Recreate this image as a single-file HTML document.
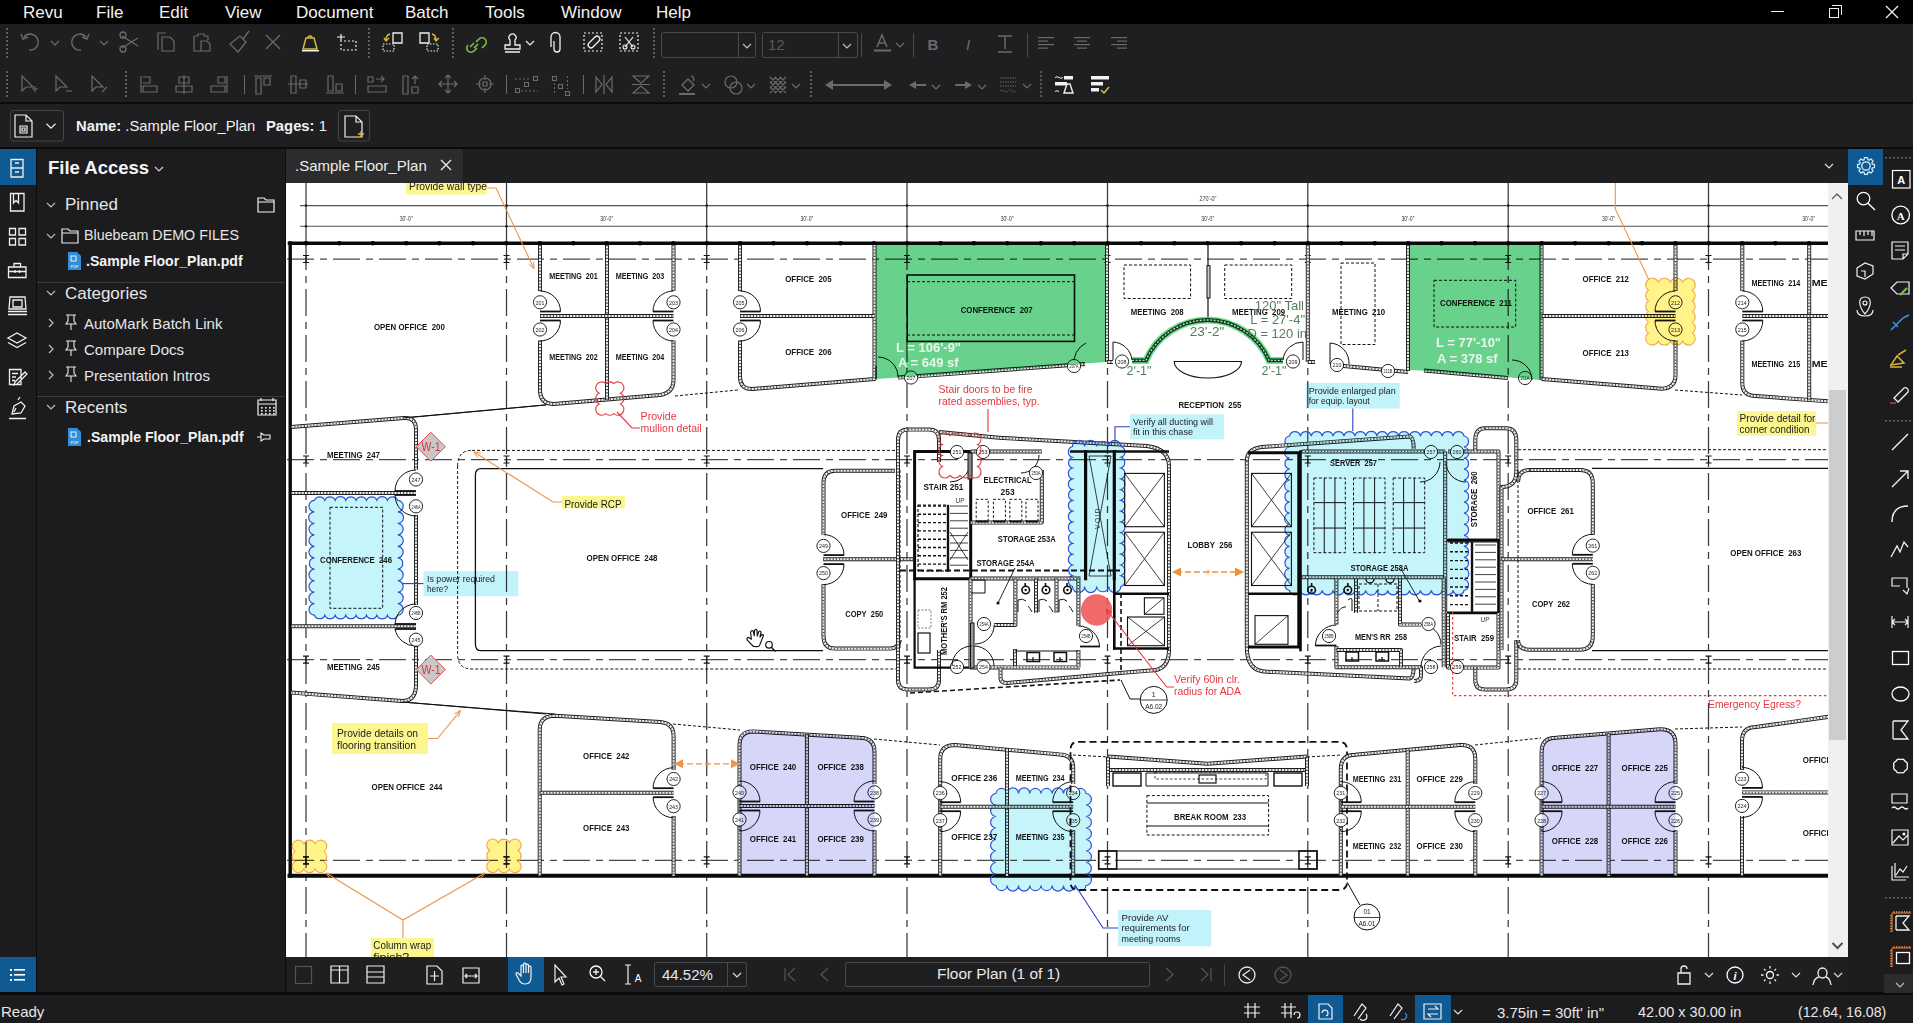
<!DOCTYPE html>
<html><head><meta charset="utf-8"><title>Revu</title><style>
*{margin:0;padding:0;box-sizing:border-box}
html,body{width:1913px;height:1023px;overflow:hidden}
body{background:#1f1f21;font-family:"Liberation Sans",sans-serif;position:relative;color:#e8e8e8}
.a{position:absolute}
.menu{left:0;top:0;width:1913px;height:24px;background:#000}
.menu span{position:absolute;top:3px;font-size:17px;line-height:19px;color:#f2f2f2}
.sep{background:#0b0b0c}
svg{position:absolute;left:0;top:0;overflow:visible}
.t{position:absolute;white-space:nowrap;line-height:1}
</style></head><body>
<!-- menu bar -->
<div class="a menu">
<span style="left:23px">Revu</span><span style="left:96px">File</span><span style="left:159px">Edit</span><span style="left:225px">View</span><span style="left:296px">Document</span><span style="left:405px">Batch</span><span style="left:485px">Tools</span><span style="left:561px">Window</span><span style="left:656px">Help</span>
</div>
<!-- toolbar bg -->
<div class="a" style="left:0;top:24px;width:1913px;height:79px;background:#1f1f21"></div>
<!-- separators -->
<div class="a sep" style="left:0;top:102px;width:1913px;height:2px"></div>
<div class="a" style="left:0;top:104px;width:1913px;height:43px;background:#1f1f21"></div>
<div class="a sep" style="left:0;top:147px;width:1913px;height:2px"></div>
<div class="t" style="left:76px;top:119px;font-size:14.8px;color:#f2f2f2"><b>Name:</b> .Sample Floor_Plan</div>
<div class="t" style="left:266px;top:119px;font-size:14.8px;color:#f2f2f2"><b>Pages:</b> 1</div>

<!-- left icon strip -->
<div class="a" style="left:0;top:149px;width:36px;height:844px;background:#1c1c1e"></div>
<div class="a" style="left:0;top:149px;width:36px;height:36px;background:#0f5a92"></div>
<div class="a" style="left:36px;top:149px;width:1px;height:844px;background:#0b0b0c"></div>
<div class="a" style="left:0;top:957px;width:36px;height:35px;background:#0f5a92"></div>

<!-- file access panel -->
<div class="a" style="left:37px;top:149px;width:248px;height:844px;background:#1c1c1e"></div>
<div class="a" style="left:37px;top:282px;width:248px;height:1px;background:#3a3a3c"></div>
<div class="a" style="left:37px;top:396px;width:248px;height:1px;background:#3a3a3c"></div>
<div class="a" style="left:285px;top:149px;width:1px;height:844px;background:#0b0b0c"></div>
<div class="t" style="left:48px;top:159px;font-size:18.5px;font-weight:bold;color:#f4f4f4">File Access</div>
<div class="t" style="left:65px;top:196px;font-size:17px;color:#e6e6e6">Pinned</div>
<div class="t" style="left:84px;top:228px;font-size:14.3px;color:#e6e6e6">Bluebeam DEMO FILES</div>
<div class="t" style="left:86px;top:254px;font-size:14.1px;font-weight:bold;color:#f4f4f4">.Sample Floor_Plan.pdf</div>
<div class="t" style="left:65px;top:285px;font-size:17px;color:#e6e6e6">Categories</div>
<div class="t" style="left:84px;top:316px;font-size:15px;color:#e6e6e6">AutoMark Batch Link</div>
<div class="t" style="left:84px;top:342px;font-size:15px;color:#e6e6e6">Compare Docs</div>
<div class="t" style="left:84px;top:368px;font-size:15px;color:#e6e6e6">Presentation Intros</div>
<div class="t" style="left:65px;top:399px;font-size:17px;color:#e6e6e6">Recents</div>
<div class="t" style="left:87px;top:430px;font-size:14.1px;font-weight:bold;color:#f4f4f4">.Sample Floor_Plan.pdf</div>

<!-- tab bar -->
<div class="a" style="left:286px;top:149px;width:1562px;height:34px;background:#1f1f21"></div>
<div class="a" style="left:286px;top:149px;width:177px;height:34px;background:#2c2c2e"></div>
<div class="t" style="left:295px;top:158px;font-size:15px;color:#ececec">.Sample Floor_Plan</div>

<!-- canvas -->
<div class="a" style="left:286px;top:183px;width:1542px;height:774px;background:#fff"></div>
<svg width="1913" height="1023" viewBox="0 0 1913 1023" style="position:absolute;left:0;top:0"><defs><clipPath id="cvc"><rect x="286" y="183" width="1542" height="774"/></clipPath></defs><g clip-path="url(#cvc)"><g font-family="Liberation Sans, sans-serif">
<line x1="300" y1="205.6" x2="1828" y2="205.6" stroke="#555" stroke-width="1.1" />
<line x1="300" y1="226.3" x2="1828" y2="226.3" stroke="#555" stroke-width="1.1" />
<text x="406.2" y="221" font-size="6.5" fill="#333" text-anchor="middle" textLength="13" lengthAdjust="spacingAndGlyphs">30'-0"</text>
<text x="606.7" y="221" font-size="6.5" fill="#333" text-anchor="middle" textLength="13" lengthAdjust="spacingAndGlyphs">30'-0"</text>
<text x="806.9000000000001" y="221" font-size="6.5" fill="#333" text-anchor="middle" textLength="13" lengthAdjust="spacingAndGlyphs">30'-0"</text>
<text x="1007.2" y="221" font-size="6.5" fill="#333" text-anchor="middle" textLength="13" lengthAdjust="spacingAndGlyphs">30'-0"</text>
<text x="1207.7" y="221" font-size="6.5" fill="#333" text-anchor="middle" textLength="13" lengthAdjust="spacingAndGlyphs">30'-0"</text>
<text x="1408.0" y="221" font-size="6.5" fill="#333" text-anchor="middle" textLength="13" lengthAdjust="spacingAndGlyphs">30'-0"</text>
<text x="1608.4" y="221" font-size="6.5" fill="#333" text-anchor="middle" textLength="13" lengthAdjust="spacingAndGlyphs">30'-0"</text>
<text x="1808.7" y="221" font-size="6.5" fill="#333" text-anchor="middle" textLength="13" lengthAdjust="spacingAndGlyphs">30'-0"</text>
<text x="1208" y="201" font-size="6.5" fill="#333" text-anchor="middle" textLength="17" lengthAdjust="spacingAndGlyphs">270'-0"</text>
<line x1="306" y1="183" x2="306" y2="243" stroke="#3a3a3a" stroke-width="1.25" />
<line x1="306" y1="243" x2="306" y2="957" stroke="#3a3a3a" stroke-width="1.25" stroke-dasharray="27 6 7 6"/>
<circle cx="306" cy="205.6" r="1.3" fill="#222"/><circle cx="306" cy="226.3" r="1.3" fill="#222"/>
<line x1="506.5" y1="183" x2="506.5" y2="243" stroke="#3a3a3a" stroke-width="1.25" />
<line x1="506.5" y1="243" x2="506.5" y2="957" stroke="#3a3a3a" stroke-width="1.25" stroke-dasharray="27 6 7 6"/>
<circle cx="506.5" cy="205.6" r="1.3" fill="#222"/><circle cx="506.5" cy="226.3" r="1.3" fill="#222"/>
<line x1="706.7" y1="183" x2="706.7" y2="243" stroke="#3a3a3a" stroke-width="1.25" />
<line x1="706.7" y1="243" x2="706.7" y2="957" stroke="#3a3a3a" stroke-width="1.25" stroke-dasharray="27 6 7 6"/>
<circle cx="706.7" cy="205.6" r="1.3" fill="#222"/><circle cx="706.7" cy="226.3" r="1.3" fill="#222"/>
<line x1="907" y1="183" x2="907" y2="243" stroke="#3a3a3a" stroke-width="1.25" />
<line x1="907" y1="243" x2="907" y2="957" stroke="#3a3a3a" stroke-width="1.25" stroke-dasharray="27 6 7 6"/>
<circle cx="907" cy="205.6" r="1.3" fill="#222"/><circle cx="907" cy="226.3" r="1.3" fill="#222"/>
<line x1="1107.5" y1="183" x2="1107.5" y2="243" stroke="#3a3a3a" stroke-width="1.25" />
<line x1="1107.5" y1="243" x2="1107.5" y2="957" stroke="#3a3a3a" stroke-width="1.25" stroke-dasharray="27 6 7 6"/>
<circle cx="1107.5" cy="205.6" r="1.3" fill="#222"/><circle cx="1107.5" cy="226.3" r="1.3" fill="#222"/>
<line x1="1307.8" y1="183" x2="1307.8" y2="243" stroke="#3a3a3a" stroke-width="1.25" />
<line x1="1307.8" y1="243" x2="1307.8" y2="957" stroke="#3a3a3a" stroke-width="1.25" stroke-dasharray="27 6 7 6"/>
<circle cx="1307.8" cy="205.6" r="1.3" fill="#222"/><circle cx="1307.8" cy="226.3" r="1.3" fill="#222"/>
<line x1="1508.2" y1="183" x2="1508.2" y2="243" stroke="#3a3a3a" stroke-width="1.25" />
<line x1="1508.2" y1="243" x2="1508.2" y2="957" stroke="#3a3a3a" stroke-width="1.25" stroke-dasharray="27 6 7 6"/>
<circle cx="1508.2" cy="205.6" r="1.3" fill="#222"/><circle cx="1508.2" cy="226.3" r="1.3" fill="#222"/>
<line x1="1708.5" y1="183" x2="1708.5" y2="243" stroke="#3a3a3a" stroke-width="1.25" />
<line x1="1708.5" y1="243" x2="1708.5" y2="957" stroke="#3a3a3a" stroke-width="1.25" stroke-dasharray="27 6 7 6"/>
<circle cx="1708.5" cy="205.6" r="1.3" fill="#222"/><circle cx="1708.5" cy="226.3" r="1.3" fill="#222"/>
<line x1="287" y1="259" x2="1828" y2="259" stroke="#4a4a4a" stroke-width="1.25" stroke-dasharray="27 6 7 6"/>
<line x1="287" y1="459.5" x2="1828" y2="459.5" stroke="#4a4a4a" stroke-width="1.25" stroke-dasharray="27 6 7 6"/>
<line x1="287" y1="659.7" x2="1828" y2="659.7" stroke="#4a4a4a" stroke-width="1.25" stroke-dasharray="27 6 7 6"/>
<line x1="287" y1="860.3" x2="1828" y2="860.3" stroke="#4a4a4a" stroke-width="1.25" stroke-dasharray="27 6 7 6"/>
<path d="M303 255.5H309M303 262.5H309M306 255.5V262.5" stroke="#111" stroke-width="1.2" fill="none" />
<path d="M303 456.0H309M303 463.0H309M306 456.0V463.0" stroke="#111" stroke-width="1.2" fill="none" />
<path d="M303 656.2H309M303 663.2H309M306 656.2V663.2" stroke="#111" stroke-width="1.2" fill="none" />
<path d="M303 856.8H309M303 863.8H309M306 856.8V863.8" stroke="#111" stroke-width="1.2" fill="none" />
<path d="M503.5 255.5H509.5M503.5 262.5H509.5M506.5 255.5V262.5" stroke="#111" stroke-width="1.2" fill="none" />
<path d="M503.5 456.0H509.5M503.5 463.0H509.5M506.5 456.0V463.0" stroke="#111" stroke-width="1.2" fill="none" />
<path d="M503.5 656.2H509.5M503.5 663.2H509.5M506.5 656.2V663.2" stroke="#111" stroke-width="1.2" fill="none" />
<path d="M503.5 856.8H509.5M503.5 863.8H509.5M506.5 856.8V863.8" stroke="#111" stroke-width="1.2" fill="none" />
<path d="M703.7 255.5H709.7M703.7 262.5H709.7M706.7 255.5V262.5" stroke="#111" stroke-width="1.2" fill="none" />
<path d="M703.7 456.0H709.7M703.7 463.0H709.7M706.7 456.0V463.0" stroke="#111" stroke-width="1.2" fill="none" />
<path d="M703.7 656.2H709.7M703.7 663.2H709.7M706.7 656.2V663.2" stroke="#111" stroke-width="1.2" fill="none" />
<path d="M703.7 856.8H709.7M703.7 863.8H709.7M706.7 856.8V863.8" stroke="#111" stroke-width="1.2" fill="none" />
<path d="M904 255.5H910M904 262.5H910M907 255.5V262.5" stroke="#111" stroke-width="1.2" fill="none" />
<path d="M904 456.0H910M904 463.0H910M907 456.0V463.0" stroke="#111" stroke-width="1.2" fill="none" />
<path d="M904 656.2H910M904 663.2H910M907 656.2V663.2" stroke="#111" stroke-width="1.2" fill="none" />
<path d="M904 856.8H910M904 863.8H910M907 856.8V863.8" stroke="#111" stroke-width="1.2" fill="none" />
<path d="M1104.5 255.5H1110.5M1104.5 262.5H1110.5M1107.5 255.5V262.5" stroke="#111" stroke-width="1.2" fill="none" />
<path d="M1104.5 456.0H1110.5M1104.5 463.0H1110.5M1107.5 456.0V463.0" stroke="#111" stroke-width="1.2" fill="none" />
<path d="M1104.5 656.2H1110.5M1104.5 663.2H1110.5M1107.5 656.2V663.2" stroke="#111" stroke-width="1.2" fill="none" />
<path d="M1104.5 856.8H1110.5M1104.5 863.8H1110.5M1107.5 856.8V863.8" stroke="#111" stroke-width="1.2" fill="none" />
<path d="M1304.8 255.5H1310.8M1304.8 262.5H1310.8M1307.8 255.5V262.5" stroke="#111" stroke-width="1.2" fill="none" />
<path d="M1304.8 456.0H1310.8M1304.8 463.0H1310.8M1307.8 456.0V463.0" stroke="#111" stroke-width="1.2" fill="none" />
<path d="M1304.8 656.2H1310.8M1304.8 663.2H1310.8M1307.8 656.2V663.2" stroke="#111" stroke-width="1.2" fill="none" />
<path d="M1304.8 856.8H1310.8M1304.8 863.8H1310.8M1307.8 856.8V863.8" stroke="#111" stroke-width="1.2" fill="none" />
<path d="M1505.2 255.5H1511.2M1505.2 262.5H1511.2M1508.2 255.5V262.5" stroke="#111" stroke-width="1.2" fill="none" />
<path d="M1505.2 456.0H1511.2M1505.2 463.0H1511.2M1508.2 456.0V463.0" stroke="#111" stroke-width="1.2" fill="none" />
<path d="M1505.2 656.2H1511.2M1505.2 663.2H1511.2M1508.2 656.2V663.2" stroke="#111" stroke-width="1.2" fill="none" />
<path d="M1505.2 856.8H1511.2M1505.2 863.8H1511.2M1508.2 856.8V863.8" stroke="#111" stroke-width="1.2" fill="none" />
<path d="M1705.5 255.5H1711.5M1705.5 262.5H1711.5M1708.5 255.5V262.5" stroke="#111" stroke-width="1.2" fill="none" />
<path d="M1705.5 456.0H1711.5M1705.5 463.0H1711.5M1708.5 456.0V463.0" stroke="#111" stroke-width="1.2" fill="none" />
<path d="M1705.5 656.2H1711.5M1705.5 663.2H1711.5M1708.5 656.2V663.2" stroke="#111" stroke-width="1.2" fill="none" />
<path d="M1705.5 856.8H1711.5M1705.5 863.8H1711.5M1708.5 856.8V863.8" stroke="#111" stroke-width="1.2" fill="none" />
</g>
<path d="M289.5 243.2 H1830" stroke="#0a0a0a" stroke-width="3.6" fill="none" stroke-linecap="square"/>
<path d="M290.2 243 V876" stroke="#0a0a0a" stroke-width="3.4" fill="none" stroke-linecap="square"/>
<path d="M289.5 875.7 H1830" stroke="#0a0a0a" stroke-width="4" fill="none" stroke-linecap="square"/>
<circle cx="306.0" cy="243.2" r="2.2" fill="#000"/>
<circle cx="339.4" cy="243.2" r="2.2" fill="#000"/>
<circle cx="372.8" cy="243.2" r="2.2" fill="#000"/>
<circle cx="406.2" cy="243.2" r="2.2" fill="#000"/>
<circle cx="439.6" cy="243.2" r="2.2" fill="#000"/>
<circle cx="473.0" cy="243.2" r="2.2" fill="#000"/>
<circle cx="506.4" cy="243.2" r="2.2" fill="#000"/>
<circle cx="539.8" cy="243.2" r="2.2" fill="#000"/>
<circle cx="573.2" cy="243.2" r="2.2" fill="#000"/>
<circle cx="606.6" cy="243.2" r="2.2" fill="#000"/>
<circle cx="640.0" cy="243.2" r="2.2" fill="#000"/>
<circle cx="673.4" cy="243.2" r="2.2" fill="#000"/>
<circle cx="706.8" cy="243.2" r="2.2" fill="#000"/>
<circle cx="740.2" cy="243.2" r="2.2" fill="#000"/>
<circle cx="773.6" cy="243.2" r="2.2" fill="#000"/>
<circle cx="807.0" cy="243.2" r="2.2" fill="#000"/>
<circle cx="840.4" cy="243.2" r="2.2" fill="#000"/>
<circle cx="873.8" cy="243.2" r="2.2" fill="#000"/>
<circle cx="907.2" cy="243.2" r="2.2" fill="#000"/>
<circle cx="940.6" cy="243.2" r="2.2" fill="#000"/>
<circle cx="974.0" cy="243.2" r="2.2" fill="#000"/>
<circle cx="1007.4" cy="243.2" r="2.2" fill="#000"/>
<circle cx="1040.8" cy="243.2" r="2.2" fill="#000"/>
<circle cx="1074.2" cy="243.2" r="2.2" fill="#000"/>
<circle cx="1107.6" cy="243.2" r="2.2" fill="#000"/>
<circle cx="1141.0" cy="243.2" r="2.2" fill="#000"/>
<circle cx="1174.4" cy="243.2" r="2.2" fill="#000"/>
<circle cx="1207.8" cy="243.2" r="2.2" fill="#000"/>
<circle cx="1241.2" cy="243.2" r="2.2" fill="#000"/>
<circle cx="1274.6" cy="243.2" r="2.2" fill="#000"/>
<circle cx="1308.0" cy="243.2" r="2.2" fill="#000"/>
<circle cx="1341.4" cy="243.2" r="2.2" fill="#000"/>
<circle cx="1374.8" cy="243.2" r="2.2" fill="#000"/>
<circle cx="1408.2" cy="243.2" r="2.2" fill="#000"/>
<circle cx="1441.6" cy="243.2" r="2.2" fill="#000"/>
<circle cx="1475.0" cy="243.2" r="2.2" fill="#000"/>
<circle cx="1508.4" cy="243.2" r="2.2" fill="#000"/>
<circle cx="1541.8" cy="243.2" r="2.2" fill="#000"/>
<circle cx="1575.2" cy="243.2" r="2.2" fill="#000"/>
<circle cx="1608.6" cy="243.2" r="2.2" fill="#000"/>
<circle cx="1642.0" cy="243.2" r="2.2" fill="#000"/>
<circle cx="1675.4" cy="243.2" r="2.2" fill="#000"/>
<circle cx="1708.8" cy="243.2" r="2.2" fill="#000"/>
<circle cx="1742.2" cy="243.2" r="2.2" fill="#000"/>
<circle cx="1775.6" cy="243.2" r="2.2" fill="#000"/>
<circle cx="1809.0" cy="243.2" r="2.2" fill="#000"/>
<circle cx="1842.4" cy="243.2" r="2.2" fill="#000"/>
<path d="M404 418 L546 405" stroke="#111" stroke-width="1" fill="none" />
<path d="M675 396 L738 390" stroke="#111" stroke-width="1" fill="none" stroke-dasharray="3 2"/>
<path d="M291 409 L289 409" stroke="#111" stroke-width="1" fill="none" />
<path d="M1675 390 L1742 395" stroke="#111" stroke-width="1" fill="none" stroke-dasharray="3 2"/>
<path d="M402 702 L546 714" stroke="#111" stroke-width="1" fill="none" />
<path d="M673 724 L740 730" stroke="#111" stroke-width="1" fill="none" stroke-dasharray="3 2"/>
<path d="M874 739 L940 745" stroke="#111" stroke-width="1" fill="none" stroke-dasharray="3 2"/>
<path d="M1073 755 L1108 757" stroke="#111" stroke-width="1" fill="none" stroke-dasharray="3 2"/>
<path d="M1307 757 L1341 755" stroke="#111" stroke-width="1" fill="none" stroke-dasharray="3 2"/>
<path d="M1475 745 L1541 738" stroke="#111" stroke-width="1" fill="none" stroke-dasharray="3 2"/>
<path d="M1675 729 L1742 727" stroke="#111" stroke-width="1" fill="none" stroke-dasharray="3 2"/>
<path d="M540 245 V291 M540 340.5 V390 Q540 404 554 404 L660 395 Q673.5 393 673.5 380 V340.5 M673.5 291 V245" stroke="#1c1c1c" stroke-width="4" fill="none" stroke-linejoin="round"/>
<path d="M540 245 V291 M540 340.5 V390 Q540 404 554 404 L660 395 Q673.5 393 673.5 380 V340.5 M673.5 291 V245" stroke="#f2f2f2" stroke-width="2.1" fill="none" stroke-linejoin="round"/>
<path d="M540 245 V291 M540 340.5 V390 Q540 404 554 404 L660 395 Q673.5 393 673.5 380 V340.5 M673.5 291 V245" stroke="#555" stroke-width="2" fill="none" stroke-dasharray="1.2 2" stroke-linejoin="round"/>
<path d="M607 245 V400" stroke="#1c1c1c" stroke-width="4" fill="none" stroke-linejoin="round"/>
<path d="M607 245 V400" stroke="#f2f2f2" stroke-width="2.1" fill="none" stroke-linejoin="round"/>
<path d="M607 245 V400" stroke="#555" stroke-width="2" fill="none" stroke-dasharray="1.2 2" stroke-linejoin="round"/>
<path d="M540 316 H673.5" stroke="#1c1c1c" stroke-width="4" fill="none" stroke-linejoin="round"/>
<path d="M540 316 H673.5" stroke="#f2f2f2" stroke-width="2.1" fill="none" stroke-linejoin="round"/>
<path d="M540 316 H673.5" stroke="#555" stroke-width="2" fill="none" stroke-dasharray="1.2 2" stroke-linejoin="round"/>
<path d="M540 291.0 A20.5 20.5 0 0 1 560.5 311.5" stroke="#111" stroke-width="1" fill="none" />
<line x1="540" y1="311.5" x2="560.5" y2="311.5" stroke="#111" stroke-width="1.8" />
<path d="M540 341.0 A20.5 20.5 0 0 0 560.5 320.5" stroke="#111" stroke-width="1" fill="none" />
<line x1="540" y1="320.5" x2="560.5" y2="320.5" stroke="#111" stroke-width="1.8" />
<circle cx="540" cy="302.3" r="6.6" fill="#fff" stroke="#111" stroke-width="0.9"/>
<text x="540" y="302.6" font-size="5.5" fill="#222" text-anchor="middle" dominant-baseline="central" textLength="8.9" lengthAdjust="spacingAndGlyphs">201</text>
<circle cx="540" cy="329.5" r="6.6" fill="#fff" stroke="#111" stroke-width="0.9"/>
<text x="540" y="329.8" font-size="5.5" fill="#222" text-anchor="middle" dominant-baseline="central" textLength="8.9" lengthAdjust="spacingAndGlyphs">202</text>
<path d="M673.5 291.0 A20.5 20.5 0 0 0 653.0 311.5" stroke="#111" stroke-width="1" fill="none" />
<line x1="673.5" y1="311.5" x2="653.0" y2="311.5" stroke="#111" stroke-width="1.8" />
<path d="M673.5 341.0 A20.5 20.5 0 0 1 653.0 320.5" stroke="#111" stroke-width="1" fill="none" />
<line x1="673.5" y1="320.5" x2="653.0" y2="320.5" stroke="#111" stroke-width="1.8" />
<circle cx="673.5" cy="302.3" r="6.6" fill="#fff" stroke="#111" stroke-width="0.9"/>
<text x="673.5" y="302.6" font-size="5.5" fill="#222" text-anchor="middle" dominant-baseline="central" textLength="8.9" lengthAdjust="spacingAndGlyphs">203</text>
<circle cx="673.5" cy="329.5" r="6.6" fill="#fff" stroke="#111" stroke-width="0.9"/>
<text x="673.5" y="329.8" font-size="5.5" fill="#222" text-anchor="middle" dominant-baseline="central" textLength="8.9" lengthAdjust="spacingAndGlyphs">204</text>
<text x="573.5" y="275.6" font-size="9.6" font-weight="bold" fill="#161616" text-anchor="middle" dominant-baseline="central" textLength="48.7" lengthAdjust="spacingAndGlyphs">MEETING&#160;&#160;201</text>
<text x="640" y="275.6" font-size="9.6" font-weight="bold" fill="#161616" text-anchor="middle" dominant-baseline="central" textLength="48.7" lengthAdjust="spacingAndGlyphs">MEETING&#160;&#160;203</text>
<text x="573.5" y="356.5" font-size="9.6" font-weight="bold" fill="#161616" text-anchor="middle" dominant-baseline="central" textLength="48.7" lengthAdjust="spacingAndGlyphs">MEETING&#160;&#160;202</text>
<text x="640" y="356.5" font-size="9.6" font-weight="bold" fill="#161616" text-anchor="middle" dominant-baseline="central" textLength="48.7" lengthAdjust="spacingAndGlyphs">MEETING&#160;&#160;204</text>
<text x="409.4" y="326.3" font-size="9.6" font-weight="bold" fill="#161616" text-anchor="middle" dominant-baseline="central" textLength="71" lengthAdjust="spacingAndGlyphs">OPEN OFFICE&#160;&#160;200</text>
<path d="M740 245 V291 M740 340.5 V377 Q740 389 752 389 L874.5 379 V245" stroke="#1c1c1c" stroke-width="4" fill="none" stroke-linejoin="round"/>
<path d="M740 245 V291 M740 340.5 V377 Q740 389 752 389 L874.5 379 V245" stroke="#f2f2f2" stroke-width="2.1" fill="none" stroke-linejoin="round"/>
<path d="M740 245 V291 M740 340.5 V377 Q740 389 752 389 L874.5 379 V245" stroke="#555" stroke-width="2" fill="none" stroke-dasharray="1.2 2" stroke-linejoin="round"/>
<path d="M740 316 H874.5" stroke="#1c1c1c" stroke-width="4" fill="none" stroke-linejoin="round"/>
<path d="M740 316 H874.5" stroke="#f2f2f2" stroke-width="2.1" fill="none" stroke-linejoin="round"/>
<path d="M740 316 H874.5" stroke="#555" stroke-width="2" fill="none" stroke-dasharray="1.2 2" stroke-linejoin="round"/>
<path d="M740 291.0 A20.5 20.5 0 0 1 760.5 311.5" stroke="#111" stroke-width="1" fill="none" />
<line x1="740" y1="311.5" x2="760.5" y2="311.5" stroke="#111" stroke-width="1.8" />
<path d="M740 341.0 A20.5 20.5 0 0 0 760.5 320.5" stroke="#111" stroke-width="1" fill="none" />
<line x1="740" y1="320.5" x2="760.5" y2="320.5" stroke="#111" stroke-width="1.8" />
<circle cx="740" cy="302.3" r="6.6" fill="#fff" stroke="#111" stroke-width="0.9"/>
<text x="740" y="302.6" font-size="5.5" fill="#222" text-anchor="middle" dominant-baseline="central" textLength="8.9" lengthAdjust="spacingAndGlyphs">205</text>
<circle cx="740" cy="329.5" r="6.6" fill="#fff" stroke="#111" stroke-width="0.9"/>
<text x="740" y="329.8" font-size="5.5" fill="#222" text-anchor="middle" dominant-baseline="central" textLength="8.9" lengthAdjust="spacingAndGlyphs">206</text>
<text x="808.4" y="278.6" font-size="9.6" font-weight="bold" fill="#161616" text-anchor="middle" dominant-baseline="central" textLength="46.4" lengthAdjust="spacingAndGlyphs">OFFICE&#160;&#160;205</text>
<text x="808.4" y="351.8" font-size="9.6" font-weight="bold" fill="#161616" text-anchor="middle" dominant-baseline="central" textLength="46.4" lengthAdjust="spacingAndGlyphs">OFFICE&#160;&#160;206</text>
<path d="M898 377.6 L1085 364" stroke="#1c1c1c" stroke-width="4" fill="none" stroke-linejoin="round"/>
<path d="M898 377.6 L1085 364" stroke="#f2f2f2" stroke-width="2.1" fill="none" stroke-linejoin="round"/>
<path d="M898 377.6 L1085 364" stroke="#555" stroke-width="2" fill="none" stroke-dasharray="1.2 2" stroke-linejoin="round"/>
<rect x="907.2" y="275" width="167.3" height="66.4" stroke="#111" stroke-width="1.6" fill="none" />
<path d="M907 281.7 H1074.5 M907 335 H1074.5" stroke="#111" stroke-width="1" fill="none" stroke-dasharray="3 2"/>
<text x="996.7" y="309" font-size="9.6" font-weight="bold" fill="#161616" text-anchor="middle" dominant-baseline="central" textLength="72" lengthAdjust="spacingAndGlyphs">CONFERENCE&#160;&#160;207</text>
<path d="M876 379 V366" stroke="#111" stroke-width="1.2" fill="none" />
<path d="M878 357 A20 20 0 0 1 898 377" stroke="#111" stroke-width="1" fill="none" />
<circle cx="911" cy="377.5" r="6.6" fill="#fff" stroke="#111" stroke-width="0.9"/>
<text x="911" y="377.8" font-size="5.5" fill="#222" text-anchor="middle" dominant-baseline="central" textLength="8.9" lengthAdjust="spacingAndGlyphs">207</text>
<path d="M1086 343 A22 22 0 0 0 1074 366" stroke="#111" stroke-width="1" fill="none" />
<circle cx="1074" cy="366" r="6.6" fill="#fff" stroke="#111" stroke-width="0.9"/>
<text x="1074" y="366.3" font-size="5.5" fill="#222" text-anchor="middle" dominant-baseline="central" textLength="8.9" lengthAdjust="spacingAndGlyphs">207A</text>
<path d="M1107 245 V362" stroke="#1c1c1c" stroke-width="4" fill="none" stroke-linejoin="round"/>
<path d="M1107 245 V362" stroke="#f2f2f2" stroke-width="2.1" fill="none" stroke-linejoin="round"/>
<path d="M1107 245 V362" stroke="#555" stroke-width="2" fill="none" stroke-dasharray="1.2 2" stroke-linejoin="round"/>
<path d="M1107 362 H1113" stroke="#1c1c1c" stroke-width="4" fill="none" stroke-linejoin="round"/>
<path d="M1107 362 H1113" stroke="#f2f2f2" stroke-width="2.1" fill="none" stroke-linejoin="round"/>
<path d="M1107 362 H1113" stroke="#555" stroke-width="2" fill="none" stroke-dasharray="1.2 2" stroke-linejoin="round"/>
<path d="M1208 245 V320" stroke="#111" stroke-width="1.2"/>
<rect x="1207" y="265.6" width="3" height="32.4" stroke="#111" stroke-width="1" fill="#ccc" />
<path d="M1124 265 H1190.6 V298.5 H1124Z" stroke="#111" stroke-width="1" fill="none" stroke-dasharray="3 2"/>
<path d="M1224.7 265 H1291.7 V298.5 H1224.7Z" stroke="#111" stroke-width="1" fill="none" stroke-dasharray="3 2"/>
<text x="1157.2" y="311.2" font-size="9.6" font-weight="bold" fill="#161616" text-anchor="middle" dominant-baseline="central" textLength="53" lengthAdjust="spacingAndGlyphs">MEETING&#160;&#160;208</text>
<text x="1258.6" y="311.2" font-size="9.6" font-weight="bold" fill="#161616" text-anchor="middle" dominant-baseline="central" textLength="53" lengthAdjust="spacingAndGlyphs">MEETING&#160;&#160;209</text>
<path d="M1132 360.4 H1146 A67 67 0 0 1 1269 360.4 H1283" stroke="#3fd46a" stroke-width="7" fill="none" opacity="0.75"/>
<path d="M1132 360.4 H1146 A67 67 0 0 1 1269 360.4 H1283" stroke="#0f3a18" stroke-width="3.8" fill="none"/>
<path d="M1132 360.4 H1146 A67 67 0 0 1 1269 360.4 H1283" stroke="#b8d8bf" stroke-width="1.4" fill="none" stroke-dasharray="2 1.5"/>
<path d="M1113 342 V360 M1113 342 A20 20 0 0 1 1132 360" stroke="#111" stroke-width="1" fill="none" />
<circle cx="1122" cy="361.5" r="6.6" fill="#fff" stroke="#111" stroke-width="0.9"/>
<text x="1122" y="361.8" font-size="5.5" fill="#222" text-anchor="middle" dominant-baseline="central" textLength="8.9" lengthAdjust="spacingAndGlyphs">208</text>
<path d="M1303 342 V360 M1303 342 A20 20 0 0 0 1283 360" stroke="#111" stroke-width="1" fill="none" />
<circle cx="1293" cy="361.5" r="6.6" fill="#fff" stroke="#111" stroke-width="0.9"/>
<text x="1293" y="361.8" font-size="5.5" fill="#222" text-anchor="middle" dominant-baseline="central" textLength="8.9" lengthAdjust="spacingAndGlyphs">209</text>
<path d="M1174.2 361.5 H1241.5 A33.6 16.5 0 0 1 1174.2 361.5Z" stroke="#111" stroke-width="1.1" fill="none" />
<text x="1207" y="336" font-size="13.5" fill="#3f7048" fill-opacity="0.9" text-anchor="middle">23'-2"</text>
<text x="1139" y="375" font-size="12.5" fill="#3f7048" fill-opacity="0.9" text-anchor="middle">2'-1"</text>
<text x="1274" y="375" font-size="12.5" fill="#3f7048" fill-opacity="0.9" text-anchor="middle">2'-1"</text>
<text x="1304" y="310" font-size="13" fill="#3f7048" fill-opacity="0.9" text-anchor="end">120" Tall</text>
<text x="1305" y="324" font-size="13" fill="#3f7048" fill-opacity="0.9" text-anchor="end">L = 27'-4"</text>
<text x="1307" y="338" font-size="13" fill="#3f7048" fill-opacity="0.9" text-anchor="end">D = 120 in</text>
<text x="1209.9" y="404.4" font-size="9.6" font-weight="bold" fill="#161616" text-anchor="middle" dominant-baseline="central" textLength="63" lengthAdjust="spacingAndGlyphs">RECEPTION&#160;&#160;255</text>
<path d="M1307.8 245 V362" stroke="#1c1c1c" stroke-width="4" fill="none" stroke-linejoin="round"/>
<path d="M1307.8 245 V362" stroke="#f2f2f2" stroke-width="2.1" fill="none" stroke-linejoin="round"/>
<path d="M1307.8 245 V362" stroke="#555" stroke-width="2" fill="none" stroke-dasharray="1.2 2" stroke-linejoin="round"/>
<path d="M1307.8 362 H1315" stroke="#1c1c1c" stroke-width="4" fill="none" stroke-linejoin="round"/>
<path d="M1307.8 362 H1315" stroke="#f2f2f2" stroke-width="2.1" fill="none" stroke-linejoin="round"/>
<path d="M1307.8 362 H1315" stroke="#555" stroke-width="2" fill="none" stroke-dasharray="1.2 2" stroke-linejoin="round"/>
<path d="M1408 245 V371" stroke="#1c1c1c" stroke-width="4" fill="none" stroke-linejoin="round"/>
<path d="M1408 245 V371" stroke="#f2f2f2" stroke-width="2.1" fill="none" stroke-linejoin="round"/>
<path d="M1408 245 V371" stroke="#555" stroke-width="2" fill="none" stroke-dasharray="1.2 2" stroke-linejoin="round"/>
<path d="M1341 263 H1375 V344.5 H1341Z" stroke="#111" stroke-width="1" fill="none" stroke-dasharray="3 2"/>
<text x="1358.6" y="311.2" font-size="9.6" font-weight="bold" fill="#161616" text-anchor="middle" dominant-baseline="central" textLength="53" lengthAdjust="spacingAndGlyphs">MEETING&#160;&#160;210</text>
<path d="M1333 365 L1408 372" stroke="#1c1c1c" stroke-width="4" fill="none" stroke-linejoin="round"/>
<path d="M1333 365 L1408 372" stroke="#f2f2f2" stroke-width="2.1" fill="none" stroke-linejoin="round"/>
<path d="M1333 365 L1408 372" stroke="#555" stroke-width="2" fill="none" stroke-dasharray="1.2 2" stroke-linejoin="round"/>
<path d="M1330 343 V364 M1330 343 A20 20 0 0 1 1349 364" stroke="#111" stroke-width="1" fill="none" />
<circle cx="1337" cy="365" r="6.6" fill="#fff" stroke="#111" stroke-width="0.9"/>
<text x="1337" y="365.3" font-size="5.5" fill="#222" text-anchor="middle" dominant-baseline="central" textLength="8.9" lengthAdjust="spacingAndGlyphs">210</text>
<path d="M1434 280.3 H1515.7 V327 H1434Z" stroke="#111" stroke-width="1" fill="none" stroke-dasharray="3 2"/>
<text x="1476" y="302.7" font-size="9.6" font-weight="bold" fill="#161616" text-anchor="middle" dominant-baseline="central" textLength="72" lengthAdjust="spacingAndGlyphs">CONFERENCE&#160;&#160;211</text>
<path d="M1424 370.5 L1508 378" stroke="#1c1c1c" stroke-width="4" fill="none" stroke-linejoin="round"/>
<path d="M1424 370.5 L1508 378" stroke="#f2f2f2" stroke-width="2.1" fill="none" stroke-linejoin="round"/>
<path d="M1424 370.5 L1508 378" stroke="#555" stroke-width="2" fill="none" stroke-dasharray="1.2 2" stroke-linejoin="round"/>
<path d="M1541.5 245 V380" stroke="#1c1c1c" stroke-width="4" fill="none" stroke-linejoin="round"/>
<path d="M1541.5 245 V380" stroke="#f2f2f2" stroke-width="2.1" fill="none" stroke-linejoin="round"/>
<path d="M1541.5 245 V380" stroke="#555" stroke-width="2" fill="none" stroke-dasharray="1.2 2" stroke-linejoin="round"/>
<path d="M1512 360 A20 20 0 0 1 1532 380" stroke="#111" stroke-width="1" fill="none" />
<circle cx="1525" cy="378" r="6.6" fill="#fff" stroke="#111" stroke-width="0.9"/>
<text x="1525" y="378.3" font-size="5.5" fill="#222" text-anchor="middle" dominant-baseline="central" textLength="8.9" lengthAdjust="spacingAndGlyphs">211A</text>
<circle cx="1388" cy="371" r="6.6" fill="#fff" stroke="#111" stroke-width="0.9"/>
<text x="1388" y="371.3" font-size="5.5" fill="#222" text-anchor="middle" dominant-baseline="central" textLength="8.9" lengthAdjust="spacingAndGlyphs">211B</text>
<path d="M1648.34 290.25 A6.66 6.66 0 1 1 1658.35 282.13 A6.66 6.66 0 0 1 1670.45 282.13 A6.66 6.66 0 0 1 1682.55 282.13 A6.66 6.66 0 1 1 1692.56 290.25 A6.66 6.66 0 0 1 1692.56 300.95 A6.66 6.66 0 0 1 1692.56 311.65 A6.66 6.66 0 0 1 1692.56 322.35 A6.66 6.66 0 0 1 1692.56 333.05 A6.66 6.66 0 1 1 1682.55 341.17 A6.66 6.66 0 0 1 1670.45 341.17 A6.66 6.66 0 0 1 1658.35 341.17 A6.66 6.66 0 1 1 1648.34 333.05 A6.66 6.66 0 0 1 1648.34 322.35 A6.66 6.66 0 0 1 1648.34 311.65 A6.66 6.66 0 0 1 1648.34 300.95 A6.66 6.66 0 0 1 1648.34 290.25Z" stroke="#f2ad5c" stroke-width="1.1" fill="none" />
<path d="M1541.5 379 L1662 388.7 Q1675.5 388 1675.5 375 V340.5 M1675.5 291 V245" stroke="#1c1c1c" stroke-width="4" fill="none" stroke-linejoin="round"/>
<path d="M1541.5 379 L1662 388.7 Q1675.5 388 1675.5 375 V340.5 M1675.5 291 V245" stroke="#f2f2f2" stroke-width="2.1" fill="none" stroke-linejoin="round"/>
<path d="M1541.5 379 L1662 388.7 Q1675.5 388 1675.5 375 V340.5 M1675.5 291 V245" stroke="#555" stroke-width="2" fill="none" stroke-dasharray="1.2 2" stroke-linejoin="round"/>
<path d="M1541.5 316 H1675.5" stroke="#1c1c1c" stroke-width="4" fill="none" stroke-linejoin="round"/>
<path d="M1541.5 316 H1675.5" stroke="#f2f2f2" stroke-width="2.1" fill="none" stroke-linejoin="round"/>
<path d="M1541.5 316 H1675.5" stroke="#555" stroke-width="2" fill="none" stroke-dasharray="1.2 2" stroke-linejoin="round"/>
<path d="M1675.5 291.0 A20.5 20.5 0 0 0 1655.0 311.5" stroke="#111" stroke-width="1" fill="none" />
<line x1="1675.5" y1="311.5" x2="1655.0" y2="311.5" stroke="#111" stroke-width="1.8" />
<path d="M1675.5 341.0 A20.5 20.5 0 0 1 1655.0 320.5" stroke="#111" stroke-width="1" fill="none" />
<line x1="1675.5" y1="320.5" x2="1655.0" y2="320.5" stroke="#111" stroke-width="1.8" />
<circle cx="1675.5" cy="302.3" r="6.6" fill="#fff" stroke="#111" stroke-width="0.9"/>
<text x="1675.5" y="302.6" font-size="5.5" fill="#222" text-anchor="middle" dominant-baseline="central" textLength="8.9" lengthAdjust="spacingAndGlyphs">212</text>
<circle cx="1675.5" cy="329.5" r="6.6" fill="#fff" stroke="#111" stroke-width="0.9"/>
<text x="1675.5" y="329.8" font-size="5.5" fill="#222" text-anchor="middle" dominant-baseline="central" textLength="8.9" lengthAdjust="spacingAndGlyphs">213</text>
<text x="1605.7" y="278.8" font-size="9.6" font-weight="bold" fill="#161616" text-anchor="middle" dominant-baseline="central" textLength="46.4" lengthAdjust="spacingAndGlyphs">OFFICE&#160;&#160;212</text>
<text x="1605.7" y="352" font-size="9.6" font-weight="bold" fill="#161616" text-anchor="middle" dominant-baseline="central" textLength="46.4" lengthAdjust="spacingAndGlyphs">OFFICE&#160;&#160;213</text>
<path d="M1742.3 245 V291 M1742.3 340.5 V383 Q1742.3 396 1756 396 L1830 401.5" stroke="#1c1c1c" stroke-width="4" fill="none" stroke-linejoin="round"/>
<path d="M1742.3 245 V291 M1742.3 340.5 V383 Q1742.3 396 1756 396 L1830 401.5" stroke="#f2f2f2" stroke-width="2.1" fill="none" stroke-linejoin="round"/>
<path d="M1742.3 245 V291 M1742.3 340.5 V383 Q1742.3 396 1756 396 L1830 401.5" stroke="#555" stroke-width="2" fill="none" stroke-dasharray="1.2 2" stroke-linejoin="round"/>
<path d="M1809.2 245 V400" stroke="#1c1c1c" stroke-width="4" fill="none" stroke-linejoin="round"/>
<path d="M1809.2 245 V400" stroke="#f2f2f2" stroke-width="2.1" fill="none" stroke-linejoin="round"/>
<path d="M1809.2 245 V400" stroke="#555" stroke-width="2" fill="none" stroke-dasharray="1.2 2" stroke-linejoin="round"/>
<path d="M1742.3 316 H1830" stroke="#1c1c1c" stroke-width="4" fill="none" stroke-linejoin="round"/>
<path d="M1742.3 316 H1830" stroke="#f2f2f2" stroke-width="2.1" fill="none" stroke-linejoin="round"/>
<path d="M1742.3 316 H1830" stroke="#555" stroke-width="2" fill="none" stroke-dasharray="1.2 2" stroke-linejoin="round"/>
<path d="M1742.3 291.0 A20.5 20.5 0 0 1 1762.8 311.5" stroke="#111" stroke-width="1" fill="none" />
<line x1="1742.3" y1="311.5" x2="1762.8" y2="311.5" stroke="#111" stroke-width="1.8" />
<path d="M1742.3 341.0 A20.5 20.5 0 0 0 1762.8 320.5" stroke="#111" stroke-width="1" fill="none" />
<line x1="1742.3" y1="320.5" x2="1762.8" y2="320.5" stroke="#111" stroke-width="1.8" />
<circle cx="1742.3" cy="302.3" r="6.6" fill="#fff" stroke="#111" stroke-width="0.9"/>
<text x="1742.3" y="302.6" font-size="5.5" fill="#222" text-anchor="middle" dominant-baseline="central" textLength="8.9" lengthAdjust="spacingAndGlyphs">214</text>
<circle cx="1742.3" cy="329.5" r="6.6" fill="#fff" stroke="#111" stroke-width="0.9"/>
<text x="1742.3" y="329.8" font-size="5.5" fill="#222" text-anchor="middle" dominant-baseline="central" textLength="8.9" lengthAdjust="spacingAndGlyphs">215</text>
<text x="1775.8" y="282" font-size="9.6" font-weight="bold" fill="#161616" text-anchor="middle" dominant-baseline="central" textLength="48.7" lengthAdjust="spacingAndGlyphs">MEETING&#160;&#160;214</text>
<text x="1775.8" y="363" font-size="9.6" font-weight="bold" fill="#161616" text-anchor="middle" dominant-baseline="central" textLength="48.7" lengthAdjust="spacingAndGlyphs">MEETING&#160;&#160;215</text>
<text x="1836" y="282" font-size="9.6" font-weight="bold" fill="#161616" text-anchor="middle" dominant-baseline="central" textLength="48.7" lengthAdjust="spacingAndGlyphs">MEETING</text>
<text x="1836" y="363" font-size="9.6" font-weight="bold" fill="#161616" text-anchor="middle" dominant-baseline="central" textLength="48.7" lengthAdjust="spacingAndGlyphs">MEETING</text>
<path d="M294.92 851.35 A6.13 6.13 0 1 1 303.97 843.75 A6.13 6.13 0 0 1 315.12 843.75 A6.13 6.13 0 1 1 324.18 851.35 A6.13 6.13 0 0 1 324.18 861.45 A6.13 6.13 0 1 1 315.12 869.05 A6.13 6.13 0 0 1 303.97 869.05 A6.13 6.13 0 1 1 294.92 861.45 A6.13 6.13 0 0 1 294.92 851.35Z" stroke="#f2ad5c" stroke-width="1.1" fill="none" />
<path d="M489.81 850.53 A6.11 6.11 0 1 1 498.35 842.66 A6.11 6.11 0 0 1 509.45 842.66 A6.11 6.11 0 1 1 517.99 850.53 A6.11 6.11 0 0 1 517.99 861.17 A6.11 6.11 0 1 1 509.45 869.04 A6.11 6.11 0 0 1 498.35 869.04 A6.11 6.11 0 1 1 489.81 861.17 A6.11 6.11 0 0 1 489.81 850.53Z" stroke="#f2ad5c" stroke-width="1.1" fill="none" />
<path d="M314.4 500.3 A5.60 5.60 0 0 1 324.8 500.3 A5.60 5.60 0 0 1 335.2 500.3 A5.60 5.60 0 0 1 345.7 500.3 A5.60 5.60 0 0 1 356.1 500.3 A5.60 5.60 0 0 1 366.5 500.3 A5.60 5.60 0 0 1 376.9 500.3 A5.60 5.60 0 0 1 387.4 500.3 A5.60 5.60 0 0 1 397.8 500.3 A5.76 5.76 0 0 1 397.8 511.8 A5.75 5.75 0 0 1 397.8 523.3 A5.76 5.76 0 0 1 397.8 534.8 A5.76 5.76 0 0 1 397.8 546.3 A5.76 5.76 0 0 1 397.8 557.8 A5.76 5.76 0 0 1 397.8 569.2 A5.76 5.76 0 0 1 397.8 580.7 A5.76 5.76 0 0 1 397.8 592.2 A5.76 5.76 0 0 1 397.8 603.7 A5.76 5.76 0 0 1 397.8 615.2 A5.60 5.60 0 0 1 387.4 615.2 A5.60 5.60 0 0 1 376.9 615.2 A5.60 5.60 0 0 1 366.5 615.2 A5.60 5.60 0 0 1 356.1 615.2 A5.60 5.60 0 0 1 345.7 615.2 A5.60 5.60 0 0 1 335.2 615.2 A5.60 5.60 0 0 1 324.8 615.2 A5.60 5.60 0 0 1 314.4 615.2 A5.76 5.76 0 0 1 314.4 603.7 A5.76 5.76 0 0 1 314.4 592.2 A5.76 5.76 0 0 1 314.4 580.7 A5.76 5.76 0 0 1 314.4 569.2 A5.76 5.76 0 0 1 314.4 557.8 A5.76 5.76 0 0 1 314.4 546.3 A5.76 5.76 0 0 1 314.4 534.8 A5.76 5.76 0 0 1 314.4 523.3 A5.75 5.75 0 0 1 314.4 511.8 A5.76 5.76 0 0 1 314.4 500.3Z" stroke="#3355d8" stroke-width="1.2" fill="none" />
<path d="M330 507.3 H382.7 V608.3 H330Z" stroke="#111" stroke-width="1" fill="none" stroke-dasharray="3 2"/>
<path d="M291 427 L404 418 Q416 417 416 430 V469.7 M416 515 V605 M416 646 V685 Q416 701 402 701 L291 692.6" stroke="#1c1c1c" stroke-width="4" fill="none" stroke-linejoin="round"/>
<path d="M291 427 L404 418 Q416 417 416 430 V469.7 M416 515 V605 M416 646 V685 Q416 701 402 701 L291 692.6" stroke="#f2f2f2" stroke-width="2.1" fill="none" stroke-linejoin="round"/>
<path d="M291 427 L404 418 Q416 417 416 430 V469.7 M416 515 V605 M416 646 V685 Q416 701 402 701 L291 692.6" stroke="#555" stroke-width="2" fill="none" stroke-dasharray="1.2 2" stroke-linejoin="round"/>
<path d="M291 493 H416" stroke="#1c1c1c" stroke-width="4" fill="none" stroke-linejoin="round"/>
<path d="M291 493 H416" stroke="#f2f2f2" stroke-width="2.1" fill="none" stroke-linejoin="round"/>
<path d="M291 493 H416" stroke="#555" stroke-width="2" fill="none" stroke-dasharray="1.2 2" stroke-linejoin="round"/>
<path d="M291 626.3 H416" stroke="#1c1c1c" stroke-width="4" fill="none" stroke-linejoin="round"/>
<path d="M291 626.3 H416" stroke="#f2f2f2" stroke-width="2.1" fill="none" stroke-linejoin="round"/>
<path d="M291 626.3 H416" stroke="#555" stroke-width="2" fill="none" stroke-dasharray="1.2 2" stroke-linejoin="round"/>
<path d="M416 470 A21 21 0 0 0 395 491" stroke="#111" stroke-width="1" fill="none" />
<line x1="395" y1="491" x2="416" y2="491" stroke="#111" stroke-width="1.8" />
<path d="M416 516 A21 21 0 0 1 395 495" stroke="#111" stroke-width="1" fill="none" />
<line x1="395" y1="495" x2="416" y2="495" stroke="#111" stroke-width="1.8" />
<path d="M416 604 A21 21 0 0 0 395 625" stroke="#111" stroke-width="1" fill="none" />
<line x1="395" y1="624" x2="416" y2="624" stroke="#111" stroke-width="1.8" />
<path d="M416 646 A21 21 0 0 1 395 629" stroke="#111" stroke-width="1" fill="none" />
<line x1="395" y1="629" x2="416" y2="629" stroke="#111" stroke-width="1.8" />
<circle cx="416" cy="479.5" r="6.6" fill="#fff" stroke="#111" stroke-width="0.9"/>
<text x="416" y="479.8" font-size="5.5" fill="#222" text-anchor="middle" dominant-baseline="central" textLength="8.9" lengthAdjust="spacingAndGlyphs">247</text>
<circle cx="416" cy="506.3" r="6.6" fill="#fff" stroke="#111" stroke-width="0.9"/>
<text x="416" y="506.6" font-size="5.5" fill="#222" text-anchor="middle" dominant-baseline="central" textLength="8.9" lengthAdjust="spacingAndGlyphs">246A</text>
<circle cx="416" cy="613" r="6.6" fill="#fff" stroke="#111" stroke-width="0.9"/>
<text x="416" y="613.3" font-size="5.5" fill="#222" text-anchor="middle" dominant-baseline="central" textLength="8.9" lengthAdjust="spacingAndGlyphs">246B</text>
<circle cx="416" cy="639.7" r="6.6" fill="#fff" stroke="#111" stroke-width="0.9"/>
<text x="416" y="640.0" font-size="5.5" fill="#222" text-anchor="middle" dominant-baseline="central" textLength="8.9" lengthAdjust="spacingAndGlyphs">245</text>
<text x="353.4" y="454.4" font-size="9.6" font-weight="bold" fill="#161616" text-anchor="middle" dominant-baseline="central" textLength="53" lengthAdjust="spacingAndGlyphs">MEETING&#160;&#160;247</text>
<text x="356" y="559.3" font-size="9.6" font-weight="bold" fill="#161616" text-anchor="middle" dominant-baseline="central" textLength="72" lengthAdjust="spacingAndGlyphs">CONFERENCE&#160;&#160;246</text>
<text x="353.4" y="666.4" font-size="9.6" font-weight="bold" fill="#161616" text-anchor="middle" dominant-baseline="central" textLength="53" lengthAdjust="spacingAndGlyphs">MEETING&#160;&#160;245</text>
<path d="M404 417.8 L546.5 404.8" stroke="#111" stroke-width="1" fill="none" />
<path d="M402 702 L506.8 710.4 L555 714" stroke="#111" stroke-width="1" fill="none" />
<path d="M430.8 432.2 L445.3 446.7 L430.8 461.2 L416.3 446.7Z" fill="#c8c8c8" stroke="#e5484d" stroke-width="1"/>
<text x="431" y="451.2" font-size="12" fill="#e0323c" text-anchor="middle" textLength="19" lengthAdjust="spacingAndGlyphs">W-1</text>
<path d="M430.8 655.1 L445.3 669.6 L430.8 684.1 L416.3 669.6Z" fill="#c8c8c8" stroke="#e5484d" stroke-width="1"/>
<text x="431" y="674.1" font-size="12" fill="#e0323c" text-anchor="middle" textLength="19" lengthAdjust="spacingAndGlyphs">W-1</text>
<path d="M472 450.4 H898 M457.6 466 Q457.6 450.4 472 450.4 M457.6 466 V654 Q457.6 669 472 669 H898" stroke="#111" stroke-width="1" fill="none" stroke-dasharray="3 2"/>
<path d="M823 468.6 H481 Q475.4 468.6 475.4 475 V644 Q475.4 650.7 481 650.7 H823" stroke="#111" stroke-width="1.3" fill="none" />
<text x="622" y="557" font-size="9.6" font-weight="bold" fill="#161616" text-anchor="middle" dominant-baseline="central" textLength="71" lengthAdjust="spacingAndGlyphs">OPEN OFFICE&#160;&#160;248</text>
<text x="407" y="786" font-size="9.6" font-weight="bold" fill="#161616" text-anchor="middle" dominant-baseline="central" textLength="71" lengthAdjust="spacingAndGlyphs">OPEN OFFICE&#160;&#160;244</text>
<path d="M895 470.7 H835 Q823.5 470.7 823.5 483 V535 M823.5 584 V636 Q823.5 648.6 835 648.6 H890 Q898 648.6 900 640" stroke="#1c1c1c" stroke-width="4" fill="none" stroke-linejoin="round"/>
<path d="M895 470.7 H835 Q823.5 470.7 823.5 483 V535 M823.5 584 V636 Q823.5 648.6 835 648.6 H890 Q898 648.6 900 640" stroke="#f2f2f2" stroke-width="2.1" fill="none" stroke-linejoin="round"/>
<path d="M895 470.7 H835 Q823.5 470.7 823.5 483 V535 M823.5 584 V636 Q823.5 648.6 835 648.6 H890 Q898 648.6 900 640" stroke="#555" stroke-width="2" fill="none" stroke-dasharray="1.2 2" stroke-linejoin="round"/>
<path d="M823 559.3 H913" stroke="#1c1c1c" stroke-width="4" fill="none" stroke-linejoin="round"/>
<path d="M823 559.3 H913" stroke="#f2f2f2" stroke-width="2.1" fill="none" stroke-linejoin="round"/>
<path d="M823 559.3 H913" stroke="#555" stroke-width="2" fill="none" stroke-dasharray="1.2 2" stroke-linejoin="round"/>
<path d="M823.5 534.6 A20.5 20.5 0 0 1 844.0 555.1" stroke="#111" stroke-width="1" fill="none" />
<line x1="823.5" y1="555.1" x2="844.0" y2="555.1" stroke="#111" stroke-width="1.8" />
<path d="M823.5 584.6 A20.5 20.5 0 0 0 844.0 564.1" stroke="#111" stroke-width="1" fill="none" />
<line x1="823.5" y1="564.1" x2="844.0" y2="564.1" stroke="#111" stroke-width="1.8" />
<circle cx="823.5" cy="545.9" r="6.6" fill="#fff" stroke="#111" stroke-width="0.9"/>
<text x="823.5" y="546.1999999999999" font-size="5.5" fill="#222" text-anchor="middle" dominant-baseline="central" textLength="8.9" lengthAdjust="spacingAndGlyphs">249</text>
<circle cx="823.5" cy="573.1" r="6.6" fill="#fff" stroke="#111" stroke-width="0.9"/>
<text x="823.5" y="573.4" font-size="5.5" fill="#222" text-anchor="middle" dominant-baseline="central" textLength="8.9" lengthAdjust="spacingAndGlyphs">250</text>
<text x="864.3" y="514" font-size="9.6" font-weight="bold" fill="#161616" text-anchor="middle" dominant-baseline="central" textLength="46.4" lengthAdjust="spacingAndGlyphs">OFFICE&#160;&#160;249</text>
<text x="864.3" y="613.7" font-size="9.6" font-weight="bold" fill="#161616" text-anchor="middle" dominant-baseline="central" textLength="38" lengthAdjust="spacingAndGlyphs">COPY&#160;&#160;250</text>
<path d="M900 470 V650" stroke="#111" stroke-width="1" fill="none" stroke-dasharray="3 2"/>
<path d="M908 429.6 H929 Q939 429.6 939 440 V462 M908 429.6 Q898 429.6 898 440 V680 Q898 689.5 908 689.5 H929 Q939 689.5 939 680 V650" stroke="#1c1c1c" stroke-width="4" fill="none" stroke-linejoin="round"/>
<path d="M908 429.6 H929 Q939 429.6 939 440 V462 M908 429.6 Q898 429.6 898 440 V680 Q898 689.5 908 689.5 H929 Q939 689.5 939 680 V650" stroke="#f2f2f2" stroke-width="2.1" fill="none" stroke-linejoin="round"/>
<path d="M908 429.6 H929 Q939 429.6 939 440 V462 M908 429.6 Q898 429.6 898 440 V680 Q898 689.5 908 689.5 H929 Q939 689.5 939 680 V650" stroke="#555" stroke-width="2" fill="none" stroke-dasharray="1.2 2" stroke-linejoin="round"/>
<path d="M999 437.8 L1147 446 Q1169 449 1169 466 V650 Q1169 670.6 1150 670.6 L1120 673" stroke="#1c1c1c" stroke-width="4" fill="none" stroke-linejoin="round"/>
<path d="M999 437.8 L1147 446 Q1169 449 1169 466 V650 Q1169 670.6 1150 670.6 L1120 673" stroke="#f2f2f2" stroke-width="2.1" fill="none" stroke-linejoin="round"/>
<path d="M999 437.8 L1147 446 Q1169 449 1169 466 V650 Q1169 670.6 1150 670.6 L1120 673" stroke="#555" stroke-width="2" fill="none" stroke-dasharray="1.2 2" stroke-linejoin="round"/>
<path d="M939 432 L999 437.8" stroke="#1c1c1c" stroke-width="4" fill="none" stroke-linejoin="round"/>
<path d="M939 432 L999 437.8" stroke="#f2f2f2" stroke-width="2.1" fill="none" stroke-linejoin="round"/>
<path d="M939 432 L999 437.8" stroke="#555" stroke-width="2" fill="none" stroke-dasharray="1.2 2" stroke-linejoin="round"/>
<path d="M910 693 L1120 680" stroke="#111" stroke-width="1.6" fill="none" stroke-dasharray="5 3"/>
<path d="M914.6 451.5 V578.7 H970.7 V451.5 H914.6" stroke="#0a0a0a" stroke-width="3" fill="none" stroke-linecap="square"/>
<rect x="918" y="505" width="30" height="66" fill="none" stroke="#111" stroke-width="1.2" stroke-dasharray="3 2"/>
<line x1="918" y1="506.0" x2="948" y2="506.0" stroke="#111" stroke-width="1.4" stroke-dasharray="3 2"/>
<line x1="918" y1="514.3" x2="948" y2="514.3" stroke="#111" stroke-width="1.4" stroke-dasharray="3 2"/>
<line x1="918" y1="522.6" x2="948" y2="522.6" stroke="#111" stroke-width="1.4" stroke-dasharray="3 2"/>
<line x1="918" y1="530.9" x2="948" y2="530.9" stroke="#111" stroke-width="1.4" stroke-dasharray="3 2"/>
<line x1="918" y1="539.2" x2="948" y2="539.2" stroke="#111" stroke-width="1.4" stroke-dasharray="3 2"/>
<line x1="918" y1="547.5" x2="948" y2="547.5" stroke="#111" stroke-width="1.4" stroke-dasharray="3 2"/>
<line x1="918" y1="555.8" x2="948" y2="555.8" stroke="#111" stroke-width="1.4" stroke-dasharray="3 2"/>
<line x1="918" y1="564.1" x2="948" y2="564.1" stroke="#111" stroke-width="1.4" stroke-dasharray="3 2"/>
<path d="M948 504.8 V571.8" stroke="#111" stroke-width="2.4" fill="none" />
<line x1="950" y1="506.0" x2="968" y2="506.0" stroke="#111" stroke-width="0.8" />
<line x1="950" y1="513.4" x2="968" y2="513.4" stroke="#111" stroke-width="0.8" />
<line x1="950" y1="520.8" x2="968" y2="520.8" stroke="#111" stroke-width="0.8" />
<line x1="950" y1="528.2" x2="968" y2="528.2" stroke="#111" stroke-width="0.8" />
<line x1="950" y1="535.6" x2="968" y2="535.6" stroke="#111" stroke-width="0.8" />
<line x1="950" y1="543.0" x2="968" y2="543.0" stroke="#111" stroke-width="0.8" />
<line x1="950" y1="550.4" x2="968" y2="550.4" stroke="#111" stroke-width="0.8" />
<line x1="950" y1="557.8" x2="968" y2="557.8" stroke="#111" stroke-width="0.8" />
<line x1="950" y1="565.2" x2="968" y2="565.2" stroke="#111" stroke-width="0.8" />
<path d="M950 532 L968 560 M968 532 L950 560" stroke="#111" stroke-width="0.8" fill="none" />
<text x="960" y="503" font-size="6.5" fill="#333" text-anchor="middle">UP</text>
<text x="943.4" y="486.5" font-size="9.6" font-weight="bold" fill="#161616" text-anchor="middle" dominant-baseline="central" textLength="40" lengthAdjust="spacingAndGlyphs">STAIR 251</text>
<path d="M914.6 578.7 V667.6 H970.7 V578.7" stroke="#0a0a0a" stroke-width="2.2" fill="none" stroke-linecap="square"/>
<text x="943.4" y="621" font-size="9.6" font-weight="bold" fill="#161616" text-anchor="middle" dominant-baseline="central" textLength="68" lengthAdjust="spacingAndGlyphs" transform="rotate(-90 943.4 621)">MOTHER'S RM 252</text>
<rect x="918" y="633" width="12" height="20" fill="none" stroke="#111" stroke-width="1.2"/>
<rect x="918" y="610" width="13" height="18" fill="none" stroke="#555" stroke-width="0.8" stroke-dasharray="2 1.5"/>
<path d="M970.7 451.5 H1041.8 M1041.8 470 V522.6 H970.7" stroke="#1c1c1c" stroke-width="4" fill="none" stroke-linejoin="round"/>
<path d="M970.7 451.5 H1041.8 M1041.8 470 V522.6 H970.7" stroke="#f2f2f2" stroke-width="2.1" fill="none" stroke-linejoin="round"/>
<path d="M970.7 451.5 H1041.8 M1041.8 470 V522.6 H970.7" stroke="#555" stroke-width="2" fill="none" stroke-dasharray="1.2 2" stroke-linejoin="round"/>
<rect x="976.2" y="499.3" width="12" height="22" fill="none" stroke="#111" stroke-width="1" stroke-dasharray="2.5 2"/>
<line x1="976.2" y1="521.5" x2="988.2" y2="521.5" stroke="#111" stroke-width="2" />
<rect x="993.4" y="499.3" width="12" height="22" fill="none" stroke="#111" stroke-width="1" stroke-dasharray="2.5 2"/>
<line x1="993.4" y1="521.5" x2="1005.4" y2="521.5" stroke="#111" stroke-width="2" />
<rect x="1009.8" y="499.3" width="12" height="22" fill="none" stroke="#111" stroke-width="1" stroke-dasharray="2.5 2"/>
<line x1="1009.8" y1="521.5" x2="1021.8" y2="521.5" stroke="#111" stroke-width="2" />
<rect x="1026" y="499.3" width="12" height="22" fill="none" stroke="#111" stroke-width="1" stroke-dasharray="2.5 2"/>
<line x1="1026" y1="521.5" x2="1038" y2="521.5" stroke="#111" stroke-width="2" />
<text x="1007.6" y="479.6" font-size="9.6" font-weight="bold" fill="#161616" text-anchor="middle" dominant-baseline="central" textLength="48" lengthAdjust="spacingAndGlyphs">ELECTRICAL</text>
<text x="1007.6" y="491.1" font-size="9.6" font-weight="bold" fill="#161616" text-anchor="middle" dominant-baseline="central" textLength="14" lengthAdjust="spacingAndGlyphs">253</text>
<text x="1026.8" y="538.2" font-size="9.6" font-weight="bold" fill="#161616" text-anchor="middle" dominant-baseline="central" textLength="58" lengthAdjust="spacingAndGlyphs">STORAGE 253A</text>
<text x="1005.5" y="562.8" font-size="9.6" font-weight="bold" fill="#161616" text-anchor="middle" dominant-baseline="central" textLength="58" lengthAdjust="spacingAndGlyphs">STORAGE 254A</text>
<path d="M900 570.5 H1120" stroke="#111" stroke-width="2" fill="none" stroke-dasharray="6 3"/>
<path d="M1039 455 A18 18 0 0 1 1021 473" stroke="#111" stroke-width="1" fill="none" />
<circle cx="1036" cy="473" r="6.6" fill="#fff" stroke="#111" stroke-width="0.9"/>
<text x="1036" y="473.3" font-size="5.5" fill="#222" text-anchor="middle" dominant-baseline="central" textLength="8.9" lengthAdjust="spacingAndGlyphs">253A</text>
<path d="M970 452 V465 A20 20 0 0 1 950 482" stroke="#111" stroke-width="1" fill="none" />
<circle cx="957" cy="452" r="6.6" fill="#fff" stroke="#111" stroke-width="0.9"/>
<text x="957" y="452.3" font-size="5.5" fill="#222" text-anchor="middle" dominant-baseline="central" textLength="8.9" lengthAdjust="spacingAndGlyphs">251</text>
<circle cx="983" cy="452" r="6.6" fill="#fff" stroke="#111" stroke-width="0.9"/>
<text x="983" y="452.3" font-size="5.5" fill="#222" text-anchor="middle" dominant-baseline="central" textLength="8.9" lengthAdjust="spacingAndGlyphs">253</text>
<rect x="968" y="453" width="4" height="26" fill="#888" stroke="#111" stroke-width="1"/>
<path d="M1072.5 446.5 A6.05 6.05 0 0 1 1084.6 446.5 A6.05 6.05 0 0 1 1096.7 446.5 A6.05 6.05 0 0 1 1108.7 446.5 A6.05 6.05 0 0 1 1120.8 446.5 A5.60 5.60 0 0 1 1120.8 457.3 A5.60 5.60 0 0 1 1120.8 468.0 A5.60 5.60 0 0 1 1120.8 478.8 A5.60 5.60 0 0 1 1120.8 489.6 A5.60 5.60 0 0 1 1120.8 500.3 A5.60 5.60 0 0 1 1120.8 511.1 A5.60 5.60 0 0 1 1120.8 521.9 A5.60 5.60 0 0 1 1120.8 532.7 A5.60 5.60 0 0 1 1120.8 543.4 A5.60 5.60 0 0 1 1120.8 554.2 A5.60 5.60 0 0 1 1120.8 565.0 A5.60 5.60 0 0 1 1120.8 575.7 A5.60 5.60 0 0 1 1120.8 586.5 A6.05 6.05 0 0 1 1108.7 586.5 A6.05 6.05 0 0 1 1096.7 586.5 A6.05 6.05 0 0 1 1084.6 586.5 A6.05 6.05 0 0 1 1072.5 586.5 A5.60 5.60 0 0 1 1072.5 575.7 A5.60 5.60 0 0 1 1072.5 565.0 A5.60 5.60 0 0 1 1072.5 554.2 A5.60 5.60 0 0 1 1072.5 543.4 A5.60 5.60 0 0 1 1072.5 532.7 A5.60 5.60 0 0 1 1072.5 521.9 A5.60 5.60 0 0 1 1072.5 511.1 A5.60 5.60 0 0 1 1072.5 500.3 A5.60 5.60 0 0 1 1072.5 489.6 A5.60 5.60 0 0 1 1072.5 478.8 A5.60 5.60 0 0 1 1072.5 468.0 A5.60 5.60 0 0 1 1072.5 457.3 A5.60 5.60 0 0 1 1072.5 446.5Z" stroke="#3355d8" stroke-width="1.2" fill="none" />
<path d="M1085.6 451.5 V578.7 M1114.3 451.5 V578.7" stroke="#0a0a0a" stroke-width="3.2" fill="none" stroke-linecap="square"/>
<line x1="1070" y1="451.5" x2="1169" y2="451.5" stroke="#111" stroke-width="2.5" />
<path d="M1089 456 L1111 576 M1111 456 L1089 576 M1089 456 H1111 M1089 576 H1111" stroke="#111" stroke-width="0.8" fill="none" />
<text x="1100" y="518" font-size="6.5" fill="#333" text-anchor="middle" transform="rotate(-90 1100 518)" letter-spacing="1.5">VOID</text>
<rect x="1124.7" y="473.4" width="39.7" height="53.30000000000007" fill="none" stroke="#111" stroke-width="1.1"/>
<path d="M1124.7 473.4 L1164.4 526.7 M1164.4 473.4 L1124.7 526.7" stroke="#111" stroke-width="0.8" fill="none" />
<rect x="1124.7" y="532.2" width="39.7" height="53.299999999999955" fill="none" stroke="#111" stroke-width="1.1"/>
<path d="M1124.7 532.2 L1164.4 585.5 M1164.4 532.2 L1124.7 585.5" stroke="#111" stroke-width="0.8" fill="none" />
<path d="M1114.3 593.7 H1167.7 M1114.3 648.5 H1167.7" stroke="#0a0a0a" stroke-width="2.6" fill="none" stroke-linecap="square"/>
<path d="M1114.3 578 V648.5" stroke="#0a0a0a" stroke-width="2.6" fill="none" stroke-linecap="square"/>
<rect x="1127.5" y="617" width="37" height="28.7" fill="none" stroke="#111" stroke-width="1.1"/>
<path d="M1127.5 617 L1164.5 645.7 M1164.5 617 L1127.5 645.7" stroke="#111" stroke-width="0.8" fill="none" />
<rect x="1144.4" y="597.8" width="19.6" height="16.5" fill="none" stroke="#111" stroke-width="1.1"/>
<path d="M1144.4 614.3 L1164 597.8" stroke="#111" stroke-width="0.8" fill="none" />
<path d="M1121 593 V672" stroke="#111" stroke-width="1.6" fill="none" stroke-dasharray="5 3"/>
<path d="M970.5 578.5 H1080.4 M970.5 578.5 V667.4 H1015 M1015 649 V667.4 H1080 M1078.4 578.5 V626 M1078.4 650 V667.4" stroke="#1c1c1c" stroke-width="4" fill="none" stroke-linejoin="round"/>
<path d="M970.5 578.5 H1080.4 M970.5 578.5 V667.4 H1015 M1015 649 V667.4 H1080 M1078.4 578.5 V626 M1078.4 650 V667.4" stroke="#f2f2f2" stroke-width="2.1" fill="none" stroke-linejoin="round"/>
<path d="M970.5 578.5 H1080.4 M970.5 578.5 V667.4 H1015 M1015 649 V667.4 H1080 M1078.4 578.5 V626 M1078.4 650 V667.4" stroke="#555" stroke-width="2" fill="none" stroke-dasharray="1.2 2" stroke-linejoin="round"/>
<path d="M1015.4 578.5 V625 H994.2" stroke="#1c1c1c" stroke-width="4" fill="none" stroke-linejoin="round"/>
<path d="M1015.4 578.5 V625 H994.2" stroke="#f2f2f2" stroke-width="2.1" fill="none" stroke-linejoin="round"/>
<path d="M1015.4 578.5 V625 H994.2" stroke="#555" stroke-width="2" fill="none" stroke-dasharray="1.2 2" stroke-linejoin="round"/>
<path d="M1036 578.5 V612.7 M1056.5 578.5 V612.7" stroke="#1c1c1c" stroke-width="4" fill="none" stroke-linejoin="round"/>
<path d="M1036 578.5 V612.7 M1056.5 578.5 V612.7" stroke="#f2f2f2" stroke-width="2.1" fill="none" stroke-linejoin="round"/>
<path d="M1036 578.5 V612.7 M1056.5 578.5 V612.7" stroke="#555" stroke-width="2" fill="none" stroke-dasharray="1.2 2" stroke-linejoin="round"/>
<path d="M971 580 H985 V593 H971" stroke="#111" stroke-width="1" fill="none" />
<path d="M1015 651 H1078" stroke="#111" stroke-width="1" fill="none" />
<circle cx="1025.7" cy="590" r="3.8" fill="none" stroke="#111" stroke-width="1.6"/>
<circle cx="1025.7" cy="590" r="1.2" fill="#111"/>
<path d="M1025.2 583 V586" stroke="#111" stroke-width="1.6" fill="none" />
<circle cx="1046" cy="590" r="3.8" fill="none" stroke="#111" stroke-width="1.6"/>
<circle cx="1046" cy="590" r="1.2" fill="#111"/>
<path d="M1045.5 583 V586" stroke="#111" stroke-width="1.6" fill="none" />
<circle cx="1067.5" cy="590" r="3.8" fill="none" stroke="#111" stroke-width="1.6"/>
<circle cx="1067.5" cy="590" r="1.2" fill="#111"/>
<path d="M1067.0 583 V586" stroke="#111" stroke-width="1.6" fill="none" />
<path d="M1018 612 V600 M1018 600 Q1023 598 1026 601 M1032 612 Q1030 608 1028 606" stroke="#111" stroke-width="1" fill="none" />
<path d="M1039 612 V600 M1039 600 Q1044 598 1047 601 M1053 612 Q1051 608 1049 606" stroke="#111" stroke-width="1" fill="none" />
<path d="M1059 612 V600 M1059 600 Q1064 598 1067 601 M1073 612 Q1071 608 1069 606" stroke="#111" stroke-width="1" fill="none" />
<path d="M1015 568 L998 603" stroke="#111" stroke-width="0.9" fill="none" />
<circle cx="998" cy="603" r="1.6" fill="#111"/>
<rect x="1027" y="652.5" width="12.5" height="9" fill="none" stroke="#111" stroke-width="1.5"/>
<path d="M1033 662 V657" stroke="#111" stroke-width="1.2" fill="none" />
<rect x="1054" y="652.5" width="12.5" height="9" fill="none" stroke="#111" stroke-width="1.5"/>
<path d="M1060 662 V657" stroke="#111" stroke-width="1.2" fill="none" />
<path d="M994.2 625 A19 19 0 0 1 975 644" stroke="#111" stroke-width="1" fill="none" />
<circle cx="984" cy="624" r="6.6" fill="#fff" stroke="#111" stroke-width="0.9"/>
<text x="984" y="624.3" font-size="5.5" fill="#222" text-anchor="middle" dominant-baseline="central" textLength="8.9" lengthAdjust="spacingAndGlyphs">254A</text>
<path d="M1078.4 626 A21 21 0 0 1 1099.5 647" stroke="#111" stroke-width="1" fill="none" />
<line x1="1080" y1="646.5" x2="1100" y2="646.5" stroke="#111" stroke-width="1.8" />
<circle cx="1086" cy="636" r="6.6" fill="#fff" stroke="#111" stroke-width="0.9"/>
<text x="1086" y="636.3" font-size="5.5" fill="#222" text-anchor="middle" dominant-baseline="central" textLength="8.9" lengthAdjust="spacingAndGlyphs">254B</text>
<circle cx="957" cy="667" r="6.6" fill="#fff" stroke="#111" stroke-width="0.9"/>
<text x="957" y="667.3" font-size="5.5" fill="#222" text-anchor="middle" dominant-baseline="central" textLength="8.9" lengthAdjust="spacingAndGlyphs">252</text>
<circle cx="983.5" cy="667" r="6.6" fill="#fff" stroke="#111" stroke-width="0.9"/>
<text x="983.5" y="667.3" font-size="5.5" fill="#222" text-anchor="middle" dominant-baseline="central" textLength="8.9" lengthAdjust="spacingAndGlyphs">254</text>
<rect x="970.5" y="623" width="3.5" height="45" fill="#999" stroke="#111" stroke-width="1"/>
<path d="M972 646 A20 20 0 0 0 952 666 M974 646 A20 20 0 0 1 994 666" stroke="#111" stroke-width="1" fill="none" />
<path d="M1000.5 667.4 V678 Q1000.5 683 1007 683 L1120 673" stroke="#1c1c1c" stroke-width="4" fill="none" stroke-linejoin="round"/>
<path d="M1000.5 667.4 V678 Q1000.5 683 1007 683 L1120 673" stroke="#f2f2f2" stroke-width="2.1" fill="none" stroke-linejoin="round"/>
<path d="M1000.5 667.4 V678 Q1000.5 683 1007 683 L1120 673" stroke="#555" stroke-width="2" fill="none" stroke-dasharray="1.2 2" stroke-linejoin="round"/>
<circle cx="1096.6" cy="610" r="15.7" fill="#ee5a5a" fill-opacity="0.9"/>
<text x="1209.9" y="544.6" font-size="9.6" font-weight="bold" fill="#161616" text-anchor="middle" dominant-baseline="central" textLength="45" lengthAdjust="spacingAndGlyphs">LOBBY&#160;&#160;256</text>
<path d="M1289.5 436 A5.60 5.60 0 0 1 1300.4 436.0 A5.60 5.60 0 0 1 1311.3 436.0 A5.60 5.60 0 0 1 1322.2 436.0 A5.60 5.60 0 0 1 1333.1 436.0 A5.60 5.60 0 0 1 1344.0 436.0 A5.60 5.60 0 0 1 1354.9 436.0 A5.60 5.60 0 0 1 1365.8 436.0 A5.60 5.60 0 0 1 1376.8 436.0 A5.60 5.60 0 0 1 1387.7 436.0 A5.60 5.60 0 0 1 1398.6 436.0 A5.60 5.60 0 0 1 1409.5 436.0 A5.60 5.60 0 0 1 1420.4 436.0 A5.60 5.60 0 0 1 1431.3 436.0 A5.60 5.60 0 0 1 1442.2 436.0 A5.60 5.60 0 0 1 1453.1 436.0 A5.60 5.60 0 0 1 1464.0 436.0 A5.60 5.60 0 0 1 1464.0 447.0 A5.60 5.60 0 0 1 1464.0 458.1 A5.60 5.60 0 0 1 1464.0 469.1 A5.60 5.60 0 0 1 1464.0 480.1 A5.60 5.60 0 0 1 1464.0 491.2 A5.60 5.60 0 0 1 1464.0 502.2 A5.60 5.60 0 0 1 1464.0 513.2 A5.60 5.60 0 0 1 1464.0 524.3 A5.60 5.60 0 0 1 1464.0 535.3 A5.60 5.60 0 0 1 1464.0 546.4 A5.60 5.60 0 0 1 1464.0 557.4 A5.60 5.60 0 0 1 1464.0 568.4 A5.60 5.60 0 0 1 1464.0 579.5 A5.60 5.60 0 0 1 1464.0 590.5 A5.60 5.60 0 0 1 1453.1 590.5 A5.60 5.60 0 0 1 1442.2 590.5 A5.60 5.60 0 0 1 1431.3 590.5 A5.60 5.60 0 0 1 1420.4 590.5 A5.60 5.60 0 0 1 1409.5 590.5 A5.60 5.60 0 0 1 1398.6 590.5 A5.60 5.60 0 0 1 1387.7 590.5 A5.60 5.60 0 0 1 1376.8 590.5 A5.60 5.60 0 0 1 1365.8 590.5 A5.60 5.60 0 0 1 1354.9 590.5 A5.60 5.60 0 0 1 1344.0 590.5 A5.60 5.60 0 0 1 1333.1 590.5 A5.60 5.60 0 0 1 1322.2 590.5 A5.60 5.60 0 0 1 1311.3 590.5 A5.60 5.60 0 0 1 1300.4 590.5 A5.60 5.60 0 0 1 1289.5 590.5 A5.60 5.60 0 0 1 1289.5 579.5 A5.60 5.60 0 0 1 1289.5 568.4 A5.60 5.60 0 0 1 1289.5 557.4 A5.60 5.60 0 0 1 1289.5 546.4 A5.60 5.60 0 0 1 1289.5 535.3 A5.60 5.60 0 0 1 1289.5 524.3 A5.60 5.60 0 0 1 1289.5 513.2 A5.60 5.60 0 0 1 1289.5 502.2 A5.60 5.60 0 0 1 1289.5 491.2 A5.60 5.60 0 0 1 1289.5 480.1 A5.60 5.60 0 0 1 1289.5 469.1 A5.60 5.60 0 0 1 1289.5 458.1 A5.60 5.60 0 0 1 1289.5 447.0 A5.60 5.60 0 0 1 1289.5 436.0Z" stroke="#3355d8" stroke-width="1.2" fill="none" />
<path d="M1246.8 461 Q1246.8 449 1262 447 L1409.6 436.4 Q1413.7 437 1413.7 448.7" stroke="#1c1c1c" stroke-width="4" fill="none" stroke-linejoin="round"/>
<path d="M1246.8 461 Q1246.8 449 1262 447 L1409.6 436.4 Q1413.7 437 1413.7 448.7" stroke="#f2f2f2" stroke-width="2.1" fill="none" stroke-linejoin="round"/>
<path d="M1246.8 461 Q1246.8 449 1262 447 L1409.6 436.4 Q1413.7 437 1413.7 448.7" stroke="#555" stroke-width="2" fill="none" stroke-dasharray="1.2 2" stroke-linejoin="round"/>
<path d="M1246.8 461 V647 Q1246.8 671.7 1267 671.7 L1409.6 678.5 Q1413.7 678 1413.7 666" stroke="#1c1c1c" stroke-width="4" fill="none" stroke-linejoin="round"/>
<path d="M1246.8 461 V647 Q1246.8 671.7 1267 671.7 L1409.6 678.5 Q1413.7 678 1413.7 666" stroke="#f2f2f2" stroke-width="2.1" fill="none" stroke-linejoin="round"/>
<path d="M1246.8 461 V647 Q1246.8 671.7 1267 671.7 L1409.6 678.5 Q1413.7 678 1413.7 666" stroke="#555" stroke-width="2" fill="none" stroke-dasharray="1.2 2" stroke-linejoin="round"/>
<path d="M1249.6 452.8 H1298.8 V647 H1249.6" stroke="#0a0a0a" stroke-width="3" fill="none" stroke-linecap="square"/>
<path d="M1249.6 593.7 H1298.8" stroke="#0a0a0a" stroke-width="2.6" fill="none" stroke-linecap="square"/>
<rect x="1251.5" y="473.4" width="39.9" height="53.30000000000007" fill="none" stroke="#111" stroke-width="1.1"/>
<path d="M1251.5 473.4 L1291.4 526.7 M1291.4 473.4 L1251.5 526.7" stroke="#111" stroke-width="0.8" fill="none" />
<rect x="1251.5" y="532.2" width="39.9" height="53.299999999999955" fill="none" stroke="#111" stroke-width="1.1"/>
<path d="M1251.5 532.2 L1291.4 585.5 M1291.4 532.2 L1251.5 585.5" stroke="#111" stroke-width="0.8" fill="none" />
<rect x="1255" y="615.6" width="33" height="28.7" fill="none" stroke="#111" stroke-width="1.1"/>
<path d="M1255 644.3 L1288 615.6" stroke="#111" stroke-width="0.8" fill="none" />
<path d="M1301.6 451.5 H1445.2 M1301.6 577.3 H1445.2" stroke="#1c1c1c" stroke-width="4" fill="none" stroke-linejoin="round"/>
<path d="M1301.6 451.5 H1445.2 M1301.6 577.3 H1445.2" stroke="#f2f2f2" stroke-width="2.1" fill="none" stroke-linejoin="round"/>
<path d="M1301.6 451.5 H1445.2 M1301.6 577.3 H1445.2" stroke="#555" stroke-width="2" fill="none" stroke-dasharray="1.2 2" stroke-linejoin="round"/>
<path d="M1300.5 451.5 V650" stroke="#0a0a0a" stroke-width="2.6" fill="none" stroke-linecap="square"/>
<rect x="1313.9" y="478" width="31.399999999999864" height="74.7" fill="none" stroke="#111" stroke-width="1" stroke-dasharray="3 2"/>
<line x1="1324.262" y1="478" x2="1324.262" y2="552.7" stroke="#111" stroke-width="1" />
<line x1="1334.938" y1="478" x2="1334.938" y2="552.7" stroke="#111" stroke-width="1" />
<line x1="1313.9" y1="502.651" x2="1345.3" y2="502.651" stroke="#111" stroke-width="1" />
<line x1="1313.9" y1="528.049" x2="1345.3" y2="528.049" stroke="#111" stroke-width="1" />
<rect x="1353.5" y="478" width="31.5" height="74.7" fill="none" stroke="#111" stroke-width="1" stroke-dasharray="3 2"/>
<line x1="1363.895" y1="478" x2="1363.895" y2="552.7" stroke="#111" stroke-width="1" />
<line x1="1374.605" y1="478" x2="1374.605" y2="552.7" stroke="#111" stroke-width="1" />
<line x1="1353.5" y1="502.651" x2="1385" y2="502.651" stroke="#111" stroke-width="1" />
<line x1="1353.5" y1="528.049" x2="1385" y2="528.049" stroke="#111" stroke-width="1" />
<rect x="1393.2" y="478" width="31.5" height="74.7" fill="none" stroke="#111" stroke-width="1" stroke-dasharray="3 2"/>
<line x1="1403.595" y1="478" x2="1403.595" y2="552.7" stroke="#111" stroke-width="1" />
<line x1="1414.305" y1="478" x2="1414.305" y2="552.7" stroke="#111" stroke-width="1" />
<line x1="1393.2" y1="502.651" x2="1424.7" y2="502.651" stroke="#111" stroke-width="1" />
<line x1="1393.2" y1="528.049" x2="1424.7" y2="528.049" stroke="#111" stroke-width="1" />
<text x="1353.5" y="462.4" font-size="9.6" font-weight="bold" fill="#161616" text-anchor="middle" dominant-baseline="central" textLength="47" lengthAdjust="spacingAndGlyphs">SERVER&#160;&#160;257</text>
<text x="1379.5" y="567.7" font-size="9.6" font-weight="bold" fill="#161616" text-anchor="middle" dominant-baseline="central" textLength="58" lengthAdjust="spacingAndGlyphs">STORAGE 258A</text>
<path d="M1445.2 451.5 V612 M1448 451.5 H1498.5 V540.4 H1448" stroke="#1c1c1c" stroke-width="4" fill="none" stroke-linejoin="round"/>
<path d="M1445.2 451.5 V612 M1448 451.5 H1498.5 V540.4 H1448" stroke="#f2f2f2" stroke-width="2.1" fill="none" stroke-linejoin="round"/>
<path d="M1445.2 451.5 V612 M1448 451.5 H1498.5 V540.4 H1448" stroke="#555" stroke-width="2" fill="none" stroke-dasharray="1.2 2" stroke-linejoin="round"/>
<text x="1474" y="499.3" font-size="9.6" font-weight="bold" fill="#161616" text-anchor="middle" dominant-baseline="central" textLength="56" lengthAdjust="spacingAndGlyphs" transform="rotate(-90 1474 499.3)">STORAGE&#160;&#160;260</text>
<path d="M1448 540.4 H1498.5 V612.9 H1448" stroke="#0a0a0a" stroke-width="2.6" fill="none" stroke-linecap="square"/>
<line x1="1450" y1="543.0" x2="1470" y2="543.0" stroke="#111" stroke-width="1.4" stroke-dasharray="3 2"/>
<line x1="1450" y1="551.8" x2="1470" y2="551.8" stroke="#111" stroke-width="1.4" stroke-dasharray="3 2"/>
<line x1="1450" y1="560.6" x2="1470" y2="560.6" stroke="#111" stroke-width="1.4" stroke-dasharray="3 2"/>
<line x1="1450" y1="569.4" x2="1470" y2="569.4" stroke="#111" stroke-width="1.4" stroke-dasharray="3 2"/>
<line x1="1450" y1="578.2" x2="1470" y2="578.2" stroke="#111" stroke-width="1.4" stroke-dasharray="3 2"/>
<line x1="1450" y1="587.0" x2="1470" y2="587.0" stroke="#111" stroke-width="1.4" stroke-dasharray="3 2"/>
<line x1="1450" y1="595.8" x2="1470" y2="595.8" stroke="#111" stroke-width="1.4" stroke-dasharray="3 2"/>
<line x1="1450" y1="604.6" x2="1470" y2="604.6" stroke="#111" stroke-width="1.4" stroke-dasharray="3 2"/>
<line x1="1475" y1="545.0" x2="1496" y2="545.0" stroke="#111" stroke-width="0.8" />
<line x1="1475" y1="552.4" x2="1496" y2="552.4" stroke="#111" stroke-width="0.8" />
<line x1="1475" y1="559.8" x2="1496" y2="559.8" stroke="#111" stroke-width="0.8" />
<line x1="1475" y1="567.2" x2="1496" y2="567.2" stroke="#111" stroke-width="0.8" />
<line x1="1475" y1="574.6" x2="1496" y2="574.6" stroke="#111" stroke-width="0.8" />
<line x1="1475" y1="582.0" x2="1496" y2="582.0" stroke="#111" stroke-width="0.8" />
<line x1="1475" y1="589.4" x2="1496" y2="589.4" stroke="#111" stroke-width="0.8" />
<line x1="1475" y1="596.8" x2="1496" y2="596.8" stroke="#111" stroke-width="0.8" />
<line x1="1475" y1="604.2" x2="1496" y2="604.2" stroke="#111" stroke-width="0.8" />
<path d="M1472 542 V612" stroke="#111" stroke-width="2.4" fill="none" />
<text x="1485" y="622" font-size="6.5" fill="#333" text-anchor="middle">UP</text>
<path d="M1448 612.9 V667.6 H1498.5 V612.9" stroke="#1c1c1c" stroke-width="4" fill="none" stroke-linejoin="round"/>
<path d="M1448 612.9 V667.6 H1498.5 V612.9" stroke="#f2f2f2" stroke-width="2.1" fill="none" stroke-linejoin="round"/>
<path d="M1448 612.9 V667.6 H1498.5 V612.9" stroke="#555" stroke-width="2" fill="none" stroke-dasharray="1.2 2" stroke-linejoin="round"/>
<text x="1474" y="637.5" font-size="9.6" font-weight="bold" fill="#161616" text-anchor="middle" dominant-baseline="central" textLength="40" lengthAdjust="spacingAndGlyphs">STAIR&#160;&#160;259</text>
<path d="M1485 428.2 H1506 Q1516.3 428.2 1516.3 440 V460 M1485 428.2 Q1475.3 428.2 1475.3 440 V451" stroke="#1c1c1c" stroke-width="4" fill="none" stroke-linejoin="round"/>
<path d="M1485 428.2 H1506 Q1516.3 428.2 1516.3 440 V460 M1485 428.2 Q1475.3 428.2 1475.3 440 V451" stroke="#f2f2f2" stroke-width="2.1" fill="none" stroke-linejoin="round"/>
<path d="M1485 428.2 H1506 Q1516.3 428.2 1516.3 440 V460 M1485 428.2 Q1475.3 428.2 1475.3 440 V451" stroke="#555" stroke-width="2" fill="none" stroke-dasharray="1.2 2" stroke-linejoin="round"/>
<path d="M1516.3 640 V680 Q1516.3 689.5 1506 689.5 H1485 Q1475.3 689.5 1475.3 680 V667" stroke="#1c1c1c" stroke-width="4" fill="none" stroke-linejoin="round"/>
<path d="M1516.3 640 V680 Q1516.3 689.5 1506 689.5 H1485 Q1475.3 689.5 1475.3 680 V667" stroke="#f2f2f2" stroke-width="2.1" fill="none" stroke-linejoin="round"/>
<path d="M1516.3 640 V680 Q1516.3 689.5 1506 689.5 H1485 Q1475.3 689.5 1475.3 680 V667" stroke="#555" stroke-width="2" fill="none" stroke-dasharray="1.2 2" stroke-linejoin="round"/>
<path d="M1336.4 578.3 V624.6 M1336.4 646 V667.2 H1421 V676 Q1421 681 1414 681" stroke="#1c1c1c" stroke-width="4" fill="none" stroke-linejoin="round"/>
<path d="M1336.4 578.3 V624.6 M1336.4 646 V667.2 H1421 V676 Q1421 681 1414 681" stroke="#f2f2f2" stroke-width="2.1" fill="none" stroke-linejoin="round"/>
<path d="M1336.4 578.3 V624.6 M1336.4 646 V667.2 H1421 V676 Q1421 681 1414 681" stroke="#555" stroke-width="2" fill="none" stroke-dasharray="1.2 2" stroke-linejoin="round"/>
<path d="M1400 578.3 V624.6 H1421" stroke="#1c1c1c" stroke-width="4" fill="none" stroke-linejoin="round"/>
<path d="M1400 578.3 V624.6 H1421" stroke="#f2f2f2" stroke-width="2.1" fill="none" stroke-linejoin="round"/>
<path d="M1400 578.3 V624.6 H1421" stroke="#555" stroke-width="2" fill="none" stroke-dasharray="1.2 2" stroke-linejoin="round"/>
<path d="M1356 578.3 V613" stroke="#1c1c1c" stroke-width="4" fill="none" stroke-linejoin="round"/>
<path d="M1356 578.3 V613" stroke="#f2f2f2" stroke-width="2.1" fill="none" stroke-linejoin="round"/>
<path d="M1356 578.3 V613" stroke="#555" stroke-width="2" fill="none" stroke-dasharray="1.2 2" stroke-linejoin="round"/>
<path d="M1336.4 650 H1401 V667" stroke="#1c1c1c" stroke-width="4" fill="none" stroke-linejoin="round"/>
<path d="M1336.4 650 H1401 V667" stroke="#f2f2f2" stroke-width="2.1" fill="none" stroke-linejoin="round"/>
<path d="M1336.4 650 H1401 V667" stroke="#555" stroke-width="2" fill="none" stroke-dasharray="1.2 2" stroke-linejoin="round"/>
<path d="M1443.7 578 V667.2" stroke="#1c1c1c" stroke-width="4" fill="none" stroke-linejoin="round"/>
<path d="M1443.7 578 V667.2" stroke="#f2f2f2" stroke-width="2.1" fill="none" stroke-linejoin="round"/>
<path d="M1443.7 578 V667.2" stroke="#555" stroke-width="2" fill="none" stroke-dasharray="1.2 2" stroke-linejoin="round"/>
<circle cx="1311.6" cy="590" r="3.8" fill="none" stroke="#111" stroke-width="1.6"/>
<circle cx="1311.6" cy="590" r="1.2" fill="#111"/>
<path d="M1311.6 583 V586" stroke="#111" stroke-width="1.6" fill="none" />
<circle cx="1347.8" cy="590" r="3.8" fill="none" stroke="#111" stroke-width="1.6"/>
<circle cx="1347.8" cy="590" r="1.2" fill="#111"/>
<path d="M1347.8 583 V586" stroke="#111" stroke-width="1.6" fill="none" />
<path d="M1366 579 A4 4 0 0 0 1374 579" stroke="#111" stroke-width="1.4" fill="none" />
<path d="M1386 579 A4 4 0 0 0 1394 579" stroke="#111" stroke-width="1.4" fill="none" />
<path d="M1359 584 H1397 V611 H1359Z M1378 584 V611" stroke="#111" stroke-width="1" fill="none" stroke-dasharray="3 2"/>
<path d="M1337 613 Q1342 606 1346 607 M1352 611 V600 Q1352 597 1348 600" stroke="#111" stroke-width="1" fill="none" />
<rect x="1346" y="652" width="12.5" height="9" fill="none" stroke="#111" stroke-width="1.5"/>
<path d="M1352 661 V657" stroke="#111" stroke-width="1.2" fill="none" />
<rect x="1376" y="652" width="12.5" height="9" fill="none" stroke="#111" stroke-width="1.5"/>
<path d="M1382 661 V657" stroke="#111" stroke-width="1.2" fill="none" />
<path d="M1401 569 L1420 602" stroke="#111" stroke-width="0.9" fill="none" />
<circle cx="1420" cy="601" r="1.6" fill="#111"/>
<path d="M1336.4 625 A21 21 0 0 0 1315.4 646" stroke="#111" stroke-width="1" fill="none" />
<line x1="1315.4" y1="645.5" x2="1336.4" y2="645.5" stroke="#111" stroke-width="1.8" />
<path d="M1421 624.6 A20 20 0 0 1 1441 644.6 M1441 646 A21 21 0 0 0 1421 667" stroke="#111" stroke-width="1" fill="none" />
<text x="1381" y="636.1" font-size="9.6" font-weight="bold" fill="#161616" text-anchor="middle" dominant-baseline="central" textLength="52" lengthAdjust="spacingAndGlyphs">MEN'S RR&#160;&#160;258</text>
<circle cx="1428.5" cy="624" r="6.6" fill="#fff" stroke="#111" stroke-width="0.9"/>
<text x="1428.5" y="624.3" font-size="5.5" fill="#222" text-anchor="middle" dominant-baseline="central" textLength="8.9" lengthAdjust="spacingAndGlyphs">258A</text>
<circle cx="1329" cy="636" r="6.6" fill="#fff" stroke="#111" stroke-width="0.9"/>
<text x="1329" y="636.3" font-size="5.5" fill="#222" text-anchor="middle" dominant-baseline="central" textLength="8.9" lengthAdjust="spacingAndGlyphs">258B</text>
<circle cx="1431" cy="667" r="6.6" fill="#fff" stroke="#111" stroke-width="0.9"/>
<text x="1431" y="667.3" font-size="5.5" fill="#222" text-anchor="middle" dominant-baseline="central" textLength="8.9" lengthAdjust="spacingAndGlyphs">258</text>
<circle cx="1457" cy="667" r="6.6" fill="#fff" stroke="#111" stroke-width="0.9"/>
<text x="1457" y="667.3" font-size="5.5" fill="#222" text-anchor="middle" dominant-baseline="central" textLength="8.9" lengthAdjust="spacingAndGlyphs">259</text>
<circle cx="1431" cy="452" r="6.6" fill="#fff" stroke="#111" stroke-width="0.9"/>
<text x="1431" y="452.3" font-size="5.5" fill="#222" text-anchor="middle" dominant-baseline="central" textLength="8.9" lengthAdjust="spacingAndGlyphs">257</text>
<circle cx="1457" cy="452" r="6.6" fill="#fff" stroke="#111" stroke-width="0.9"/>
<text x="1457" y="452.3" font-size="5.5" fill="#222" text-anchor="middle" dominant-baseline="central" textLength="8.9" lengthAdjust="spacingAndGlyphs">260</text>
<path d="M1440 462 A20 20 0 0 1 1420 482 M1446 462 A20 20 0 0 0 1466 482" stroke="#111" stroke-width="1" fill="none" />
<path d="M1176 572 H1240" stroke="#f0913a" stroke-width="1.3" fill="none" stroke-dasharray="6 3"/>
<path d="M1172 572 L1181 567.5 V576.5Z M1244 572 L1235 567.5 V576.5Z" fill="#f0913a"/>
<text x="1208" y="575" font-size="8" fill="#f0913a" text-anchor="middle">?</text>
<path d="M1516.3 460 V472 Q1516.3 487 1501.5 487 V650 M1530 470 H1580 Q1592.8 470 1592.8 483 V535 M1592.8 584 V636 Q1592.8 649.7 1580 649.7 H1530 Q1518 649.7 1518 640 M1530 470 Q1518 470 1518 482" stroke="#1c1c1c" stroke-width="4" fill="none" stroke-linejoin="round"/>
<path d="M1516.3 460 V472 Q1516.3 487 1501.5 487 V650 M1530 470 H1580 Q1592.8 470 1592.8 483 V535 M1592.8 584 V636 Q1592.8 649.7 1580 649.7 H1530 Q1518 649.7 1518 640 M1530 470 Q1518 470 1518 482" stroke="#f2f2f2" stroke-width="2.1" fill="none" stroke-linejoin="round"/>
<path d="M1516.3 460 V472 Q1516.3 487 1501.5 487 V650 M1530 470 H1580 Q1592.8 470 1592.8 483 V535 M1592.8 584 V636 Q1592.8 649.7 1580 649.7 H1530 Q1518 649.7 1518 640 M1530 470 Q1518 470 1518 482" stroke="#555" stroke-width="2" fill="none" stroke-dasharray="1.2 2" stroke-linejoin="round"/>
<path d="M1501 559.3 H1593" stroke="#1c1c1c" stroke-width="4" fill="none" stroke-linejoin="round"/>
<path d="M1501 559.3 H1593" stroke="#f2f2f2" stroke-width="2.1" fill="none" stroke-linejoin="round"/>
<path d="M1501 559.3 H1593" stroke="#555" stroke-width="2" fill="none" stroke-dasharray="1.2 2" stroke-linejoin="round"/>
<path d="M1592.8 534.3 A20.5 20.5 0 0 0 1572.3 554.8" stroke="#111" stroke-width="1" fill="none" />
<line x1="1592.8" y1="554.8" x2="1572.3" y2="554.8" stroke="#111" stroke-width="1.8" />
<path d="M1592.8 584.3 A20.5 20.5 0 0 1 1572.3 563.8" stroke="#111" stroke-width="1" fill="none" />
<line x1="1592.8" y1="563.8" x2="1572.3" y2="563.8" stroke="#111" stroke-width="1.8" />
<circle cx="1592.8" cy="545.5999999999999" r="6.6" fill="#fff" stroke="#111" stroke-width="0.9"/>
<text x="1592.8" y="545.8999999999999" font-size="5.5" fill="#222" text-anchor="middle" dominant-baseline="central" textLength="8.9" lengthAdjust="spacingAndGlyphs">261</text>
<circle cx="1592.8" cy="572.8" r="6.6" fill="#fff" stroke="#111" stroke-width="0.9"/>
<text x="1592.8" y="573.0999999999999" font-size="5.5" fill="#222" text-anchor="middle" dominant-baseline="central" textLength="8.9" lengthAdjust="spacingAndGlyphs">262</text>
<text x="1550.6" y="510.7" font-size="9.6" font-weight="bold" fill="#161616" text-anchor="middle" dominant-baseline="central" textLength="46.4" lengthAdjust="spacingAndGlyphs">OFFICE&#160;&#160;261</text>
<text x="1551" y="603" font-size="9.6" font-weight="bold" fill="#161616" text-anchor="middle" dominant-baseline="central" textLength="38" lengthAdjust="spacingAndGlyphs">COPY&#160;&#160;262</text>
<path d="M1518 470 V650" stroke="#111" stroke-width="1" fill="none" stroke-dasharray="3 2"/>
<path d="M1592 468.4 H1830 M1592 650.7 H1830" stroke="#111" stroke-width="1.3" fill="none" />
<path d="M1518 449.7 H1830 M1518 669 H1830" stroke="#111" stroke-width="1" fill="none" stroke-dasharray="3 2"/>
<text x="1765.8" y="552" font-size="9.6" font-weight="bold" fill="#161616" text-anchor="middle" dominant-baseline="central" textLength="71" lengthAdjust="spacingAndGlyphs">OPEN OFFICE&#160;&#160;263</text>
<path d="M1452.6 612 V695.7 H1830" stroke="#e2383f" stroke-width="1.2" fill="none" stroke-dasharray="2.5 2.5"/>
<text x="1708" y="708.3" font-size="11" fill="#e2383f" textLength="93" lengthAdjust="spacingAndGlyphs">Emergency Egress?</text>
<circle cx="1153.7" cy="699.9" r="13.5" fill="#fff" stroke="#111" stroke-width="1"/>
<line x1="1140.5" y1="700" x2="1167" y2="700" stroke="#111" stroke-width="0.8" />
<text x="1153.7" y="697" font-size="7" fill="#222" text-anchor="middle">1</text>
<text x="1153.7" y="709" font-size="6.5" fill="#222" text-anchor="middle" textLength="17" lengthAdjust="spacingAndGlyphs">A6.02</text>
<path d="M1121 680 L1130 699 H1140" stroke="#111" stroke-width="1" fill="none" />
<path d="M539.7 876 V730 Q539.7 715.7 555 715.7 L660 722 Q673.6 723 673.6 736 V770 M673.6 816 V876" stroke="#1c1c1c" stroke-width="4" fill="none" stroke-linejoin="round"/>
<path d="M539.7 876 V730 Q539.7 715.7 555 715.7 L660 722 Q673.6 723 673.6 736 V770 M673.6 816 V876" stroke="#f2f2f2" stroke-width="2.1" fill="none" stroke-linejoin="round"/>
<path d="M539.7 876 V730 Q539.7 715.7 555 715.7 L660 722 Q673.6 723 673.6 736 V770 M673.6 816 V876" stroke="#555" stroke-width="2" fill="none" stroke-dasharray="1.2 2" stroke-linejoin="round"/>
<path d="M539.7 792.7 H673.6" stroke="#1c1c1c" stroke-width="4" fill="none" stroke-linejoin="round"/>
<path d="M539.7 792.7 H673.6" stroke="#f2f2f2" stroke-width="2.1" fill="none" stroke-linejoin="round"/>
<path d="M539.7 792.7 H673.6" stroke="#555" stroke-width="2" fill="none" stroke-dasharray="1.2 2" stroke-linejoin="round"/>
<path d="M673.6 767.7 A20.5 20.5 0 0 0 653.1 788.2" stroke="#111" stroke-width="1" fill="none" />
<line x1="673.6" y1="788.2" x2="653.1" y2="788.2" stroke="#111" stroke-width="1.8" />
<path d="M673.6 817.7 A20.5 20.5 0 0 1 653.1 797.2" stroke="#111" stroke-width="1" fill="none" />
<line x1="673.6" y1="797.2" x2="653.1" y2="797.2" stroke="#111" stroke-width="1.8" />
<circle cx="673.6" cy="779.0" r="6.6" fill="#fff" stroke="#111" stroke-width="0.9"/>
<text x="673.6" y="779.3" font-size="5.5" fill="#222" text-anchor="middle" dominant-baseline="central" textLength="8.9" lengthAdjust="spacingAndGlyphs">242</text>
<circle cx="673.6" cy="806.2" r="6.6" fill="#fff" stroke="#111" stroke-width="0.9"/>
<text x="673.6" y="806.5" font-size="5.5" fill="#222" text-anchor="middle" dominant-baseline="central" textLength="8.9" lengthAdjust="spacingAndGlyphs">243</text>
<text x="606.3" y="755.4" font-size="9.6" font-weight="bold" fill="#161616" text-anchor="middle" dominant-baseline="central" textLength="46.4" lengthAdjust="spacingAndGlyphs">OFFICE&#160;&#160;242</text>
<text x="606.3" y="827" font-size="9.6" font-weight="bold" fill="#161616" text-anchor="middle" dominant-baseline="central" textLength="46.4" lengthAdjust="spacingAndGlyphs">OFFICE&#160;&#160;243</text>
<path d="M739.5 876 V784 M739.5 830 V745 Q739.5 731.4 753 731.4 L860 737.7 Q874.5 738 874.5 752 V784 M874.5 830 V876" stroke="#1c1c1c" stroke-width="4" fill="none" stroke-linejoin="round"/>
<path d="M739.5 876 V784 M739.5 830 V745 Q739.5 731.4 753 731.4 L860 737.7 Q874.5 738 874.5 752 V784 M874.5 830 V876" stroke="#f2f2f2" stroke-width="2.1" fill="none" stroke-linejoin="round"/>
<path d="M739.5 876 V784 M739.5 830 V745 Q739.5 731.4 753 731.4 L860 737.7 Q874.5 738 874.5 752 V784 M874.5 830 V876" stroke="#555" stroke-width="2" fill="none" stroke-dasharray="1.2 2" stroke-linejoin="round"/>
<path d="M806.9 734 V876" stroke="#1c1c1c" stroke-width="4" fill="none" stroke-linejoin="round"/>
<path d="M806.9 734 V876" stroke="#f2f2f2" stroke-width="2.1" fill="none" stroke-linejoin="round"/>
<path d="M806.9 734 V876" stroke="#555" stroke-width="2" fill="none" stroke-dasharray="1.2 2" stroke-linejoin="round"/>
<path d="M739.5 806 H874.5" stroke="#1c1c1c" stroke-width="4" fill="none" stroke-linejoin="round"/>
<path d="M739.5 806 H874.5" stroke="#f2f2f2" stroke-width="2.1" fill="none" stroke-linejoin="round"/>
<path d="M739.5 806 H874.5" stroke="#555" stroke-width="2" fill="none" stroke-dasharray="1.2 2" stroke-linejoin="round"/>
<path d="M739.5 781.0 A20.5 20.5 0 0 1 760.0 801.5" stroke="#111" stroke-width="1" fill="none" />
<line x1="739.5" y1="801.5" x2="760.0" y2="801.5" stroke="#111" stroke-width="1.8" />
<path d="M739.5 831.0 A20.5 20.5 0 0 0 760.0 810.5" stroke="#111" stroke-width="1" fill="none" />
<line x1="739.5" y1="810.5" x2="760.0" y2="810.5" stroke="#111" stroke-width="1.8" />
<circle cx="739.5" cy="792.3" r="6.6" fill="#fff" stroke="#111" stroke-width="0.9"/>
<text x="739.5" y="792.5999999999999" font-size="5.5" fill="#222" text-anchor="middle" dominant-baseline="central" textLength="8.9" lengthAdjust="spacingAndGlyphs">240</text>
<circle cx="739.5" cy="819.5" r="6.6" fill="#fff" stroke="#111" stroke-width="0.9"/>
<text x="739.5" y="819.8" font-size="5.5" fill="#222" text-anchor="middle" dominant-baseline="central" textLength="8.9" lengthAdjust="spacingAndGlyphs">241</text>
<path d="M874.5 781.0 A20.5 20.5 0 0 0 854.0 801.5" stroke="#111" stroke-width="1" fill="none" />
<line x1="874.5" y1="801.5" x2="854.0" y2="801.5" stroke="#111" stroke-width="1.8" />
<path d="M874.5 831.0 A20.5 20.5 0 0 1 854.0 810.5" stroke="#111" stroke-width="1" fill="none" />
<line x1="874.5" y1="810.5" x2="854.0" y2="810.5" stroke="#111" stroke-width="1.8" />
<circle cx="874.5" cy="792.3" r="6.6" fill="#fff" stroke="#111" stroke-width="0.9"/>
<text x="874.5" y="792.5999999999999" font-size="5.5" fill="#222" text-anchor="middle" dominant-baseline="central" textLength="8.9" lengthAdjust="spacingAndGlyphs">238</text>
<circle cx="874.5" cy="819.5" r="6.6" fill="#fff" stroke="#111" stroke-width="0.9"/>
<text x="874.5" y="819.8" font-size="5.5" fill="#222" text-anchor="middle" dominant-baseline="central" textLength="8.9" lengthAdjust="spacingAndGlyphs">239</text>
<text x="773" y="766.5" font-size="9.6" font-weight="bold" fill="#161616" text-anchor="middle" dominant-baseline="central" textLength="46.4" lengthAdjust="spacingAndGlyphs">OFFICE&#160;&#160;240</text>
<text x="840.6" y="766.5" font-size="9.6" font-weight="bold" fill="#161616" text-anchor="middle" dominant-baseline="central" textLength="46.4" lengthAdjust="spacingAndGlyphs">OFFICE&#160;&#160;238</text>
<text x="773" y="838.7" font-size="9.6" font-weight="bold" fill="#161616" text-anchor="middle" dominant-baseline="central" textLength="46.4" lengthAdjust="spacingAndGlyphs">OFFICE&#160;&#160;241</text>
<text x="840.6" y="838.7" font-size="9.6" font-weight="bold" fill="#161616" text-anchor="middle" dominant-baseline="central" textLength="46.4" lengthAdjust="spacingAndGlyphs">OFFICE&#160;&#160;239</text>
<path d="M996 793.5 A5.63 5.63 0 0 1 1007.2 793.5 A5.63 5.63 0 0 1 1018.5 793.5 A5.63 5.63 0 0 1 1029.8 793.5 A5.63 5.63 0 0 1 1041.0 793.5 A5.63 5.63 0 0 1 1052.2 793.5 A5.63 5.63 0 0 1 1063.5 793.5 A5.63 5.63 0 0 1 1074.8 793.5 A5.63 5.63 0 0 1 1086.0 793.5 A5.76 5.76 0 0 1 1086.0 805.0 A5.76 5.76 0 0 1 1086.0 816.5 A5.76 5.76 0 0 1 1086.0 828.0 A5.76 5.76 0 0 1 1086.0 839.5 A5.76 5.76 0 0 1 1086.0 851.0 A5.76 5.76 0 0 1 1086.0 862.5 A5.76 5.76 0 0 1 1086.0 874.0 A5.76 5.76 0 0 1 1086.0 885.5 A5.63 5.63 0 0 1 1074.8 885.5 A5.63 5.63 0 0 1 1063.5 885.5 A5.63 5.63 0 0 1 1052.2 885.5 A5.63 5.63 0 0 1 1041.0 885.5 A5.63 5.63 0 0 1 1029.8 885.5 A5.63 5.63 0 0 1 1018.5 885.5 A5.63 5.63 0 0 1 1007.2 885.5 A5.63 5.63 0 0 1 996.0 885.5 A5.76 5.76 0 0 1 996.0 874.0 A5.76 5.76 0 0 1 996.0 862.5 A5.76 5.76 0 0 1 996.0 851.0 A5.76 5.76 0 0 1 996.0 839.5 A5.76 5.76 0 0 1 996.0 828.0 A5.76 5.76 0 0 1 996.0 816.5 A5.76 5.76 0 0 1 996.0 805.0 A5.76 5.76 0 0 1 996.0 793.5Z" stroke="#3355d8" stroke-width="1.2" fill="none" />
<path d="M940.2 876 V784 M940.2 830 V759 Q940.2 745 955 745 L1060 754.4 Q1073.2 755 1073.2 768 V784 M1073.2 830 V876" stroke="#1c1c1c" stroke-width="4" fill="none" stroke-linejoin="round"/>
<path d="M940.2 876 V784 M940.2 830 V759 Q940.2 745 955 745 L1060 754.4 Q1073.2 755 1073.2 768 V784 M1073.2 830 V876" stroke="#f2f2f2" stroke-width="2.1" fill="none" stroke-linejoin="round"/>
<path d="M940.2 876 V784 M940.2 830 V759 Q940.2 745 955 745 L1060 754.4 Q1073.2 755 1073.2 768 V784 M1073.2 830 V876" stroke="#555" stroke-width="2" fill="none" stroke-dasharray="1.2 2" stroke-linejoin="round"/>
<path d="M1007 748 V876" stroke="#1c1c1c" stroke-width="4" fill="none" stroke-linejoin="round"/>
<path d="M1007 748 V876" stroke="#f2f2f2" stroke-width="2.1" fill="none" stroke-linejoin="round"/>
<path d="M1007 748 V876" stroke="#555" stroke-width="2" fill="none" stroke-dasharray="1.2 2" stroke-linejoin="round"/>
<path d="M940.2 806.7 H1073.2" stroke="#1c1c1c" stroke-width="4" fill="none" stroke-linejoin="round"/>
<path d="M940.2 806.7 H1073.2" stroke="#f2f2f2" stroke-width="2.1" fill="none" stroke-linejoin="round"/>
<path d="M940.2 806.7 H1073.2" stroke="#555" stroke-width="2" fill="none" stroke-dasharray="1.2 2" stroke-linejoin="round"/>
<path d="M940.2 781.7 A20.5 20.5 0 0 1 960.7 802.2" stroke="#111" stroke-width="1" fill="none" />
<line x1="940.2" y1="802.2" x2="960.7" y2="802.2" stroke="#111" stroke-width="1.8" />
<path d="M940.2 831.7 A20.5 20.5 0 0 0 960.7 811.2" stroke="#111" stroke-width="1" fill="none" />
<line x1="940.2" y1="811.2" x2="960.7" y2="811.2" stroke="#111" stroke-width="1.8" />
<circle cx="940.2" cy="793.0" r="6.6" fill="#fff" stroke="#111" stroke-width="0.9"/>
<text x="940.2" y="793.3" font-size="5.5" fill="#222" text-anchor="middle" dominant-baseline="central" textLength="8.9" lengthAdjust="spacingAndGlyphs">236</text>
<circle cx="940.2" cy="820.2" r="6.6" fill="#fff" stroke="#111" stroke-width="0.9"/>
<text x="940.2" y="820.5" font-size="5.5" fill="#222" text-anchor="middle" dominant-baseline="central" textLength="8.9" lengthAdjust="spacingAndGlyphs">237</text>
<path d="M1073.2 781.7 A20.5 20.5 0 0 0 1052.7 802.2" stroke="#111" stroke-width="1" fill="none" />
<line x1="1073.2" y1="802.2" x2="1052.7" y2="802.2" stroke="#111" stroke-width="1.8" />
<path d="M1073.2 831.7 A20.5 20.5 0 0 1 1052.7 811.2" stroke="#111" stroke-width="1" fill="none" />
<line x1="1073.2" y1="811.2" x2="1052.7" y2="811.2" stroke="#111" stroke-width="1.8" />
<circle cx="1073.2" cy="793.0" r="6.6" fill="#fff" stroke="#111" stroke-width="0.9"/>
<text x="1073.2" y="793.3" font-size="5.5" fill="#222" text-anchor="middle" dominant-baseline="central" textLength="8.9" lengthAdjust="spacingAndGlyphs">234</text>
<circle cx="1073.2" cy="820.2" r="6.6" fill="#fff" stroke="#111" stroke-width="0.9"/>
<text x="1073.2" y="820.5" font-size="5.5" fill="#222" text-anchor="middle" dominant-baseline="central" textLength="8.9" lengthAdjust="spacingAndGlyphs">235</text>
<text x="974.3" y="777" font-size="9.6" font-weight="bold" fill="#161616" text-anchor="middle" dominant-baseline="central" textLength="46" lengthAdjust="spacingAndGlyphs">OFFICE 236</text>
<text x="1040.2" y="777" font-size="9.6" font-weight="bold" fill="#161616" text-anchor="middle" dominant-baseline="central" textLength="48.7" lengthAdjust="spacingAndGlyphs">MEETING&#160;&#160;234</text>
<text x="974.3" y="836.6" font-size="9.6" font-weight="bold" fill="#161616" text-anchor="middle" dominant-baseline="central" textLength="46" lengthAdjust="spacingAndGlyphs">OFFICE 237</text>
<text x="1040.2" y="836.6" font-size="9.6" font-weight="bold" fill="#161616" text-anchor="middle" dominant-baseline="central" textLength="48.7" lengthAdjust="spacingAndGlyphs">MEETING&#160;&#160;235</text>
<path d="M1078.5 741.8 H1339 Q1347 741.8 1347 750 V882 Q1347 890 1339 890 H1078.5 Q1070.5 890 1070.5 882 V750 Q1070.5 741.8 1078.5 741.8Z" stroke="#111" stroke-width="1.8" fill="none" stroke-dasharray="7 4"/>
<path d="M1108 756.5 L1207.5 763.8 L1307 756.5" stroke="#1c1c1c" stroke-width="4" fill="none" stroke-linejoin="round"/>
<path d="M1108 756.5 L1207.5 763.8 L1307 756.5" stroke="#f2f2f2" stroke-width="2.1" fill="none" stroke-linejoin="round"/>
<path d="M1108 756.5 L1207.5 763.8 L1307 756.5" stroke="#555" stroke-width="2" fill="none" stroke-dasharray="1.2 2" stroke-linejoin="round"/>
<path d="M1108 770 H1307" stroke="#1c1c1c" stroke-width="4" fill="none" stroke-linejoin="round"/>
<path d="M1108 770 H1307" stroke="#f2f2f2" stroke-width="2.1" fill="none" stroke-linejoin="round"/>
<path d="M1108 770 H1307" stroke="#555" stroke-width="2" fill="none" stroke-dasharray="1.2 2" stroke-linejoin="round"/>
<path d="M1108 757 V786 M1307 757 V786" stroke="#1c1c1c" stroke-width="4" fill="none" stroke-linejoin="round"/>
<path d="M1108 757 V786 M1307 757 V786" stroke="#f2f2f2" stroke-width="2.1" fill="none" stroke-linejoin="round"/>
<path d="M1108 757 V786 M1307 757 V786" stroke="#555" stroke-width="2" fill="none" stroke-dasharray="1.2 2" stroke-linejoin="round"/>
<rect x="1113" y="773" width="28" height="13" fill="none" stroke="#111" stroke-width="1.4"/>
<rect x="1274" y="773" width="28" height="13" fill="none" stroke="#111" stroke-width="1.4"/>
<path d="M1146 773 H1268 V786 H1146Z" stroke="#111" stroke-width="1" fill="none" />
<path d="M1155 772 H1266 V779 H1155Z" stroke="#111" stroke-width="0.8" fill="none" stroke-dasharray="2.5 2"/>
<rect x="1199" y="775" width="17" height="8" fill="none" stroke="#111" stroke-width="1.2"/>
<path d="M1146.9 795.6 H1268.6 V835 H1146.9Z" stroke="#111" stroke-width="1" fill="none" stroke-dasharray="3 2"/>
<path d="M1146.9 803 H1268.6 M1146.9 826 H1268.6" stroke="#111" stroke-width="1" fill="none" />
<text x="1210" y="816.1" font-size="9.6" font-weight="bold" fill="#161616" text-anchor="middle" dominant-baseline="central" textLength="72" lengthAdjust="spacingAndGlyphs">BREAK ROOM&#160;&#160;233</text>
<path d="M1098.7 851 H1317 V869 H1098.7Z" stroke="#111" stroke-width="1.1" fill="none" />
<rect x="1098.7" y="851" width="18" height="18" fill="none" stroke="#111" stroke-width="1.6"/>
<rect x="1299" y="851" width="18" height="18" fill="none" stroke="#111" stroke-width="1.6"/>
<path d="M1340.8 876 V784 M1340.8 830 V769 Q1340.8 754.8 1355 754.8 L1460 745 Q1475.3 744 1475.3 759 V784 M1475.3 830 V876" stroke="#1c1c1c" stroke-width="4" fill="none" stroke-linejoin="round"/>
<path d="M1340.8 876 V784 M1340.8 830 V769 Q1340.8 754.8 1355 754.8 L1460 745 Q1475.3 744 1475.3 759 V784 M1475.3 830 V876" stroke="#f2f2f2" stroke-width="2.1" fill="none" stroke-linejoin="round"/>
<path d="M1340.8 876 V784 M1340.8 830 V769 Q1340.8 754.8 1355 754.8 L1460 745 Q1475.3 744 1475.3 759 V784 M1475.3 830 V876" stroke="#555" stroke-width="2" fill="none" stroke-dasharray="1.2 2" stroke-linejoin="round"/>
<path d="M1407.7 750 V876" stroke="#1c1c1c" stroke-width="4" fill="none" stroke-linejoin="round"/>
<path d="M1407.7 750 V876" stroke="#f2f2f2" stroke-width="2.1" fill="none" stroke-linejoin="round"/>
<path d="M1407.7 750 V876" stroke="#555" stroke-width="2" fill="none" stroke-dasharray="1.2 2" stroke-linejoin="round"/>
<path d="M1340.8 806.7 H1475.3" stroke="#1c1c1c" stroke-width="4" fill="none" stroke-linejoin="round"/>
<path d="M1340.8 806.7 H1475.3" stroke="#f2f2f2" stroke-width="2.1" fill="none" stroke-linejoin="round"/>
<path d="M1340.8 806.7 H1475.3" stroke="#555" stroke-width="2" fill="none" stroke-dasharray="1.2 2" stroke-linejoin="round"/>
<path d="M1340.8 781.7 A20.5 20.5 0 0 1 1361.3 802.2" stroke="#111" stroke-width="1" fill="none" />
<line x1="1340.8" y1="802.2" x2="1361.3" y2="802.2" stroke="#111" stroke-width="1.8" />
<path d="M1340.8 831.7 A20.5 20.5 0 0 0 1361.3 811.2" stroke="#111" stroke-width="1" fill="none" />
<line x1="1340.8" y1="811.2" x2="1361.3" y2="811.2" stroke="#111" stroke-width="1.8" />
<circle cx="1340.8" cy="793.0" r="6.6" fill="#fff" stroke="#111" stroke-width="0.9"/>
<text x="1340.8" y="793.3" font-size="5.5" fill="#222" text-anchor="middle" dominant-baseline="central" textLength="8.9" lengthAdjust="spacingAndGlyphs">231</text>
<circle cx="1340.8" cy="820.2" r="6.6" fill="#fff" stroke="#111" stroke-width="0.9"/>
<text x="1340.8" y="820.5" font-size="5.5" fill="#222" text-anchor="middle" dominant-baseline="central" textLength="8.9" lengthAdjust="spacingAndGlyphs">232</text>
<path d="M1475.3 781.7 A20.5 20.5 0 0 0 1454.8 802.2" stroke="#111" stroke-width="1" fill="none" />
<line x1="1475.3" y1="802.2" x2="1454.8" y2="802.2" stroke="#111" stroke-width="1.8" />
<path d="M1475.3 831.7 A20.5 20.5 0 0 1 1454.8 811.2" stroke="#111" stroke-width="1" fill="none" />
<line x1="1475.3" y1="811.2" x2="1454.8" y2="811.2" stroke="#111" stroke-width="1.8" />
<circle cx="1475.3" cy="793.0" r="6.6" fill="#fff" stroke="#111" stroke-width="0.9"/>
<text x="1475.3" y="793.3" font-size="5.5" fill="#222" text-anchor="middle" dominant-baseline="central" textLength="8.9" lengthAdjust="spacingAndGlyphs">229</text>
<circle cx="1475.3" cy="820.2" r="6.6" fill="#fff" stroke="#111" stroke-width="0.9"/>
<text x="1475.3" y="820.5" font-size="5.5" fill="#222" text-anchor="middle" dominant-baseline="central" textLength="8.9" lengthAdjust="spacingAndGlyphs">230</text>
<text x="1377" y="778.5" font-size="9.6" font-weight="bold" fill="#161616" text-anchor="middle" dominant-baseline="central" textLength="48.7" lengthAdjust="spacingAndGlyphs">MEETING&#160;&#160;231</text>
<text x="1439.7" y="778.5" font-size="9.6" font-weight="bold" fill="#161616" text-anchor="middle" dominant-baseline="central" textLength="46.4" lengthAdjust="spacingAndGlyphs">OFFICE&#160;&#160;229</text>
<text x="1377" y="845.4" font-size="9.6" font-weight="bold" fill="#161616" text-anchor="middle" dominant-baseline="central" textLength="48.7" lengthAdjust="spacingAndGlyphs">MEETING&#160;&#160;232</text>
<text x="1439.7" y="845.4" font-size="9.6" font-weight="bold" fill="#161616" text-anchor="middle" dominant-baseline="central" textLength="46.4" lengthAdjust="spacingAndGlyphs">OFFICE&#160;&#160;230</text>
<path d="M1541.6 876 V784 M1541.6 830 V752 Q1541.6 737.7 1556 737.7 L1660 729.3 Q1675.5 729 1675.5 744 V784 M1675.5 830 V876" stroke="#1c1c1c" stroke-width="4" fill="none" stroke-linejoin="round"/>
<path d="M1541.6 876 V784 M1541.6 830 V752 Q1541.6 737.7 1556 737.7 L1660 729.3 Q1675.5 729 1675.5 744 V784 M1675.5 830 V876" stroke="#f2f2f2" stroke-width="2.1" fill="none" stroke-linejoin="round"/>
<path d="M1541.6 876 V784 M1541.6 830 V752 Q1541.6 737.7 1556 737.7 L1660 729.3 Q1675.5 729 1675.5 744 V784 M1675.5 830 V876" stroke="#555" stroke-width="2" fill="none" stroke-dasharray="1.2 2" stroke-linejoin="round"/>
<path d="M1608.6 733 V876" stroke="#1c1c1c" stroke-width="4" fill="none" stroke-linejoin="round"/>
<path d="M1608.6 733 V876" stroke="#f2f2f2" stroke-width="2.1" fill="none" stroke-linejoin="round"/>
<path d="M1608.6 733 V876" stroke="#555" stroke-width="2" fill="none" stroke-dasharray="1.2 2" stroke-linejoin="round"/>
<path d="M1541.6 806.7 H1675.5" stroke="#1c1c1c" stroke-width="4" fill="none" stroke-linejoin="round"/>
<path d="M1541.6 806.7 H1675.5" stroke="#f2f2f2" stroke-width="2.1" fill="none" stroke-linejoin="round"/>
<path d="M1541.6 806.7 H1675.5" stroke="#555" stroke-width="2" fill="none" stroke-dasharray="1.2 2" stroke-linejoin="round"/>
<path d="M1541.6 781.7 A20.5 20.5 0 0 1 1562.1 802.2" stroke="#111" stroke-width="1" fill="none" />
<line x1="1541.6" y1="802.2" x2="1562.1" y2="802.2" stroke="#111" stroke-width="1.8" />
<path d="M1541.6 831.7 A20.5 20.5 0 0 0 1562.1 811.2" stroke="#111" stroke-width="1" fill="none" />
<line x1="1541.6" y1="811.2" x2="1562.1" y2="811.2" stroke="#111" stroke-width="1.8" />
<circle cx="1541.6" cy="793.0" r="6.6" fill="#fff" stroke="#111" stroke-width="0.9"/>
<text x="1541.6" y="793.3" font-size="5.5" fill="#222" text-anchor="middle" dominant-baseline="central" textLength="8.9" lengthAdjust="spacingAndGlyphs">227</text>
<circle cx="1541.6" cy="820.2" r="6.6" fill="#fff" stroke="#111" stroke-width="0.9"/>
<text x="1541.6" y="820.5" font-size="5.5" fill="#222" text-anchor="middle" dominant-baseline="central" textLength="8.9" lengthAdjust="spacingAndGlyphs">228</text>
<path d="M1675.5 781.7 A20.5 20.5 0 0 0 1655.0 802.2" stroke="#111" stroke-width="1" fill="none" />
<line x1="1675.5" y1="802.2" x2="1655.0" y2="802.2" stroke="#111" stroke-width="1.8" />
<path d="M1675.5 831.7 A20.5 20.5 0 0 1 1655.0 811.2" stroke="#111" stroke-width="1" fill="none" />
<line x1="1675.5" y1="811.2" x2="1655.0" y2="811.2" stroke="#111" stroke-width="1.8" />
<circle cx="1675.5" cy="793.0" r="6.6" fill="#fff" stroke="#111" stroke-width="0.9"/>
<text x="1675.5" y="793.3" font-size="5.5" fill="#222" text-anchor="middle" dominant-baseline="central" textLength="8.9" lengthAdjust="spacingAndGlyphs">225</text>
<circle cx="1675.5" cy="820.2" r="6.6" fill="#fff" stroke="#111" stroke-width="0.9"/>
<text x="1675.5" y="820.5" font-size="5.5" fill="#222" text-anchor="middle" dominant-baseline="central" textLength="8.9" lengthAdjust="spacingAndGlyphs">226</text>
<text x="1575" y="767.4" font-size="9.6" font-weight="bold" fill="#161616" text-anchor="middle" dominant-baseline="central" textLength="46.4" lengthAdjust="spacingAndGlyphs">OFFICE&#160;&#160;227</text>
<text x="1644.8" y="767.4" font-size="9.6" font-weight="bold" fill="#161616" text-anchor="middle" dominant-baseline="central" textLength="46.4" lengthAdjust="spacingAndGlyphs">OFFICE&#160;&#160;225</text>
<text x="1575" y="840.8" font-size="9.6" font-weight="bold" fill="#161616" text-anchor="middle" dominant-baseline="central" textLength="46.4" lengthAdjust="spacingAndGlyphs">OFFICE&#160;&#160;228</text>
<text x="1644.8" y="840.8" font-size="9.6" font-weight="bold" fill="#161616" text-anchor="middle" dominant-baseline="central" textLength="46.4" lengthAdjust="spacingAndGlyphs">OFFICE&#160;&#160;226</text>
<path d="M1742 876 V816 M1742 770 V741 Q1742 727 1756 727 L1830 716.6" stroke="#1c1c1c" stroke-width="4" fill="none" stroke-linejoin="round"/>
<path d="M1742 876 V816 M1742 770 V741 Q1742 727 1756 727 L1830 716.6" stroke="#f2f2f2" stroke-width="2.1" fill="none" stroke-linejoin="round"/>
<path d="M1742 876 V816 M1742 770 V741 Q1742 727 1756 727 L1830 716.6" stroke="#555" stroke-width="2" fill="none" stroke-dasharray="1.2 2" stroke-linejoin="round"/>
<path d="M1742 792.4 H1830" stroke="#1c1c1c" stroke-width="4" fill="none" stroke-linejoin="round"/>
<path d="M1742 792.4 H1830" stroke="#f2f2f2" stroke-width="2.1" fill="none" stroke-linejoin="round"/>
<path d="M1742 792.4 H1830" stroke="#555" stroke-width="2" fill="none" stroke-dasharray="1.2 2" stroke-linejoin="round"/>
<path d="M1742 767.4 A20.5 20.5 0 0 1 1762.5 787.9" stroke="#111" stroke-width="1" fill="none" />
<line x1="1742" y1="787.9" x2="1762.5" y2="787.9" stroke="#111" stroke-width="1.8" />
<path d="M1742 817.4 A20.5 20.5 0 0 0 1762.5 796.9" stroke="#111" stroke-width="1" fill="none" />
<line x1="1742" y1="796.9" x2="1762.5" y2="796.9" stroke="#111" stroke-width="1.8" />
<circle cx="1742" cy="778.6999999999999" r="6.6" fill="#fff" stroke="#111" stroke-width="0.9"/>
<text x="1742" y="778.9999999999999" font-size="5.5" fill="#222" text-anchor="middle" dominant-baseline="central" textLength="8.9" lengthAdjust="spacingAndGlyphs">223</text>
<circle cx="1742" cy="805.9" r="6.6" fill="#fff" stroke="#111" stroke-width="0.9"/>
<text x="1742" y="806.1999999999999" font-size="5.5" fill="#222" text-anchor="middle" dominant-baseline="central" textLength="8.9" lengthAdjust="spacingAndGlyphs">224</text>
<text x="1826" y="759" font-size="9.6" font-weight="bold" fill="#161616" text-anchor="middle" dominant-baseline="central" textLength="46.4" lengthAdjust="spacingAndGlyphs">OFFICE&#160;&#160;223</text>
<text x="1826" y="832" font-size="9.6" font-weight="bold" fill="#161616" text-anchor="middle" dominant-baseline="central" textLength="46.4" lengthAdjust="spacingAndGlyphs">OFFICE&#160;&#160;224</text>
<circle cx="1367" cy="917" r="13" fill="#fff" stroke="#111" stroke-width="1"/>
<line x1="1354" y1="917.5" x2="1380" y2="917.5" stroke="#111" stroke-width="0.8" />
<text x="1367" y="914" font-size="6.5" fill="#222" text-anchor="middle">01</text>
<text x="1367" y="926" font-size="6.5" fill="#222" text-anchor="middle" textLength="17" lengthAdjust="spacingAndGlyphs">A6.01</text>
<path d="M1347 882 L1360 905" stroke="#111" stroke-width="1" fill="none" />
<path d="M487 188 H496 L534 268.7" stroke="#ef9548" stroke-width="1.1" fill="none" />
<path d="M528.8 264.0 L534 268.7 L533.7 261.7" stroke="#ef9548" stroke-width="1" fill="none" />
<path d="M599.14 393.18 A5.91 5.91 0 1 1 605.70 383.54 A5.91 5.91 0 0 1 613.90 383.54 A5.91 5.91 0 1 1 620.46 393.18 A5.91 5.91 0 0 1 620.46 403.93 A5.91 5.91 0 1 1 613.90 413.56 A5.91 5.91 0 0 1 605.70 413.56 A5.91 5.91 0 1 1 599.14 403.93 A5.91 5.91 0 0 1 599.14 393.18Z" stroke="#e2383f" stroke-width="1.1" fill="none" />
<path d="M617 412 L632 428 H640" stroke="#e2383f" stroke-width="1.1" fill="none" />
<text x="640.6" y="420" font-size="11" fill="#e2383f" textLength="36" lengthAdjust="spacingAndGlyphs">Provide</text>
<text x="640.6" y="431.5" font-size="11" fill="#e2383f" textLength="61" lengthAdjust="spacingAndGlyphs">mullion detail</text>
<text x="938.6" y="392.5" font-size="11" fill="#e2383f" textLength="94" lengthAdjust="spacingAndGlyphs">Stair doors to be fire</text>
<text x="938.6" y="404.6" font-size="11" fill="#e2383f" textLength="101" lengthAdjust="spacingAndGlyphs">rated assemblies, typ.</text>
<path d="M988 409 V432" stroke="#e2383f" stroke-width="1.1" fill="none" />
<path d="M942.48 444.50 A6.05 6.05 0 1 1 950.00 435.59 A6.05 6.05 0 0 1 960.00 435.59 A6.05 6.05 0 0 1 970.00 435.59 A6.05 6.05 0 1 1 977.52 444.50 A6.05 6.05 0 0 1 977.52 455.50 A6.05 6.05 0 0 1 977.52 466.50 A6.05 6.05 0 1 1 970.00 475.41 A6.05 6.05 0 0 1 960.00 475.41 A6.05 6.05 0 0 1 950.00 475.41 A6.05 6.05 0 1 1 942.48 466.50 A6.05 6.05 0 0 1 942.48 455.50 A6.05 6.05 0 0 1 942.48 444.50Z" stroke="#e2383f" stroke-width="1.1" fill="none" />
<path d="M562 502 H553 L474 452" stroke="#ef9548" stroke-width="1.1" fill="none" />
<path d="M480.9 453.1 L474 452 L478.0 457.8" stroke="#ef9548" stroke-width="1" fill="none" />
<path d="M402 583.6 H423.5" stroke="#2b3fc8" stroke-width="1.1" fill="none" />
<path d="M1130 426.8 H1115 V442.5" stroke="#2b3fc8" stroke-width="1.1" fill="none" />
<path d="M1352.8 408.6 V431" stroke="#2b3fc8" stroke-width="1.1" fill="none" />
<path d="M1816 423 H1830" stroke="#ef9548" stroke-width="1.1" fill="none" />
<path d="M1615.3 183 V209 L1649 280" stroke="#ef9548" stroke-width="1.1" fill="none" />
<text x="1174" y="683" font-size="11" fill="#e2383f" textLength="66" lengthAdjust="spacingAndGlyphs">Verify 60in clr.</text>
<text x="1174" y="694.5" font-size="11" fill="#e2383f" textLength="67" lengthAdjust="spacingAndGlyphs">radius for ADA</text>
<path d="M1106 609 L1166.7 687 H1174" stroke="#e2383f" stroke-width="1.1" fill="none" />
<path d="M1111.2 611.9 L1106 609 L1107.6 614.8" stroke="#e2383f" stroke-width="1" fill="none" />
<path d="M678 763.8 H736" stroke="#ef9548" stroke-width="1.3" fill="none" stroke-dasharray="6 3"/>
<text x="707" y="767" font-size="8" fill="#ef9548" text-anchor="middle">?</text>
<path d="M674 763.8 L683 759.3 V768.3Z M740 763.8 L731 759.3 V768.3Z" fill="#ef9548"/>
<path d="M428 738.5 H437.5 L460.5 710.6" stroke="#ef9548" stroke-width="1.1" fill="none" />
<path d="M458.5 717.3 L460.5 710.6 L454.3 713.8" stroke="#ef9548" stroke-width="1" fill="none" />
<path d="M303 856.8H309M303 863.8H309M306 856.8V863.8" stroke="#111" stroke-width="1.2" fill="none" />
<path d="M503.5 856.8H509.5M503.5 863.8H509.5M506.5 856.8V863.8" stroke="#111" stroke-width="1.2" fill="none" />
<path d="M326 873 L403 920 L485 873 M403 920 V938" stroke="#ef9548" stroke-width="1.1" fill="none" />
<path d="M331.9 873.9 L326 873 L329.5 877.9" stroke="#ef9548" stroke-width="1" fill="none" />
<path d="M481.4 877.8 L485 873 L479.0 873.7" stroke="#ef9548" stroke-width="1" fill="none" />
<path d="M1075 885 L1103 928 H1118" stroke="#2b3fc8" stroke-width="1.1" fill="none" />
<path d="M753.5 646.5 L747.3 640.2 Q746.3 638.2 748.6 637.4 L751.4 639.2 L750.6 632.2 Q751.2 630 753.2 630.9 L754.2 636 L754.6 630.4 Q755.5 628.6 757.1 630.1 L757.2 636 L758.8 631.6 Q760.1 630.6 761.1 632 L759.9 637 L762 634.6 Q763.6 634 763.3 636 L759.6 645.4 Q759.1 646.6 757.5 646.6Z" fill="#fff" stroke="#111" stroke-width="1.15" stroke-linejoin="round"/>
<circle cx="769" cy="644.8" r="3.3" fill="none" stroke="#111" stroke-width="1.2"/><path d="M771.4 647.3 L775.5 651.5" stroke="#111" stroke-width="1.3"/>
<g style="mix-blend-mode:multiply"><path d="M876 245 H1106 V362 L898 377.6 L876 379Z" fill="#68d18b"/><path d="M1409 245 H1541.5 V380 L1420 370.5 L1409 370Z" fill="#68d18b"/><path d="M739.5 745 Q739.5 731 753 731.4 L860 737.7 Q874.5 738 874.5 752 V874 H739.5Z" fill="#d6d6f9"/><path d="M1541.6 752 Q1541.6 738 1556 737.7 L1660 729.3 Q1675.5 729 1675.5 744 V874 H1541.6Z" fill="#d6d6f9"/><path d="M1648.34 290.25 A6.66 6.66 0 1 1 1658.35 282.13 A6.66 6.66 0 0 1 1670.45 282.13 A6.66 6.66 0 0 1 1682.55 282.13 A6.66 6.66 0 1 1 1692.56 290.25 A6.66 6.66 0 0 1 1692.56 300.95 A6.66 6.66 0 0 1 1692.56 311.65 A6.66 6.66 0 0 1 1692.56 322.35 A6.66 6.66 0 0 1 1692.56 333.05 A6.66 6.66 0 1 1 1682.55 341.17 A6.66 6.66 0 0 1 1670.45 341.17 A6.66 6.66 0 0 1 1658.35 341.17 A6.66 6.66 0 1 1 1648.34 333.05 A6.66 6.66 0 0 1 1648.34 322.35 A6.66 6.66 0 0 1 1648.34 311.65 A6.66 6.66 0 0 1 1648.34 300.95 A6.66 6.66 0 0 1 1648.34 290.25Z" fill="#fff38a"/><path d="M294.92 851.35 A6.13 6.13 0 1 1 303.97 843.75 A6.13 6.13 0 0 1 315.12 843.75 A6.13 6.13 0 1 1 324.18 851.35 A6.13 6.13 0 0 1 324.18 861.45 A6.13 6.13 0 1 1 315.12 869.05 A6.13 6.13 0 0 1 303.97 869.05 A6.13 6.13 0 1 1 294.92 861.45 A6.13 6.13 0 0 1 294.92 851.35Z" fill="#fff38a"/><path d="M489.81 850.53 A6.11 6.11 0 1 1 498.35 842.66 A6.11 6.11 0 0 1 509.45 842.66 A6.11 6.11 0 1 1 517.99 850.53 A6.11 6.11 0 0 1 517.99 861.17 A6.11 6.11 0 1 1 509.45 869.04 A6.11 6.11 0 0 1 498.35 869.04 A6.11 6.11 0 1 1 489.81 861.17 A6.11 6.11 0 0 1 489.81 850.53Z" fill="#fff38a"/><path d="M314.4 500.3 A5.60 5.60 0 0 1 324.8 500.3 A5.60 5.60 0 0 1 335.2 500.3 A5.60 5.60 0 0 1 345.7 500.3 A5.60 5.60 0 0 1 356.1 500.3 A5.60 5.60 0 0 1 366.5 500.3 A5.60 5.60 0 0 1 376.9 500.3 A5.60 5.60 0 0 1 387.4 500.3 A5.60 5.60 0 0 1 397.8 500.3 A5.76 5.76 0 0 1 397.8 511.8 A5.75 5.75 0 0 1 397.8 523.3 A5.76 5.76 0 0 1 397.8 534.8 A5.76 5.76 0 0 1 397.8 546.3 A5.76 5.76 0 0 1 397.8 557.8 A5.76 5.76 0 0 1 397.8 569.2 A5.76 5.76 0 0 1 397.8 580.7 A5.76 5.76 0 0 1 397.8 592.2 A5.76 5.76 0 0 1 397.8 603.7 A5.76 5.76 0 0 1 397.8 615.2 A5.60 5.60 0 0 1 387.4 615.2 A5.60 5.60 0 0 1 376.9 615.2 A5.60 5.60 0 0 1 366.5 615.2 A5.60 5.60 0 0 1 356.1 615.2 A5.60 5.60 0 0 1 345.7 615.2 A5.60 5.60 0 0 1 335.2 615.2 A5.60 5.60 0 0 1 324.8 615.2 A5.60 5.60 0 0 1 314.4 615.2 A5.76 5.76 0 0 1 314.4 603.7 A5.76 5.76 0 0 1 314.4 592.2 A5.76 5.76 0 0 1 314.4 580.7 A5.76 5.76 0 0 1 314.4 569.2 A5.76 5.76 0 0 1 314.4 557.8 A5.76 5.76 0 0 1 314.4 546.3 A5.76 5.76 0 0 1 314.4 534.8 A5.76 5.76 0 0 1 314.4 523.3 A5.75 5.75 0 0 1 314.4 511.8 A5.76 5.76 0 0 1 314.4 500.3Z" fill="#c5f5fb"/><path d="M1072.5 446.5 A6.05 6.05 0 0 1 1084.6 446.5 A6.05 6.05 0 0 1 1096.7 446.5 A6.05 6.05 0 0 1 1108.7 446.5 A6.05 6.05 0 0 1 1120.8 446.5 A5.60 5.60 0 0 1 1120.8 457.3 A5.60 5.60 0 0 1 1120.8 468.0 A5.60 5.60 0 0 1 1120.8 478.8 A5.60 5.60 0 0 1 1120.8 489.6 A5.60 5.60 0 0 1 1120.8 500.3 A5.60 5.60 0 0 1 1120.8 511.1 A5.60 5.60 0 0 1 1120.8 521.9 A5.60 5.60 0 0 1 1120.8 532.7 A5.60 5.60 0 0 1 1120.8 543.4 A5.60 5.60 0 0 1 1120.8 554.2 A5.60 5.60 0 0 1 1120.8 565.0 A5.60 5.60 0 0 1 1120.8 575.7 A5.60 5.60 0 0 1 1120.8 586.5 A6.05 6.05 0 0 1 1108.7 586.5 A6.05 6.05 0 0 1 1096.7 586.5 A6.05 6.05 0 0 1 1084.6 586.5 A6.05 6.05 0 0 1 1072.5 586.5 A5.60 5.60 0 0 1 1072.5 575.7 A5.60 5.60 0 0 1 1072.5 565.0 A5.60 5.60 0 0 1 1072.5 554.2 A5.60 5.60 0 0 1 1072.5 543.4 A5.60 5.60 0 0 1 1072.5 532.7 A5.60 5.60 0 0 1 1072.5 521.9 A5.60 5.60 0 0 1 1072.5 511.1 A5.60 5.60 0 0 1 1072.5 500.3 A5.60 5.60 0 0 1 1072.5 489.6 A5.60 5.60 0 0 1 1072.5 478.8 A5.60 5.60 0 0 1 1072.5 468.0 A5.60 5.60 0 0 1 1072.5 457.3 A5.60 5.60 0 0 1 1072.5 446.5Z" fill="#c5f5fb"/><path d="M1289.5 436 A5.60 5.60 0 0 1 1300.4 436.0 A5.60 5.60 0 0 1 1311.3 436.0 A5.60 5.60 0 0 1 1322.2 436.0 A5.60 5.60 0 0 1 1333.1 436.0 A5.60 5.60 0 0 1 1344.0 436.0 A5.60 5.60 0 0 1 1354.9 436.0 A5.60 5.60 0 0 1 1365.8 436.0 A5.60 5.60 0 0 1 1376.8 436.0 A5.60 5.60 0 0 1 1387.7 436.0 A5.60 5.60 0 0 1 1398.6 436.0 A5.60 5.60 0 0 1 1409.5 436.0 A5.60 5.60 0 0 1 1420.4 436.0 A5.60 5.60 0 0 1 1431.3 436.0 A5.60 5.60 0 0 1 1442.2 436.0 A5.60 5.60 0 0 1 1453.1 436.0 A5.60 5.60 0 0 1 1464.0 436.0 A5.60 5.60 0 0 1 1464.0 447.0 A5.60 5.60 0 0 1 1464.0 458.1 A5.60 5.60 0 0 1 1464.0 469.1 A5.60 5.60 0 0 1 1464.0 480.1 A5.60 5.60 0 0 1 1464.0 491.2 A5.60 5.60 0 0 1 1464.0 502.2 A5.60 5.60 0 0 1 1464.0 513.2 A5.60 5.60 0 0 1 1464.0 524.3 A5.60 5.60 0 0 1 1464.0 535.3 A5.60 5.60 0 0 1 1464.0 546.4 A5.60 5.60 0 0 1 1464.0 557.4 A5.60 5.60 0 0 1 1464.0 568.4 A5.60 5.60 0 0 1 1464.0 579.5 A5.60 5.60 0 0 1 1464.0 590.5 A5.60 5.60 0 0 1 1453.1 590.5 A5.60 5.60 0 0 1 1442.2 590.5 A5.60 5.60 0 0 1 1431.3 590.5 A5.60 5.60 0 0 1 1420.4 590.5 A5.60 5.60 0 0 1 1409.5 590.5 A5.60 5.60 0 0 1 1398.6 590.5 A5.60 5.60 0 0 1 1387.7 590.5 A5.60 5.60 0 0 1 1376.8 590.5 A5.60 5.60 0 0 1 1365.8 590.5 A5.60 5.60 0 0 1 1354.9 590.5 A5.60 5.60 0 0 1 1344.0 590.5 A5.60 5.60 0 0 1 1333.1 590.5 A5.60 5.60 0 0 1 1322.2 590.5 A5.60 5.60 0 0 1 1311.3 590.5 A5.60 5.60 0 0 1 1300.4 590.5 A5.60 5.60 0 0 1 1289.5 590.5 A5.60 5.60 0 0 1 1289.5 579.5 A5.60 5.60 0 0 1 1289.5 568.4 A5.60 5.60 0 0 1 1289.5 557.4 A5.60 5.60 0 0 1 1289.5 546.4 A5.60 5.60 0 0 1 1289.5 535.3 A5.60 5.60 0 0 1 1289.5 524.3 A5.60 5.60 0 0 1 1289.5 513.2 A5.60 5.60 0 0 1 1289.5 502.2 A5.60 5.60 0 0 1 1289.5 491.2 A5.60 5.60 0 0 1 1289.5 480.1 A5.60 5.60 0 0 1 1289.5 469.1 A5.60 5.60 0 0 1 1289.5 458.1 A5.60 5.60 0 0 1 1289.5 447.0 A5.60 5.60 0 0 1 1289.5 436.0Z" fill="#c5f5fb"/><path d="M996 793.5 A5.63 5.63 0 0 1 1007.2 793.5 A5.63 5.63 0 0 1 1018.5 793.5 A5.63 5.63 0 0 1 1029.8 793.5 A5.63 5.63 0 0 1 1041.0 793.5 A5.63 5.63 0 0 1 1052.2 793.5 A5.63 5.63 0 0 1 1063.5 793.5 A5.63 5.63 0 0 1 1074.8 793.5 A5.63 5.63 0 0 1 1086.0 793.5 A5.76 5.76 0 0 1 1086.0 805.0 A5.76 5.76 0 0 1 1086.0 816.5 A5.76 5.76 0 0 1 1086.0 828.0 A5.76 5.76 0 0 1 1086.0 839.5 A5.76 5.76 0 0 1 1086.0 851.0 A5.76 5.76 0 0 1 1086.0 862.5 A5.76 5.76 0 0 1 1086.0 874.0 A5.76 5.76 0 0 1 1086.0 885.5 A5.63 5.63 0 0 1 1074.8 885.5 A5.63 5.63 0 0 1 1063.5 885.5 A5.63 5.63 0 0 1 1052.2 885.5 A5.63 5.63 0 0 1 1041.0 885.5 A5.63 5.63 0 0 1 1029.8 885.5 A5.63 5.63 0 0 1 1018.5 885.5 A5.63 5.63 0 0 1 1007.2 885.5 A5.63 5.63 0 0 1 996.0 885.5 A5.76 5.76 0 0 1 996.0 874.0 A5.76 5.76 0 0 1 996.0 862.5 A5.76 5.76 0 0 1 996.0 851.0 A5.76 5.76 0 0 1 996.0 839.5 A5.76 5.76 0 0 1 996.0 828.0 A5.76 5.76 0 0 1 996.0 816.5 A5.76 5.76 0 0 1 996.0 805.0 A5.76 5.76 0 0 1 996.0 793.5Z" fill="#c5f5fb"/><rect x="406" y="178" width="81" height="16.5" fill="#fbf78e"/><rect x="562" y="496" width="63" height="12.399999999999977" fill="#fbf78e"/><rect x="423.5" y="571.2" width="94.79999999999995" height="25.09999999999991" fill="#c2f3fa"/><rect x="1130" y="414.3" width="94" height="25.099999999999966" fill="#c2f3fa"/><rect x="1305.7" y="382.9" width="94.09999999999991" height="25.700000000000045" fill="#c2f3fa"/><rect x="1737" y="411.2" width="79" height="24.600000000000023" fill="#fbf78e"/><rect x="332" y="723" width="96" height="31" fill="#fbf78e"/><rect x="370.8" y="938" width="63.19999999999999" height="22" fill="#fbf78e"/><rect x="1118" y="910" width="93.40000000000009" height="36.299999999999955" fill="#c2f3fa"/></g>
<text x="896" y="351.5" font-size="13" fill="#ffffff" fill-opacity="0.85" font-weight="bold">L = 106'-9"</text><text x="898" y="367" font-size="13" fill="#ffffff" fill-opacity="0.85" font-weight="bold">A = 649 sf</text><text x="1436" y="347" font-size="13" fill="#ffffff" fill-opacity="0.85" font-weight="bold">L = 77'-10"</text><text x="1437" y="363" font-size="13" fill="#ffffff" fill-opacity="0.85" font-weight="bold">A = 378 sf</text>
<text x="409" y="190.43" font-size="11.5" fill="#1a1a1a" textLength="78" lengthAdjust="spacingAndGlyphs">Provide wall type</text><text x="564.5" y="507.52" font-size="11" fill="#1a1a1a" textLength="57" lengthAdjust="spacingAndGlyphs">Provide RCP</text><text x="427.0" y="582.49" font-size="9.5" fill="#222" textLength="68" lengthAdjust="spacingAndGlyphs">Is power required</text><text x="427.0" y="592.49" font-size="9.5" fill="#222" textLength="21" lengthAdjust="spacingAndGlyphs">here?</text><text x="1133" y="425.09000000000003" font-size="9.5" fill="#222" textLength="80" lengthAdjust="spacingAndGlyphs">Verify all ducting will</text><text x="1133" y="435.09000000000003" font-size="9.5" fill="#222" textLength="60" lengthAdjust="spacingAndGlyphs">fit in this chase</text><text x="1308.7" y="393.69" font-size="9.5" fill="#222" textLength="87" lengthAdjust="spacingAndGlyphs">Provide enlarged plan</text><text x="1308.7" y="403.69" font-size="9.5" fill="#222" textLength="61" lengthAdjust="spacingAndGlyphs">for equip. layout</text><text x="1739.5" y="421.9" font-size="10" fill="#1a1a1a" textLength="76" lengthAdjust="spacingAndGlyphs">Provide detail for</text><text x="1739.5" y="433.4" font-size="10" fill="#1a1a1a" textLength="70" lengthAdjust="spacingAndGlyphs">corner condition</text><text x="337" y="736.61" font-size="10.5" fill="#1a1a1a" textLength="81" lengthAdjust="spacingAndGlyphs">Provide details on</text><text x="337" y="748.61" font-size="10.5" fill="#1a1a1a" textLength="79" lengthAdjust="spacingAndGlyphs">flooring transition</text><text x="373.3" y="949.11" font-size="10.5" fill="#1a1a1a" textLength="58" lengthAdjust="spacingAndGlyphs">Column wrap</text><text x="373.3" y="960.61" font-size="10.5" fill="#1a1a1a" textLength="36" lengthAdjust="spacingAndGlyphs">finish?</text><text x="1121.5" y="921.29" font-size="9.5" fill="#222" textLength="47" lengthAdjust="spacingAndGlyphs">Provide AV</text><text x="1121.5" y="931.49" font-size="9.5" fill="#222" textLength="68" lengthAdjust="spacingAndGlyphs">requirements for</text><text x="1121.5" y="941.6899999999999" font-size="9.5" fill="#222" textLength="59" lengthAdjust="spacingAndGlyphs">meeting rooms</text></g></svg>
<!-- scrollbar -->
<div class="a" style="left:1828px;top:183px;width:20px;height:774px;background:#f0f0f0"></div>
<div class="a" style="left:1829px;top:390px;width:17px;height:350px;background:#cdcdcd"></div>

<!-- right strips -->
<div class="a" style="left:1848px;top:149px;width:65px;height:844px;background:#1c1c1e"></div>
<div class="a" style="left:1848px;top:149px;width:35px;height:36px;background:#0f5a92"></div>

<!-- bottom toolbar -->
<div class="a" style="left:286px;top:957px;width:1562px;height:35px;background:#1f1f21"></div>
<div class="a" style="left:508px;top:957px;width:36px;height:35px;background:#0f5a92"></div>
<div class="t" style="left:662px;top:967px;font-size:15px;color:#e8e8e8">44.52%</div>
<div class="t" style="left:937px;top:966px;font-size:15.4px;color:#e8e8e8">Floor Plan (1 of 1)</div>
<!-- status bar -->
<div class="a" style="left:0;top:992px;width:1913px;height:3px;background:#0b0b0c"></div>
<div class="a" style="left:0;top:995px;width:1913px;height:28px;background:#1c1c1e"></div>
<div class="a" style="left:1308px;top:995px;width:35px;height:28px;background:#0f5a92"></div>
<div class="a" style="left:1415px;top:995px;width:36px;height:28px;background:#0f5a92"></div>
<div class="t" style="left:1px;top:1004px;font-size:15px;color:#e6e6e6">Ready</div>
<div class="t" style="left:1497px;top:1005px;font-size:15px;color:#e6e6e6">3.75in = 30ft' in"</div>
<div class="t" style="left:1638px;top:1005px;font-size:14.5px;color:#e6e6e6">42.00 x 30.00 in</div>
<div class="t" style="left:1798px;top:1005px;font-size:14.2px;color:#e6e6e6">(12.64, 16.08)</div>
<svg width="1913" height="1023" viewBox="0 0 1913 1023" style="position:absolute;left:0;top:0" font-family="Liberation Sans, sans-serif"><rect x="6" y="28" width="2" height="2" fill="#5f5f5f"/>
<rect x="6" y="32" width="2" height="2" fill="#5f5f5f"/>
<rect x="6" y="36" width="2" height="2" fill="#5f5f5f"/>
<rect x="6" y="40" width="2" height="2" fill="#5f5f5f"/>
<rect x="6" y="44" width="2" height="2" fill="#5f5f5f"/>
<rect x="6" y="48" width="2" height="2" fill="#5f5f5f"/>
<rect x="6" y="52" width="2" height="2" fill="#5f5f5f"/>
<rect x="6" y="56" width="2" height="2" fill="#5f5f5f"/>
<path d="M24 37 A8 8 0 1 1 29 50" stroke="#6b6b6b" stroke-width="1.4" fill="none" />
<path d="M21 34 L23 39 L28 37" stroke="#6b6b6b" stroke-width="1.4" fill="none" />
<path d="M51 41.0 L55 45.0 L59 41.0" stroke="#6b6b6b" stroke-width="1.2" fill="none"/>
<path d="M86 37 A8 8 0 1 0 81 50" stroke="#6b6b6b" stroke-width="1.4" fill="none" />
<path d="M89 34 L87 39 L82 37" stroke="#6b6b6b" stroke-width="1.4" fill="none" />
<path d="M100 41.0 L104 45.0 L108 41.0" stroke="#6b6b6b" stroke-width="1.2" fill="none"/>
<path d="M122 36 L138 46 M122 48 L138 38" stroke="#6b6b6b" stroke-width="1.3" fill="none" />
<circle cx="123" cy="35" r="3" stroke="#6b6b6b" stroke-width="1.3" fill="none"/><circle cx="123" cy="49" r="3" stroke="#6b6b6b" stroke-width="1.3" fill="none"/>
<path d="M158 50 V33 H166 M162 37 H170 L174 41 V51 H162Z" stroke="#6b6b6b" stroke-width="1.2" fill="none" />
<path d="M194 36 H198 V34 H204 V36 H208 V40 M194 36 V51 H201 M201 41 H207 L210 44 V51 H201Z" stroke="#6b6b6b" stroke-width="1.2" fill="none" />
<path d="M230 44 L238 52 L246 42 L240 36Z M243 39 L249 31" stroke="#6b6b6b" stroke-width="1.3" fill="none" />
<path d="M266 35 L280 49 M280 35 L266 49" stroke="#6b6b6b" stroke-width="1.3" fill="none" />
<path d="M303 49 L306 38 H314 L317 49Z M308 38 A2 2 0 1 1 312 38" stroke="#d9b93a" stroke-width="1.5" fill="none" />
<rect x="302" y="50" width="17" height="1.5" fill="#f0f0f0"/>
<path d="M341 34 V41 M337 37 H345" stroke="#f0f0f0" stroke-width="1.2" fill="none" />
<path d="M344 41 H356 V50 H341 V41" stroke="#f0f0f0" stroke-width="1.2" fill="none" stroke-dasharray="2 2"/>
<rect x="368" y="28" width="2" height="2" fill="#5f5f5f"/>
<rect x="368" y="32" width="2" height="2" fill="#5f5f5f"/>
<rect x="368" y="36" width="2" height="2" fill="#5f5f5f"/>
<rect x="368" y="40" width="2" height="2" fill="#5f5f5f"/>
<rect x="368" y="44" width="2" height="2" fill="#5f5f5f"/>
<rect x="368" y="48" width="2" height="2" fill="#5f5f5f"/>
<rect x="368" y="52" width="2" height="2" fill="#5f5f5f"/>
<rect x="368" y="56" width="2" height="2" fill="#5f5f5f"/>
<path d="M393 33 H402 V43 H393Z" stroke="#f0f0f0" stroke-width="1.3" fill="none" />
<path d="M383 44 H394 V51 H383Z" stroke="#f0f0f0" stroke-width="1.2" fill="none" stroke-dasharray="1.5 1.5"/>
<path d="M390 34 Q386 35 386 40 M384 38 L386 41 L389 38" stroke="#d9b93a" stroke-width="1.4" fill="none" />
<path d="M420 33 H429 V43 H420Z" stroke="#f0f0f0" stroke-width="1.3" fill="none" />
<path d="M427 44 H438 V51 H427Z" stroke="#f0f0f0" stroke-width="1.2" fill="none" stroke-dasharray="1.5 1.5"/>
<path d="M432 34 Q436 35 436 40 M434 38 L436 41 L439 38" stroke="#d9b93a" stroke-width="1.4" fill="none" />
<rect x="452" y="28" width="2" height="2" fill="#5f5f5f"/>
<rect x="452" y="32" width="2" height="2" fill="#5f5f5f"/>
<rect x="452" y="36" width="2" height="2" fill="#5f5f5f"/>
<rect x="452" y="40" width="2" height="2" fill="#5f5f5f"/>
<rect x="452" y="44" width="2" height="2" fill="#5f5f5f"/>
<rect x="452" y="48" width="2" height="2" fill="#5f5f5f"/>
<rect x="452" y="52" width="2" height="2" fill="#5f5f5f"/>
<rect x="452" y="56" width="2" height="2" fill="#5f5f5f"/>
<path d="M470 47 L474 43 M468 45 A4 4 0 0 0 474 51 L477 48 M476 42 L479 39 A4 4 0 0 1 485 45 L482 48 M478 44 L474 48" stroke="#7fc24a" stroke-width="1.6" fill="none" />
<path d="M505 49 H520 V45 H515 V40 A3.5 3.5 0 1 0 510 40 V45 H505Z M505 52 H520" stroke="#f0f0f0" stroke-width="1.3" fill="none" />
<path d="M526 41.0 L530 45.0 L534 41.0" stroke="#f0f0f0" stroke-width="1.2" fill="none"/>
<path d="M554 41 V49 A3 3 0 0 0 560 49 V37 A4.5 4.5 0 0 0 551 37 V47" stroke="#f0f0f0" stroke-width="1.3" fill="none" />
<path d="M584 33 H602 V51 H584Z" stroke="#f0f0f0" stroke-width="1.2" fill="none" stroke-dasharray="2 2"/>
<path d="M589 43 L595 37 A2.5 2.5 0 0 1 599 41 L593 47 A2.5 2.5 0 0 1 589 43Z" stroke="#f0f0f0" stroke-width="1.3" fill="none" />
<path d="M620 33 H638 V51 H620Z" stroke="#f0f0f0" stroke-width="1.2" fill="none" stroke-dasharray="2 2"/>
<path d="M625 37 L633 47 M633 37 L625 47" stroke="#f0f0f0" stroke-width="1.2" fill="none" />
<circle cx="625" cy="47" r="2" stroke="#f0f0f0" stroke-width="1.1" fill="none"/><circle cx="633" cy="47" r="2" stroke="#f0f0f0" stroke-width="1.1" fill="none"/>
<rect x="653" y="28" width="2" height="2" fill="#5f5f5f"/>
<rect x="653" y="32" width="2" height="2" fill="#5f5f5f"/>
<rect x="653" y="36" width="2" height="2" fill="#5f5f5f"/>
<rect x="653" y="40" width="2" height="2" fill="#5f5f5f"/>
<rect x="653" y="44" width="2" height="2" fill="#5f5f5f"/>
<rect x="653" y="48" width="2" height="2" fill="#5f5f5f"/>
<rect x="653" y="52" width="2" height="2" fill="#5f5f5f"/>
<rect x="653" y="56" width="2" height="2" fill="#5f5f5f"/>
<rect x="661.5" y="32.5" width="94" height="25" rx="2" fill="none" stroke="#4a4a4a"/>
<rect x="738" y="33" width="1" height="24" fill="#4a4a4a"/>
<path d="M743 44.0 L747 48.0 L751 44.0" stroke="#bdbdbd" stroke-width="1.2" fill="none"/>
<rect x="762.5" y="32.5" width="95" height="25" rx="2" fill="none" stroke="#4a4a4a"/>
<rect x="838" y="33" width="1" height="24" fill="#4a4a4a"/>
<path d="M843 44.0 L847 48.0 L851 44.0" stroke="#bdbdbd" stroke-width="1.2" fill="none"/>
<text x="768" y="50" font-size="15" fill="#5a5a5a">12</text>
<rect x="861" y="33" width="1" height="24" fill="#4a4a4a"/>
<path d="M877 47 L882 35 L887 47 M879 43 H885" stroke="#6b6b6b" stroke-width="1.5" fill="none" />
<rect x="874" y="49.5" width="17" height="2" fill="#6b6b6b"/>
<path d="M896 43.0 L900 47.0 L904 43.0" stroke="#6b6b6b" stroke-width="1.2" fill="none"/>
<rect x="913" y="33" width="1" height="24" fill="#4a4a4a"/>
<text x="933" y="50" font-size="15" font-weight="bold" fill="#6b6b6b" text-anchor="middle">B</text>
<text x="968" y="50" font-size="15" font-style="italic" fill="#6b6b6b" text-anchor="middle">I</text>
<path d="M998 36 H1012 M1005 36 V49 M998 52 H1012" stroke="#6b6b6b" stroke-width="1.5" fill="none" />
<rect x="1027" y="33" width="1" height="24" fill="#4a4a4a"/>
<rect x="1038" y="37.0" width="16" height="1.2" fill="#6b6b6b"/>
<rect x="1038" y="40.5" width="10" height="1.2" fill="#6b6b6b"/>
<rect x="1038" y="44.0" width="16" height="1.2" fill="#6b6b6b"/>
<rect x="1038" y="47.5" width="10" height="1.2" fill="#6b6b6b"/>
<rect x="1074.0" y="37.0" width="16" height="1.2" fill="#6b6b6b"/>
<rect x="1077.0" y="40.5" width="10" height="1.2" fill="#6b6b6b"/>
<rect x="1074.0" y="44.0" width="16" height="1.2" fill="#6b6b6b"/>
<rect x="1077.0" y="47.5" width="10" height="1.2" fill="#6b6b6b"/>
<rect x="1111" y="37.0" width="16" height="1.2" fill="#6b6b6b"/>
<rect x="1117" y="40.5" width="10" height="1.2" fill="#6b6b6b"/>
<rect x="1111" y="44.0" width="16" height="1.2" fill="#6b6b6b"/>
<rect x="1117" y="47.5" width="10" height="1.2" fill="#6b6b6b"/>
<rect x="6" y="71" width="2" height="2" fill="#5f5f5f"/>
<rect x="6" y="75" width="2" height="2" fill="#5f5f5f"/>
<rect x="6" y="79" width="2" height="2" fill="#5f5f5f"/>
<rect x="6" y="83" width="2" height="2" fill="#5f5f5f"/>
<rect x="6" y="87" width="2" height="2" fill="#5f5f5f"/>
<rect x="6" y="91" width="2" height="2" fill="#5f5f5f"/>
<rect x="6" y="95" width="2" height="2" fill="#5f5f5f"/>
<path d="M22 76 V91 L26 87 L33 87Z" stroke="#6b6b6b" stroke-width="1.2" fill="none" />
<path d="M32 89 H38 M35 86 V92" stroke="#6b6b6b" stroke-width="1.1" fill="none" />
<path d="M56 76 V91 L60 87 L67 87Z" stroke="#6b6b6b" stroke-width="1.2" fill="none" />
<path d="M66 91 H72" stroke="#6b6b6b" stroke-width="1.1" fill="none" />
<path d="M92 76 V91 L96 87 L103 87Z" stroke="#6b6b6b" stroke-width="1.2" fill="none" />
<path d="M102 92 L107 87" stroke="#6b6b6b" stroke-width="1.1" fill="none" />
<rect x="125" y="71" width="2" height="2" fill="#5f5f5f"/>
<rect x="125" y="75" width="2" height="2" fill="#5f5f5f"/>
<rect x="125" y="79" width="2" height="2" fill="#5f5f5f"/>
<rect x="125" y="83" width="2" height="2" fill="#5f5f5f"/>
<rect x="125" y="87" width="2" height="2" fill="#5f5f5f"/>
<rect x="125" y="91" width="2" height="2" fill="#5f5f5f"/>
<rect x="125" y="95" width="2" height="2" fill="#5f5f5f"/>
<path d="M141 76 V93 M143 77 H150 V83 H143 M143 86 H157 V92 H143Z" stroke="#6b6b6b" stroke-width="1.2" fill="none" />
<path d="M184 75 V94 M179 77 H189 V83 H179Z M176 86 H192 V92 H176Z" stroke="#6b6b6b" stroke-width="1.2" fill="none" />
<path d="M227 76 V93 M218 77 H225 V83 H218Z M211 86 H225 V92 H211Z" stroke="#6b6b6b" stroke-width="1.2" fill="none" />
<rect x="244" y="75" width="1" height="19" fill="#6b6b6b"/>
<path d="M254 76 H272 M256 78 H261 V94 H256Z M264 78 H270 V85 H264Z" stroke="#6b6b6b" stroke-width="1.2" fill="none" />
<path d="M288 84 H308 M291 76 H296 V93 H291Z M300 80 H306 V88 H300Z" stroke="#6b6b6b" stroke-width="1.2" fill="none" />
<path d="M326 93 H344 M328 76 H333 V91 H328Z M336 84 H342 V91 H336Z" stroke="#6b6b6b" stroke-width="1.2" fill="none" />
<rect x="355" y="75" width="1" height="19" fill="#6b6b6b"/>
<path d="M368 77 H373 V82 H368Z M368 86 H386 V92 H368Z M376 79 H384 M381 76 L384 79 L381 82" stroke="#6b6b6b" stroke-width="1.2" fill="none" />
<path d="M403 76 H408 V94 H403Z M412 87 H418 V93 H412Z M415 84 V76 M412 79 L415 76 L418 79" stroke="#6b6b6b" stroke-width="1.2" fill="none" />
<path d="M448 75 V93 M439 84 H457 M445 78 L448 75 L451 78 M445 90 L448 93 L451 90 M442 81 L439 84 L442 87 M454 81 L457 84 L454 87" stroke="#6b6b6b" stroke-width="1.2" fill="none" />
<circle cx="485" cy="84" r="6" stroke="#6b6b6b" stroke-width="1.2" fill="none"/>
<path d="M485 75 V80 M485 88 V93 M476 84 H481 M489 84 H494 M483 82 H487 V86 H483Z" stroke="#6b6b6b" stroke-width="1.2" fill="none" />
<rect x="506" y="75" width="1" height="19" fill="#6b6b6b"/>
<path d="M515.5 88.5 H519.5 V92.5 H515.5Z M524.5 82.5 H528.5 V86.5 H524.5Z M533.5 76.5 H537.5 V80.5 H533.5Z" stroke="#6b6b6b" stroke-width="1.1" fill="none" />
<path d="M515 79 H531 M521 91 H538" stroke="#6b6b6b" stroke-width="1" fill="none" stroke-dasharray="2 2"/>
<path d="M552.5 76.5 H556.5 V80.5 H552.5Z M558.5 84.5 H562.5 V88.5 H558.5Z M565.5 91.5 H569.5 V95.5 H565.5Z" stroke="#6b6b6b" stroke-width="1.1" fill="none" />
<path d="M554.5 83 V95 M567.5 76 V89" stroke="#6b6b6b" stroke-width="1" fill="none" stroke-dasharray="2 2"/>
<rect x="583" y="75" width="1" height="19" fill="#6b6b6b"/>
<path d="M596 77 V92 L602 84.5Z M612 77 V92 L606 84.5Z M604 75 V94" stroke="#6b6b6b" stroke-width="1.2" fill="none" />
<path d="M633 76 H649 L641 83Z M633 93 H649 L641 86Z M632 84.5 H650" stroke="#6b6b6b" stroke-width="1.2" fill="none" />
<rect x="663" y="71" width="2" height="2" fill="#5f5f5f"/>
<rect x="663" y="75" width="2" height="2" fill="#5f5f5f"/>
<rect x="663" y="79" width="2" height="2" fill="#5f5f5f"/>
<rect x="663" y="83" width="2" height="2" fill="#5f5f5f"/>
<rect x="663" y="87" width="2" height="2" fill="#5f5f5f"/>
<rect x="663" y="91" width="2" height="2" fill="#5f5f5f"/>
<rect x="663" y="95" width="2" height="2" fill="#5f5f5f"/>
<path d="M682 85 L688 79 L694 85 L688 91Z M691 76 A3 3 0 0 1 693 81" stroke="#6b6b6b" stroke-width="1.3" fill="none" />
<rect x="679" y="93" width="16" height="2" fill="#6b6b6b"/>
<path d="M702 84.0 L706 88.0 L710 84.0" stroke="#6b6b6b" stroke-width="1.2" fill="none"/>
<circle cx="731" cy="82" r="6" stroke="#6b6b6b" stroke-width="1.2" fill="none"/><circle cx="736" cy="88" r="6" stroke="#6b6b6b" stroke-width="1.2" fill="none"/>
<path d="M747 84.0 L751 88.0 L755 84.0" stroke="#6b6b6b" stroke-width="1.2" fill="none"/>
<path d="M770 77 L786 93 M775 77 L786 88 M780 77 L786 83 M770 82 L781 93 M770 87 L776 93 M786 77 L770 93 M781 77 L770 88 M776 77 L770 83 M786 82 L775 93 M786 87 L780 93" stroke="#6b6b6b" stroke-width="1.1" fill="none" />
<path d="M792 84.0 L796 88.0 L800 84.0" stroke="#6b6b6b" stroke-width="1.2" fill="none"/>
<rect x="810" y="71" width="2" height="2" fill="#5f5f5f"/>
<rect x="810" y="75" width="2" height="2" fill="#5f5f5f"/>
<rect x="810" y="79" width="2" height="2" fill="#5f5f5f"/>
<rect x="810" y="83" width="2" height="2" fill="#5f5f5f"/>
<rect x="810" y="87" width="2" height="2" fill="#5f5f5f"/>
<rect x="810" y="91" width="2" height="2" fill="#5f5f5f"/>
<rect x="810" y="95" width="2" height="2" fill="#5f5f5f"/>
<path d="M829 85 H888" stroke="#6b6b6b" stroke-width="2" fill="none" />
<path d="M825 85 L833 80 V90Z M892 85 L884 80 V90Z" fill="#6b6b6b"/>
<path d="M912 85 H926" stroke="#6b6b6b" stroke-width="2" fill="none" />
<path d="M909 85 L916 81 V89Z" fill="#6b6b6b"/>
<path d="M932 85.0 L936 89.0 L940 85.0" stroke="#6b6b6b" stroke-width="1.2" fill="none"/>
<path d="M955 85 H969" stroke="#6b6b6b" stroke-width="2" fill="none" />
<path d="M972 85 L965 81 V89Z" fill="#6b6b6b"/>
<path d="M978 85.0 L982 89.0 L986 85.0" stroke="#6b6b6b" stroke-width="1.2" fill="none"/>
<path d="M1000 78 H1016 M1000 82 H1016 M1000 86 H1016 M1000 91 Q1002 89 1004 91 Q1006 93 1008 91 Q1010 89 1012 91 Q1014 93 1016 91" stroke="#6b6b6b" stroke-width="1" fill="none" stroke-dasharray="1.5 1"/>
<path d="M1023 84.0 L1027 88.0 L1031 84.0" stroke="#6b6b6b" stroke-width="1.2" fill="none"/>
<rect x="1040" y="71" width="2" height="2" fill="#5a5a5a"/>
<rect x="1040" y="75" width="2" height="2" fill="#5a5a5a"/>
<rect x="1040" y="79" width="2" height="2" fill="#5a5a5a"/>
<rect x="1040" y="83" width="2" height="2" fill="#5a5a5a"/>
<rect x="1040" y="87" width="2" height="2" fill="#5a5a5a"/>
<rect x="1040" y="91" width="2" height="2" fill="#5a5a5a"/>
<rect x="1040" y="95" width="2" height="2" fill="#5a5a5a"/>
<rect x="1064" y="76" width="9" height="3.5" fill="#f2f2f2"/><rect x="1055" y="82" width="12" height="3.5" fill="#f2f2f2"/>
<path d="M1055 77.5 Q1057 76 1059 77.5 Q1061 79 1063 77.5 M1055 91.5 Q1057 90 1059 91.5" stroke="#f0f0f0" stroke-width="1" fill="none" />
<path d="M1064 93 L1067 84 H1070 L1073 93Z" stroke="#f0f0f0" stroke-width="1.4" fill="none" />
<rect x="1091" y="76" width="18" height="3.5" fill="#f2f2f2"/><rect x="1091" y="82" width="12" height="3.5" fill="#f2f2f2"/><rect x="1091" y="88" width="8" height="3.5" fill="#f2f2f2"/>
<path d="M1101 90 L1104 93 L1109 87" stroke="#d9c24a" stroke-width="1.5" fill="none" />
<rect x="10.5" y="110.5" width="53" height="30.5" rx="3" fill="none" stroke="#454545"/>
<path d="M15 115 H26 L32 121 V137 H15Z M26 115 V121 H32 M20 126 H27 V133 H20Z M22 128 H25 V131 H22Z" stroke="#f0f0f0" stroke-width="1.2" fill="none" />
<path d="M46.5 123.75 L51 128.25 L55.5 123.75" stroke="#f0f0f0" stroke-width="1.2" fill="none"/>
<rect x="338.5" y="110.5" width="31" height="30.5" rx="3" fill="none" stroke="#454545"/>
<path d="M345 116 H356 L362 122 V137 H345Z M356 116 V122 H362" stroke="#f0f0f0" stroke-width="1.2" fill="none" />
<path d="M361 131 V137 M358 134 H364" stroke="#e0b73a" stroke-width="1.3" fill="none" />
<path d="M11 159.5 H23 V177 H11Z M11 168 H23 M15 163 H19 M15 172 H19" stroke="#f0f0f0" stroke-width="1.3" fill="none" />
<path d="M10.5 193.5 H24 V211 H10.5Z M13.5 193.5 V203 L16 200.5 L18.5 203 V193.5" stroke="#f0f0f0" stroke-width="1.3" fill="none" />
<path d="M9.5 228.5 H15.5 V235 H9.5Z M19 228.5 H25.5 V235 H19Z M9.5 238.5 H15.5 V245 H9.5Z M19 238.5 H25.5 V245 H19Z" stroke="#f0f0f0" stroke-width="1.3" fill="none" />
<path d="M8.5 267 H26 V277.5 H8.5Z M14 267 V263.5 H20.5 V267 M8.5 271.5 H26 M15 270 V273 M19.5 270 V273" stroke="#f0f0f0" stroke-width="1.3" fill="none" />
<path d="M10 297 H25 L26 309 H9Z M13 300 H22 V307 H13Z M8 311.5 H27 M8 314.5 H27" stroke="#f0f0f0" stroke-width="1.3" fill="none" />
<path d="M17 333 L26 338 L17 343 L8 338Z M8 342.5 L17 347.5 L26 342.5" stroke="#f0f0f0" stroke-width="1.3" fill="none" />
<path d="M9.5 369.5 H21 V384.5 H9.5Z M12 373.5 H18 M12 377 H16 M12 380.5 H15 M15 382 L25 372 L27 374 L17 384 L14 385Z" stroke="#f0f0f0" stroke-width="1.3" fill="none" />
<path d="M12 414 L14 406 L21 402 L25 406 L21 413 Z M9 418.5 H26 M18 400 L20 397 M16 408 L14 412" stroke="#f0f0f0" stroke-width="1.3" fill="none" />
<rect x="10" y="969" width="2" height="2" fill="#fff"/><rect x="14" y="969" width="11" height="1.6" fill="#fff"/>
<rect x="10" y="974" width="2" height="2" fill="#fff"/><rect x="14" y="974" width="11" height="1.6" fill="#fff"/>
<rect x="10" y="979" width="2" height="2" fill="#fff"/><rect x="14" y="979" width="11" height="1.6" fill="#fff"/>
<path d="M155 167.0 L159 171.0 L163 167.0" stroke="#cfcfcf" stroke-width="1.2" fill="none"/>
<path d="M47 203.0 L51 207.0 L55 203.0" stroke="#bdbdbd" stroke-width="1.2" fill="none"/>
<path d="M47 291.0 L51 295.0 L55 291.0" stroke="#bdbdbd" stroke-width="1.2" fill="none"/>
<path d="M47 405.0 L51 409.0 L55 405.0" stroke="#bdbdbd" stroke-width="1.2" fill="none"/>
<path d="M47 234.0 L51 238.0 L55 234.0" stroke="#bdbdbd" stroke-width="1.2" fill="none"/>
<path d="M258 198 H264 L266 200 H274 V212 H258Z M258 202 H274" stroke="#f0f0f0" stroke-width="1.2" fill="none" />
<path d="M62 229 H68 L70 231 H78 V243 H62Z M62 233 H78" stroke="#e8e8e8" stroke-width="1.2" fill="none" />
<path d="M49 319 L53 323 L49 327" stroke="#bdbdbd" stroke-width="1.2" fill="none"/>
<path d="M66 315 H76 M68 315 V321 L66 324 H76 L74 321 V315 M71 324 V330" stroke="#e8e8e8" stroke-width="1.1" fill="none" />
<path d="M49 345 L53 349 L49 353" stroke="#bdbdbd" stroke-width="1.2" fill="none"/>
<path d="M66 341 H76 M68 341 V347 L66 350 H76 L74 347 V341 M71 350 V356" stroke="#e8e8e8" stroke-width="1.1" fill="none" />
<path d="M49 371 L53 375 L49 379" stroke="#bdbdbd" stroke-width="1.2" fill="none"/>
<path d="M66 367 H76 M68 367 V373 L66 376 H76 L74 373 V367 M71 376 V382" stroke="#e8e8e8" stroke-width="1.1" fill="none" />
<path d="M68 252 H77 L81 256 V270 H68Z" fill="#2f8fd8"/>
<rect x="71" y="256" width="5" height="5" fill="none" stroke="#fff" stroke-width="0.9"/>
<text x="74.5" y="267.5" font-size="4" fill="#fff" text-anchor="middle">PDF</text>
<path d="M68 428 H77 L81 432 V446 H68Z" fill="#2f8fd8"/>
<rect x="71" y="432" width="5" height="5" fill="none" stroke="#fff" stroke-width="0.9"/>
<text x="74.5" y="443.5" font-size="4" fill="#fff" text-anchor="middle">PDF</text>
<path d="M258 400 H276 V415 H258Z M258 404 H276" stroke="#f0f0f0" stroke-width="1.2" fill="none" />
<rect x="261" y="407" width="1.6" height="1.6" fill="#f0f0f0"/>
<rect x="265" y="407" width="1.6" height="1.6" fill="#f0f0f0"/>
<rect x="269" y="407" width="1.6" height="1.6" fill="#f0f0f0"/>
<rect x="273" y="407" width="1.6" height="1.6" fill="#f0f0f0"/>
<rect x="261" y="410" width="1.6" height="1.6" fill="#f0f0f0"/>
<rect x="265" y="410" width="1.6" height="1.6" fill="#f0f0f0"/>
<rect x="269" y="410" width="1.6" height="1.6" fill="#f0f0f0"/>
<rect x="273" y="410" width="1.6" height="1.6" fill="#f0f0f0"/>
<rect x="261" y="413" width="1.6" height="1.6" fill="#f0f0f0"/>
<rect x="265" y="413" width="1.6" height="1.6" fill="#f0f0f0"/>
<rect x="269" y="413" width="1.6" height="1.6" fill="#f0f0f0"/>
<rect x="273" y="413" width="1.6" height="1.6" fill="#f0f0f0"/>
<path d="M261 398 V401 M273 398 V401" stroke="#f0f0f0" stroke-width="1.2" fill="none" />
<path d="M257 437 H261 M261 433 V441 L264 439 H270 V435 H264Z" stroke="#f0f0f0" stroke-width="1.1" fill="none" />
<path d="M441 160 L451 170 M451 160 L441 170" stroke="#e8e8e8" stroke-width="1.4" fill="none" />
<path d="M1825 164.0 L1829 168.0 L1833 164.0" stroke="#e0e0e0" stroke-width="1.2" fill="none"/>
<path d="M1872.31 164.05 L1874.46 164.46 L1874.46 167.54 L1872.31 167.95 L1871.84 169.08 L1873.07 170.89 L1870.89 173.07 L1869.08 171.84 L1867.95 172.31 L1867.54 174.46 L1864.46 174.46 L1864.05 172.31 L1862.92 171.84 L1861.11 173.07 L1858.93 170.89 L1860.16 169.08 L1859.69 167.95 L1857.54 167.54 L1857.54 164.46 L1859.69 164.05 L1860.16 162.92 L1858.93 161.11 L1861.11 158.93 L1862.92 160.16 L1864.05 159.69 L1864.46 157.54 L1867.54 157.54 L1867.95 159.69 L1869.08 160.16 L1870.89 158.93 L1873.07 161.11 L1871.84 162.92Z" fill="none" stroke="#d8f3ff" stroke-width="1.2" stroke-linejoin="round"/>
<circle cx="1866" cy="166" r="4.2" fill="none" stroke="#d8f3ff" stroke-width="1.3"/>
<circle cx="1863.5" cy="198.6" r="6.3" fill="none" stroke="#fff" stroke-width="1.3"/><path d="M1868 203.2 L1875 210" stroke="#fff" stroke-width="1.4"/>
<path d="M1856 231 H1874 V240 H1856Z M1860 231 V235 M1864 231 V236 M1868 231 V235 M1872 231 V236" stroke="#f0f0f0" stroke-width="1.2" fill="none" />
<path d="M1857 268 L1865 263 L1873 266 V274 L1865 279 L1857 276Z M1861 271 H1865 V277" stroke="#f0f0f0" stroke-width="1.2" fill="none" />
<path d="M1865 314 C1858 306 1858 297 1865 297 C1872 297 1872 306 1865 314Z M1857 310 Q1857 316 1865 316 Q1873 316 1873 310" stroke="#f0f0f0" stroke-width="1.2" fill="none" />
<circle cx="1865" cy="303" r="2" fill="none" stroke="#fff" stroke-width="1.1"/>
<rect x="1885" y="157" width="2" height="1.5" fill="#666"/>
<rect x="1889" y="157" width="2" height="1.5" fill="#666"/>
<rect x="1893" y="157" width="2" height="1.5" fill="#666"/>
<rect x="1897" y="157" width="2" height="1.5" fill="#666"/>
<rect x="1901" y="157" width="2" height="1.5" fill="#666"/>
<rect x="1905" y="157" width="2" height="1.5" fill="#666"/>
<rect x="1909" y="157" width="2" height="1.5" fill="#666"/>
<rect x="1892.5" y="170.5" width="17.5" height="17.5" fill="none" stroke="#fff" stroke-width="1.2"/><text x="1901.2" y="184" font-size="11" fill="#fff" text-anchor="middle" font-weight="bold">A</text>
<circle cx="1900.7" cy="215" r="8.8" fill="none" stroke="#fff" stroke-width="1.3"/><text x="1900.7" y="219.5" font-size="11" fill="#fff" text-anchor="middle" font-weight="bold" font-family="Liberation Serif, serif">A</text>
<path d="M1892 242 H1908 V254 L1903 259 H1892Z M1895 246 H1905 M1895 250 H1905 M1903 259 V254 H1908" stroke="#f0f0f0" stroke-width="1.2" fill="none" />
<path d="M1891 288 L1897 282 H1909 V294 H1897Z" stroke="#f0f0f0" stroke-width="1.2" fill="none" />
<path d="M1900 295 L1907 288" stroke="#7fc24a" stroke-width="2.2" fill="none" />
<path d="M1891 330 L1903 318 M1893 322 L1898 327 M1903 318 L1909 315" stroke="#3d8fe0" stroke-width="1.6" fill="none" />
<path d="M1891 365 L1897 356 L1904 363 Z M1898 355 L1906 350 M1890 367 H1902" stroke="#d4b33a" stroke-width="1.5" fill="none" />
<path d="M1894 398 L1904 388 A3 3 0 0 1 1908 392 L1898 402 Z" stroke="#f0f0f0" stroke-width="1.3" fill="none" />
<path d="M1890 403 H1896" stroke="#e04040" stroke-width="1.3" fill="none" />
<rect x="1885" y="420" width="2" height="1.5" fill="#666"/>
<rect x="1889" y="420" width="2" height="1.5" fill="#666"/>
<rect x="1893" y="420" width="2" height="1.5" fill="#666"/>
<rect x="1897" y="420" width="2" height="1.5" fill="#666"/>
<rect x="1901" y="420" width="2" height="1.5" fill="#666"/>
<rect x="1905" y="420" width="2" height="1.5" fill="#666"/>
<rect x="1909" y="420" width="2" height="1.5" fill="#666"/>
<path d="M1892 450 L1908 434" stroke="#f0f0f0" stroke-width="1.4" fill="none" />
<path d="M1892 487 L1908 471 M1900 471 H1908 V479" stroke="#f0f0f0" stroke-width="1.4" fill="none" />
<path d="M1892 522 Q1892 506 1908 506" stroke="#f0f0f0" stroke-width="1.4" fill="none" />
<path d="M1891 557 L1897 546 L1900 552 L1904 542 L1908 547" stroke="#f0f0f0" stroke-width="1.3" fill="none" />
<path d="M1892 578 H1907 V588 M1892 578 V586 H1900 M1903 590 L1907 594 L1909 588" stroke="#f0f0f0" stroke-width="1.2" fill="none" />
<path d="M1892 616 V628 M1908 616 V628 M1892 622 H1908 M1895 619 L1892 622 L1895 625 M1905 619 L1908 622 L1905 625" stroke="#f0f0f0" stroke-width="1.2" fill="none" />
<rect x="1892.5" y="651.5" width="16" height="13" fill="none" stroke="#fff" stroke-width="1.3"/>
<ellipse cx="1900.5" cy="694" rx="8.5" ry="7" fill="none" stroke="#fff" stroke-width="1.3"/>
<path d="M1893 721 V739 M1893 721 H1908 L1901 730 L1908 739 H1893" stroke="#f0f0f0" stroke-width="1.3" fill="none" />
<path d="M1907.00 766 A3.2 3.2 0 0 1 1905.10 770.60 A3.2 3.2 0 0 1 1900.50 772.50 A3.2 3.2 0 0 1 1895.90 770.60 A3.2 3.2 0 0 1 1894.00 766.00 A3.2 3.2 0 0 1 1895.90 761.40 A3.2 3.2 0 0 1 1900.50 759.50 A3.2 3.2 0 0 1 1905.10 761.40 A3.2 3.2 0 0 1 1907.00 766.00" fill="none" stroke="#fff" stroke-width="1.3"/>
<path d="M1892 794 H1907 V803 H1892Z M1892 808 Q1894 806 1896 808 Q1898 810 1900 808 Q1902 806 1904 808 Q1906 810 1908 808" stroke="#f0f0f0" stroke-width="1.2" fill="none" />
<path d="M1892 830 H1908 V845 H1892Z M1893 843 L1899 836 L1903 840 L1908 835" stroke="#f0f0f0" stroke-width="1.2" fill="none" />
<circle cx="1904" cy="834" r="1.5" fill="#fff"/>
<path d="M1892 866 V880 H1906 M1895 863 V877 H1909 M1896 875 L1900 869 L1903 872 L1907 866" stroke="#f0f0f0" stroke-width="1.2" fill="none" />
<rect x="1885" y="897" width="2" height="1.5" fill="#666"/>
<rect x="1889" y="897" width="2" height="1.5" fill="#666"/>
<rect x="1893" y="897" width="2" height="1.5" fill="#666"/>
<rect x="1897" y="897" width="2" height="1.5" fill="#666"/>
<rect x="1901" y="897" width="2" height="1.5" fill="#666"/>
<rect x="1905" y="897" width="2" height="1.5" fill="#666"/>
<rect x="1909" y="897" width="2" height="1.5" fill="#666"/>
<path d="M1896 916 V930 M1896 916 H1909 L1903 923 L1909 930 H1896" stroke="#f0f0f0" stroke-width="1.3" fill="none" />
<path d="M1892 913 H1911 M1892 913 V932 M1894.0 913 V911 M1896.6 913 V911 M1899.2 913 V911 M1901.8 913 V911 M1904.4 913 V911 M1907.0 913 V911 M1909.6 913 V911 M1892 915.6 H1890 M1892 918.2 H1890 M1892 920.8 H1890 M1892 923.4 H1890 M1892 926.0 H1890 M1892 928.6 H1890 M1892 931.2 H1890" stroke="#e8803a" stroke-width="1.1" fill="none" />
<rect x="1896.5" y="952.5" width="13" height="11" fill="none" stroke="#fff" stroke-width="1.3"/>
<path d="M1892 948 H1911 M1892 948 V967 M1894.0 948 V946 M1896.6 948 V946 M1899.2 948 V946 M1901.8 948 V946 M1904.4 948 V946 M1907.0 948 V946 M1909.6 948 V946 M1892 950.6 H1890 M1892 953.2 H1890 M1892 955.8 H1890 M1892 958.4 H1890 M1892 961.0 H1890 M1892 963.6 H1890 M1892 966.2 H1890" stroke="#e8803a" stroke-width="1.1" fill="none" />
<rect x="1884" y="974" width="29" height="19" fill="#2c2c2e"/>
<path d="M1896 983.0 L1900 987.0 L1904 983.0" stroke="#bbb" stroke-width="1.2" fill="none"/>
<path d="M1832 199 L1837 194 L1842 199" stroke="#606060" stroke-width="1.4" fill="none"/>
<path d="M1832.5 943 L1837.5 948 L1842.5 943" stroke="#505050" stroke-width="2" fill="none"/>
<rect x="295.5" y="966.5" width="16" height="17" fill="none" stroke="#555" stroke-width="1.2"/>
<path d="M331 966 H348 V983 H331Z M339.5 966 V983 M331 970 H348" stroke="#f0f0f0" stroke-width="1.2" fill="none" />
<path d="M367 966 H384 V983 H367Z M367 972 H384 M367 977 H384" stroke="#f0f0f0" stroke-width="1.2" fill="none" />
<path d="M427 966 H437 L442 971 V984 H427Z M434.5 971 V981 M430 976 H439" stroke="#f0f0f0" stroke-width="1.2" fill="none" />
<path d="M463 968 H479 V983 H463Z M465 976 H477 M467 974 L465 976 L467 978 M475 974 L477 976 L475 978" stroke="#f0f0f0" stroke-width="1.2" fill="none" />
<path d="M519 980 L516 974 A1.2 1.2 0 0 1 518 973 L521 976 V966 A1.3 1.3 0 0 1 523.5 966 V973 V964 A1.3 1.3 0 0 1 526 964 V973 V965 A1.3 1.3 0 0 1 528.5 965 V973 V967 A1.3 1.3 0 0 1 531 967 V977 Q531 984 525 984 Q521 984 519 980Z" stroke="#f0f0f0" stroke-width="1.2" fill="none" />
<path d="M555 965 V982 L559 978 L562 985 L564 984 L561 977 H566Z" stroke="#f0f0f0" stroke-width="1.2" fill="none" />
<circle cx="596" cy="972" r="6" fill="none" stroke="#fff" stroke-width="1.3"/>
<path d="M600.5 976.5 L605 981 M593 972 H599 M596 969 V975" stroke="#f0f0f0" stroke-width="1.3" fill="none" />
<path d="M628 965 V984 M625 965 H631 M625 984 H631" stroke="#f0f0f0" stroke-width="1.2" fill="none" />
<text x="638" y="982" font-size="10" fill="#fff" text-anchor="middle">A</text>
<rect x="654.5" y="962.5" width="92" height="24" rx="2" fill="none" stroke="#4a4a4a"/>
<rect x="727" y="963" width="1" height="23" fill="#4a4a4a"/>
<path d="M733 973.0 L737 977.0 L741 973.0" stroke="#ddd" stroke-width="1.2" fill="none"/>
<path d="M785 968 V981 M795 968 L788 974.5 L795 981" stroke="#555" stroke-width="1.2" fill="none" />
<path d="M828 968 L821 974.5 L828 981" stroke="#555" stroke-width="1.2" fill="none" />
<rect x="845.5" y="962.5" width="304" height="24" rx="2" fill="none" stroke="#4a4a4a"/>
<path d="M1166 968 L1173 974.5 L1166 981" stroke="#555" stroke-width="1.2" fill="none" />
<path d="M1201 968 L1208 974.5 L1201 981 M1211 968 V981" stroke="#555" stroke-width="1.2" fill="none" />
<rect x="1224" y="964" width="1" height="22" fill="#444"/>
<circle cx="1247" cy="975" r="8" fill="none" stroke="#e8e8e8" stroke-width="1.3"/><path d="M1250 970 L1243 975 L1250 980" stroke="#e8e8e8" stroke-width="1.3" fill="none"/>
<circle cx="1283" cy="975" r="8" fill="none" stroke="#555" stroke-width="1.3"/><path d="M1280 970 L1287 975 L1280 980" stroke="#555" stroke-width="1.3" fill="none"/>
<path d="M1678 973 H1690 V984 H1678Z M1681 973 V969 A3 3 0 0 1 1687 969" stroke="#f0f0f0" stroke-width="1.3" fill="none" />
<path d="M1705 973.0 L1709 977.0 L1713 973.0" stroke="#ddd" stroke-width="1.2" fill="none"/>
<circle cx="1735" cy="975" r="8" fill="none" stroke="#fff" stroke-width="1.3"/><text x="1735" y="979.5" font-size="11" font-style="italic" font-weight="bold" fill="#fff" text-anchor="middle">i</text>
<circle cx="1770" cy="975" r="3.5" fill="none" stroke="#fff" stroke-width="1.3"/>
<path d="M1770 966 V968.5 M1770 981.5 V984 M1761 975 H1763.5 M1776.5 975 H1779 M1764 969 L1765.5 970.5 M1774.5 979.5 L1776 981 M1764 981 L1765.5 979.5 M1774.5 970.5 L1776 969" stroke="#f0f0f0" stroke-width="1.3" fill="none" />
<path d="M1792 973.0 L1796 977.0 L1800 973.0" stroke="#ddd" stroke-width="1.2" fill="none"/>
<path d="M1818 973 A4.5 5 0 1 1 1827 973 A4.5 5 0 1 1 1818 973 M1813 985 Q1814 978 1819 977 M1831 985 Q1830 978 1826 977" stroke="#f0f0f0" stroke-width="1.3" fill="none" />
<path d="M1834 973.0 L1838 977.0 L1842 973.0" stroke="#ddd" stroke-width="1.2" fill="none"/>
<path d="M1244 1007 H1260 M1244 1013 H1260 M1248 1003 V1018 M1255 1003 V1018" stroke="#f0f0f0" stroke-width="1.2" fill="none" />
<path d="M1281 1007 H1296 M1281 1013 H1292 M1285 1003 V1018 M1291 1003 V1018 M1294 1015 A3 3 0 1 1 1297 1018" stroke="#f0f0f0" stroke-width="1.2" fill="none" />
<path d="M1319 1004 H1328 L1332 1008 V1019 H1319Z M1322 1013 A3 3 0 1 1 1326 1016" stroke="#f0f0f0" stroke-width="1.2" fill="none" />
<path d="M1354 1016 L1362 1004 L1366 1008 L1358 1019 M1360 1019 A3 3 0 1 0 1366 1014" stroke="#f0f0f0" stroke-width="1.2" fill="none" />
<path d="M1390 1016 L1398 1004 L1402 1008 L1394 1019" stroke="#f0f0f0" stroke-width="1.2" fill="none" />
<path d="M1401 1019 A3 3 0 1 0 1405 1013" stroke="#3d8fe0" stroke-width="1.3" fill="none" />
<path d="M1424 1004 H1441 V1019 H1424Z M1428 1009 H1438 L1435 1006 M1438 1014 H1428 L1431 1017" stroke="#f0f0f0" stroke-width="1.2" fill="none" />
<path d="M1454 1010.0 L1458 1014.0 L1462 1010.0" stroke="#ddd" stroke-width="1.2" fill="none"/></svg>
<!-- window controls -->
<div class="a" style="left:1771px;top:11px;width:13px;height:1px;background:#f0f0f0"></div>
<div class="a" style="left:1829px;top:8px;width:10px;height:10px;border:1px solid #f0f0f0"></div>
<div class="a" style="left:1832px;top:5px;width:10px;height:10px;border-top:1px solid #f0f0f0;border-right:1px solid #f0f0f0"></div>
<svg width="1913" height="30" style="position:absolute;left:0;top:0"><path d="M1886 6 L1898 18 M1898 6 L1886 18" stroke="#f0f0f0" stroke-width="1.3"/></svg>
</body></html>
